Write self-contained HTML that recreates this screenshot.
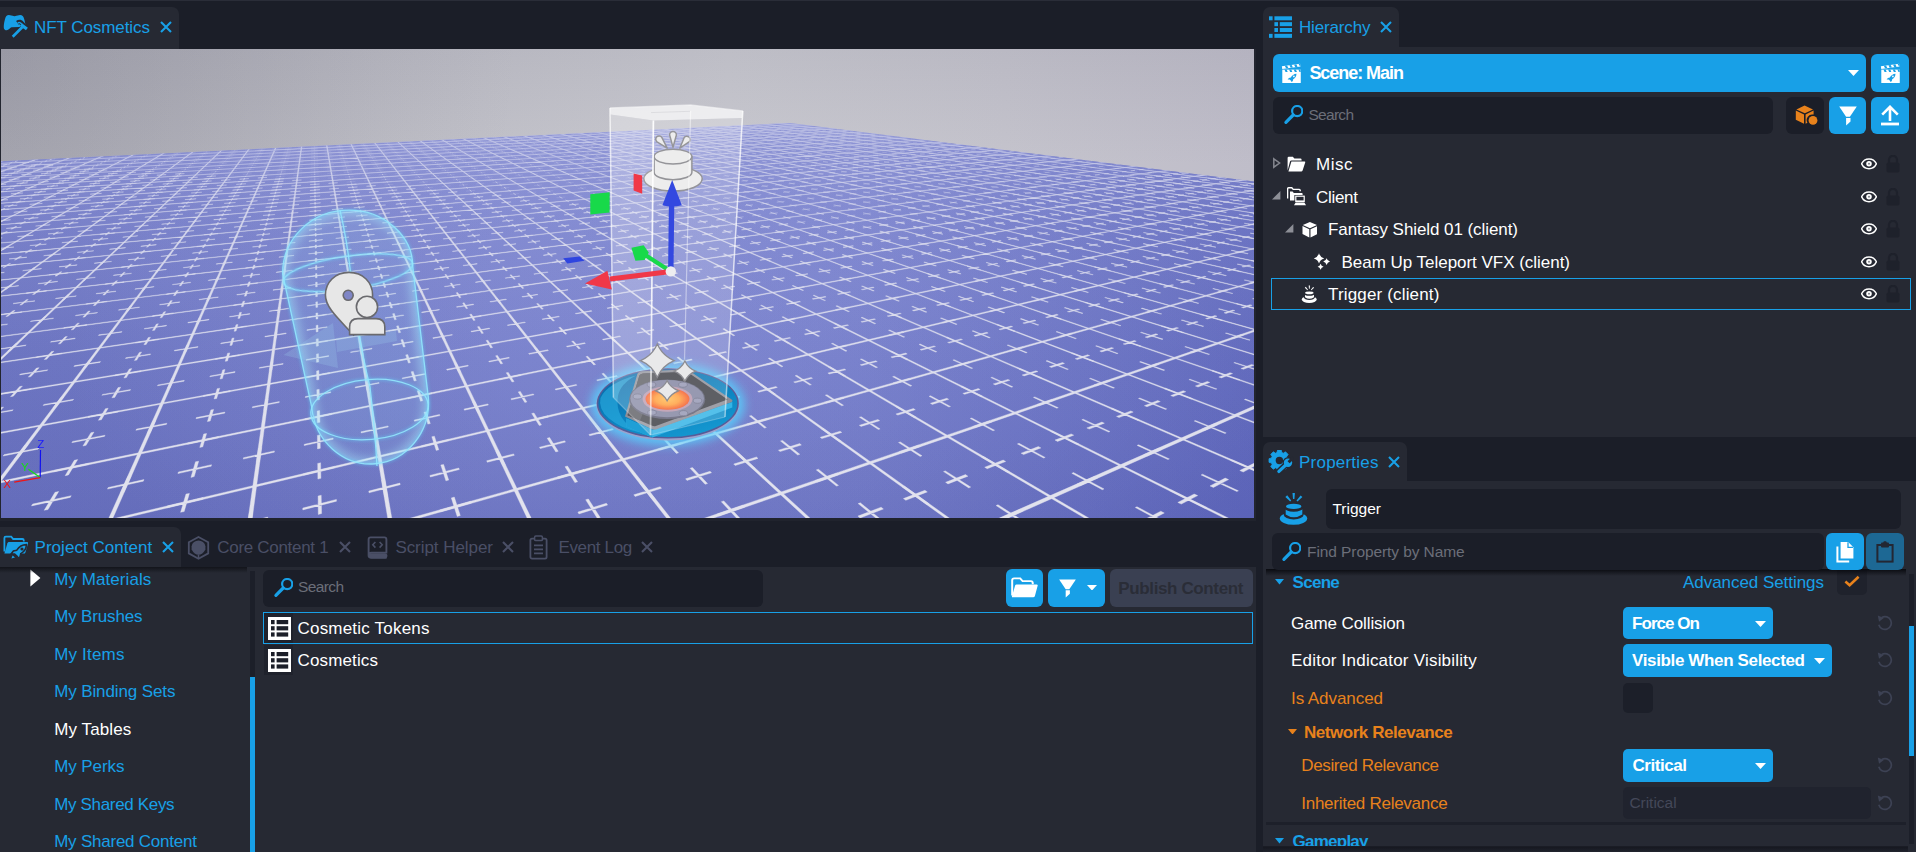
<!DOCTYPE html>
<html><head><meta charset="utf-8"><title>NFT Cosmetics</title>
<style>
html,body{margin:0;padding:0;}
body{width:1916px;height:852px;overflow:hidden;background:#1b1e28;font-family:"Liberation Sans",sans-serif;position:relative;}
.t{position:absolute;white-space:nowrap;line-height:20px;height:20px;}
.r{position:absolute;}
svg{position:absolute;overflow:hidden;}
</style></head><body>
<svg style="left:1px;top:49px" width="1253" height="469" viewBox="1 49 1253 469">
<defs>
<linearGradient id="sky" x1="0" y1="0" x2="1" y2="0"><stop offset="0" stop-color="#b0b0b9"/><stop offset=".3" stop-color="#bfbfc7"/><stop offset=".58" stop-color="#c9c9d0"/><stop offset=".8" stop-color="#c5c4cd"/><stop offset="1" stop-color="#bfbdc9"/></linearGradient>
<linearGradient id="skyv" gradientUnits="userSpaceOnUse" x1="0" y1="49" x2="0" y2="165"><stop offset="0" stop-color="#55556a" stop-opacity=".1"/><stop offset="1" stop-color="#55556a" stop-opacity="0"/></linearGradient>
<radialGradient id="skyc" gradientUnits="userSpaceOnUse" cx="0" cy="49" r="520"><stop offset="0" stop-color="#4a4a5c" stop-opacity=".15"/><stop offset="1" stop-color="#4a4a5c" stop-opacity="0"/></radialGradient>
<linearGradient id="gnd" gradientUnits="userSpaceOnUse" x1="0" y1="120" x2="0" y2="518"><stop offset="0" stop-color="#8c92d0"/><stop offset=".25" stop-color="#7c84cb"/><stop offset=".6" stop-color="#7079c4"/><stop offset="1" stop-color="#6870bd"/></linearGradient>
<linearGradient id="fog" gradientUnits="userSpaceOnUse" x1="0" y1="120" x2="0" y2="518"><stop offset="0" stop-color="#959cdb" stop-opacity=".42"/><stop offset=".12" stop-color="#9299da" stop-opacity=".3"/><stop offset=".3" stop-color="#8e95d6" stop-opacity=".16"/><stop offset=".6" stop-color="#8c92d0" stop-opacity=".06"/><stop offset="1" stop-color="#8c92d0" stop-opacity="0"/></linearGradient>
<linearGradient id="boxg" gradientUnits="userSpaceOnUse" x1="0" y1="105" x2="0" y2="435"><stop offset="0" stop-color="#fff" stop-opacity=".5"/><stop offset=".3" stop-color="#fff" stop-opacity=".44"/><stop offset=".7" stop-color="#fff" stop-opacity=".4"/><stop offset="1" stop-color="#fff" stop-opacity=".36"/></linearGradient>
<linearGradient id="boxe" gradientUnits="userSpaceOnUse" x1="0" y1="105" x2="0" y2="435"><stop offset="0" stop-color="#fff" stop-opacity="1"/><stop offset=".7" stop-color="#fff" stop-opacity=".85"/><stop offset="1" stop-color="#fff" stop-opacity=".55"/></linearGradient>
<radialGradient id="orb"><stop offset="0" stop-color="#ffbf5a"/><stop offset=".55" stop-color="#ffa040"/><stop offset="1" stop-color="#f45a2c"/></radialGradient>
<linearGradient id="padb" x1="0" y1="0" x2=".6" y2="1"><stop offset="0" stop-color="#0a64a4"/><stop offset=".5" stop-color="#0a7cba"/><stop offset="1" stop-color="#1496cf"/></linearGradient>
<filter id="b2" x="-20%" y="-20%" width="140%" height="140%"><feGaussianBlur stdDeviation="1.6"/></filter>
<filter id="b4" x="-20%" y="-20%" width="140%" height="140%"><feGaussianBlur stdDeviation="4"/></filter>
<filter id="b5" x="-20%" y="-30%" width="140%" height="160%"><feGaussianBlur stdDeviation="5"/></filter>
<linearGradient id="gsh" gradientUnits="userSpaceOnUse" x1="560" y1="0" x2="1254" y2="0"><stop offset="0" stop-color="#5058b8" stop-opacity="0"/><stop offset=".45" stop-color="#4c54b2" stop-opacity=".06"/><stop offset="1" stop-color="#4c54b2" stop-opacity=".46"/></linearGradient>
<linearGradient id="gsl" gradientUnits="userSpaceOnUse" x1="0" y1="0" x2="500" y2="0"><stop offset="0" stop-color="#5860b4" stop-opacity=".24"/><stop offset="1" stop-color="#5860b4" stop-opacity="0"/></linearGradient>
<filter id="gb" x="0" y="0" width="100%" height="100%"><feGaussianBlur stdDeviation=".55"/></filter>
<radialGradient id="glt" gradientUnits="userSpaceOnUse" cx="680" cy="360" r="620" gradientTransform="translate(0 180) scale(1 .5)"><stop offset="0" stop-color="#b0b8ff" stop-opacity=".2"/><stop offset=".6" stop-color="#b0b8ff" stop-opacity=".09"/><stop offset="1" stop-color="#b0b8ff" stop-opacity="0"/></radialGradient>
<clipPath id="gc"><path d="M0 161.3L790 123L1255 181.7V519H0z"/></clipPath>
</defs>
<rect x="0" y="48" width="1256" height="472" fill="url(#sky)"/><rect x="0" y="48" width="1256" height="140" fill="url(#skyv)"/><rect x="0" y="48" width="600" height="140" fill="url(#skyc)"/>
<g clip-path="url(#gc)">
<rect x="0" y="100" width="1256" height="420" fill="url(#gnd)"/><rect x="0" y="100" width="1256" height="420" fill="url(#gsh)"/><rect x="0" y="100" width="1256" height="420" fill="url(#gsl)"/><rect x="0" y="100" width="1256" height="420" fill="url(#glt)"/>
<g filter="url(#gb)"><g opacity=".93" fill="#ececf2" stroke="#ececf2" stroke-width=".4">
<path d="M-61.3 170.3l1.2 0l35.9-10.2l-1.1 0zM-61.3 180.5l1.3-0.1l70.4-22l-0.9 0.1zM-61.4 192.8l1.4 0l104-35.9l-1 0zM-61.5 208.1l1.6-0.1l136.3-52.7l-0.9 0.1zM-61.6 227.5l1.8-0.2l167.6-73.4l-0.9 0zM-61.7 252.8l2-0.2l197.9-100.1l-0.8 0zM-62 287.5l2.5-0.3l227.2-136.1l-0.9 0zM-62.3 337.8l3-0.4l255.5-187.7l-0.8 0.1zM-62.7 417.3l3.8-0.7l282.8-268.1l-0.8 0zM-63.6 561.8l5.4-1.3l309-413.3l-0.8 0zM79.3 583.9l5.2-1.4l192.4-436.5l-0.8 0zM239.2 581.5l4.8-1.4l58.2-435.3l-0.7 0zM398.6 584.2l4.4-1.4l-76.2-439.2l-0.7 0.1zM557.2 581.8l3.9-1.4l-210.4-437.9l-0.7 0.1zM718.3 584.5l3.5-1.4l-347.8-441.7l-0.7 0.1zM875.5 582.1l3.1-1.3l-482-440.4l-0.6 0zM1038.4 584.9l2.6-1.4l-622.4-444.1l-0.6 0zM1194.2 582.5l2.3-1.4l-756.5-442.7l-0.6 0zM1319.2 565.4l1.9-1.3l-860.2-426.7l-0.6 0zM1325 501.4l1.6-1l-845.4-364l-0.6 0.1zM1322.1 449l1.4-0.7l-822.5-312.8l-0.5 0zM1319.8 407.9l1.3-0.6l-800.8-272.7l-0.5 0zM1323.9 376.5l1.1-0.5l-785.8-242.3l-0.6 0zM1321.8 348.8l1-0.4l-765.3-215.5l-0.5 0zM1320.1 325.7l0.9-0.4l-745.6-193.3l-0.5 0zM1323.2 307.1l0.9-0.3l-731.2-175.6l-0.5 0zM1321.6 290l0.9-0.3l-712.5-159.3l-0.5 0zM1320.3 275.2l0.7-0.3l-694.4-145.3l-0.4 0.1zM1322.8 262.9l0.7-0.2l-680.6-133.8l-0.4 0zM1321.5 251.3l0.7-0.2l-663.4-123l-0.4 0zM1320.4 241l0.6-0.2l-646.6-113.4l-0.5 0zM1322.5 232.3l0.7-0.1l-633.6-105.5l-0.5 0zM1321.4 223.9l0.6-0.1l-617.6-97.8l-0.4 0zM1320.5 216.4l0.5-0.2l-602-90.9l-0.5 0zM1322.3 209.9l0.6-0.1l-589.7-85.2l-0.4 0.1zM1321.4 203.5l0.5-0.1l-574.8-79.4l-0.4 0zM1320.5 197.7l0.5 0l-560.3-74.3l-0.4 0zM1322.2 192.7l0.4-0.1l-548.5-69.9l-0.4 0.1zM1321.3 187.8l0.5-0.1l-534.7-65.6l-0.4 0zM1197.8 583.2l124.9-77.8l-4.9-2.1l-125 77zM862.4 582.7l459.8-204.2l-3.5-1l-459.4 202.2zM527.8 582.1l794.1-273.8l-2.7-0.6l-792.6 271.4zM193.9 581.5l1127.9-317.8l-2.2-0.4l-1125 315.3zM-61.9 562.5l1383.5-329.6l-1.8-0.3l-1379.7 327.2zM-65.4 496.5l1387-286.2l-1.7-0.2l-1383.5 284.3zM-60.9 444.6l1382.4-251.5l-1.4-0.2l-1379.5 250.2zM-63.8 404.9l1364.1-222l-1.2-0.2l-1361.5 220.9zM-66.1 372.7l1324-194.9l-1.2-0.2l-1321.5 194.1zM-62.7 345.3l1281.7-172.2l-1.1-0.1l-1279.5 171.5zM-64.8 323l1248-154.2l-1-0.1l-1245.9 153.6zM-62 303.5l1212.1-138.7l-1-0.1l-1210.1 138.2zM-63.8 287.1l1183.2-126l-0.9-0.1l-1181.4 125.6zM-61.5 272.5l1152.4-114.8l-0.8-0.1l-1150.7 114.4zM-63.1 260l1127.4-105.5l-0.8-0.1l-1125.8 105.2zM-61 248.6l1100.5-97.1l-0.7-0.1l-1099.1 96.8zM-62.5 238.7l1078.8-90l-0.7-0.1l-1077.4 89.8zM-60.7 229.6l1055.2-83.5l-0.6-0.1l-1053.9 83.3zM-62 221.6l1036-78l-0.6-0.1l-1034.8 77.8zM-60.4 214.2l1015.1-72.9l-0.5-0.1l-1014 72.7zM-61.6 207.6l998.1-68.5l-0.5-0.1l-997.1 68.3zM-62.8 201.5l982.1-64.5l-0.5-0.1l-981 64.4zM-61.3 195.8l964.4-60.8l-0.5 0l-963.4 60.6zM-62.4 190.7l950.1-57.5l-0.5-0.1l-949.1 57.4zM-61.1 185.8l934.1-54.4l-0.4 0l-933.2 54.3zM-62 181.5l921.1-51.7l-0.4-0.1l-920.3 51.6zM-60.8 177.3l906.7-49.1l-0.4-0.1l-905.9 49zM-61.7 173.5l895-46.9l-0.4 0l-894.2 46.7zM-60.6 169.8l881.9-44.6l-0.4 0l-881.1 44.5zM-61.5 166.5l871.3-42.7l-0.3 0l-870.6 42.6zM-60.5 163.3l859.3-40.8l-0.3 0l-858.5 40.7z"/>
<path d="M-18.1 166l9.3-0.5l0.3-0.1l-9.3 0.5zM-15.3 166.2l0.8 0l3.2-1l-0.9 0zM-18.6 171.2l9.8-0.5l0.3-0.1l-9.8 0.5zM-15.7 171.5l1-0.1l3.3-1.1l-1 0.1zM-12 169.1l9.5-0.5l0.3-0.1l-9.5 0.5zM-9.1 169.3l0.9 0l3.1-1.1l-0.9 0.1zM-5.7 167l9.3-0.4l0.3-0.1l-9.3 0.4zM-2.9 167.3l0.9-0.1l3.1-1l-0.9 0.1zM0.4 165.1l9.1-0.5l0.3-0.1l-9.1 0.5zM3.2 165.3l0.9 0l2.9-1l-0.9 0zM-19.1 177l10.3-0.6l0.3-0.1l-10.3 0.6zM-16 177.3l0.9-0.1l3.5-1.2l-1 0.1zM-5.5 172.4l9.8-0.6l0.3-0.1l-9.8 0.6zM-2.6 172.6l1 0l3.2-1.1l-1 0zM7 168.1l9.3-0.5l0.3-0.1l-9.3 0.5zM9.9 168.3l0.9 0l2.9-1l-0.9 0zM-12.4 180.8l10.6-0.6l0.4-0.1l-10.6 0.6zM-9.2 181.1l1-0.1l3.6-1.2l-1.1 0zM-5.4 178.3l10.4-0.6l0.3-0.1l-10.3 0.5zM-2.2 178.6l1-0.1l3.3-1.2l-0.9 0zM1.4 175.9l10-0.6l0.4-0.1l-10.1 0.5zM4.5 176.1l0.9 0l3.3-1.2l-1 0.1zM7.8 173.5l9.9-0.5l0.2-0.1l-9.8 0.5zM10.9 173.8l0.9 0l3.1-1.2l-0.9 0.1zM14 171.3l9.6-0.5l0.3-0.1l-9.6 0.5zM17 171.6l0.9-0.1l3-1.1l-0.9 0.1zM19.9 169.2l9.4-0.5l0.3-0.1l-9.4 0.5zM22.9 169.4l0.9 0l2.8-1l-0.9 0zM25.6 167.1l9.2-0.4l0.3-0.1l-9.2 0.4zM28.5 167.4l0.9-0.1l2.8-1l-0.9 0.1zM31.1 165.2l9-0.5l0.3-0.1l-9 0.5zM34 165.4l0.9 0l2.6-1l-0.9 0zM-5.2 184.9l11-0.7l0.3-0.1l-10.9 0.6zM-1.8 185.2l1-0.1l3.6-1.4l-1.1 0.1zM8.7 179.6l10.4-0.6l0.3-0.1l-10.4 0.6zM11.9 179.9l1.1-0.1l3.2-1.2l-1 0zM21.4 174.7l9.9-0.5l0.3-0.1l-9.9 0.5zM24.6 175l0.9 0l3-1.2l-0.9 0.1zM33.1 170.3l9.5-0.5l0.2-0.1l-9.4 0.5zM36.2 170.6l0.9-0.1l2.7-1.1l-0.9 0.1zM43.9 166.2l9.1-0.5l0.2-0.1l-9 0.5zM46.9 166.4l0.8 0l2.6-1l-0.9 0.1zM-12.8 195.4l11.9-0.7l0.4-0.2l-11.9 0.8zM-9.2 195.8l1.1-0.1l4-1.6l-1.2 0.1zM-4.9 192.2l11.6-0.7l0.3-0.1l-11.6 0.7zM-1.4 192.6l1.1-0.1l3.8-1.5l-1.1 0.1zM2.6 189.2l11.3-0.7l0.3-0.1l-11.3 0.7zM6.1 189.6l1-0.1l3.6-1.5l-1 0.1zM9.7 186.3l11-0.6l0.4-0.2l-11 0.7zM13.2 186.7l1-0.1l3.4-1.4l-1 0.1zM16.6 183.6l10.7-0.7l0.3-0.1l-10.7 0.6zM20 183.9l1-0.1l3.3-1.3l-1.1 0zM23.1 180.9l10.5-0.6l0.3-0.1l-10.5 0.6zM26.4 181.2l1 0l3.2-1.3l-1 0zM29.4 178.4l10.2-0.6l0.3-0.1l-10.2 0.6zM32.6 178.7l1-0.1l3-1.2l-1 0.1zM35.4 176l9.9-0.6l0.3-0.1l-9.9 0.6zM38.6 176.3l0.9-0.1l2.9-1.2l-0.9 0.1zM41.1 173.7l9.7-0.6l0.3-0.1l-9.7 0.6zM44.3 173.9l0.9 0l2.8-1.1l-1 0zM46.6 171.4l9.5-0.5l0.3-0.1l-9.5 0.5zM49.7 171.7l1-0.1l2.6-1l-0.9 0zM51.9 169.3l9.3-0.5l0.2-0.1l-9.2 0.5zM55 169.5l0.9 0l2.5-1l-0.9 0zM57 167.2l9.1-0.4l0.2-0.1l-9 0.5zM60 167.5l0.9-0.1l2.4-1l-0.8 0.1zM-4.7 200.6l12.4-0.8l0.3-0.2l-12.3 0.8zM-0.9 201l1.2-0.1l4-1.7l-1.2 0.1zM10.9 193.9l11.7-0.8l0.3-0.1l-11.6 0.7zM14.5 194.3l1.2-0.1l3.6-1.6l-1.1 0.1zM25 187.8l11.1-0.7l0.3-0.1l-11.1 0.7zM28.5 188.2l1.1-0.1l3.3-1.4l-1.1 0zM37.9 182.3l10.5-0.6l0.2-0.2l-10.4 0.7zM41.3 182.6l1 0l3-1.4l-1 0.1zM49.6 177.2l10-0.5l0.3-0.1l-10 0.5zM52.9 177.5l1 0l2.7-1.2l-0.9 0zM60.4 172.6l9.6-0.5l0.2-0.1l-9.5 0.5zM63.6 172.9l0.9-0.1l2.5-1.1l-0.9 0.1zM70.4 168.3l9.1-0.5l0.2-0.1l-9.1 0.5zM73.4 168.6l0.9-0.1l2.4-1l-0.9 0zM-13.4 214.3l13.6-1l0.5-0.2l-13.7 1zM-9.3 214.8l1.3-0.1l4.5-2.1l-1.2 0.1zM-4.4 210.1l13.2-0.9l0.4-0.2l-13.2 0.9zM-0.4 210.6l1.3-0.1l4.3-2l-1.3 0.1zM4.1 206.2l12.8-0.9l0.4-0.2l-12.8 0.9zM8.1 206.7l1.2-0.1l4.1-1.9l-1.3 0.1zM12.2 202.5l12.4-0.9l0.4-0.1l-12.4 0.8zM16.1 202.9l1.2-0.1l3.8-1.8l-1.2 0.1zM19.9 199l12-0.9l0.4-0.1l-12.1 0.8zM23.7 199.4l1.1-0.1l3.7-1.7l-1.2 0.1zM27.1 195.6l11.8-0.8l0.3-0.1l-11.7 0.7zM30.9 196l1.1-0.1l3.5-1.6l-1.1 0.1zM34.1 192.4l11.4-0.7l0.3-0.2l-11.4 0.8zM37.7 192.8l1.1-0.1l3.3-1.5l-1.1 0zM40.7 189.4l11.1-0.7l0.3-0.2l-11.1 0.7zM44.3 189.7l1 0l3.2-1.5l-1.1 0zM47 186.5l10.8-0.7l0.3-0.1l-10.8 0.6zM50.5 186.8l1-0.1l3-1.4l-1 0.1zM53 183.7l10.5-0.6l0.3-0.2l-10.5 0.7zM56.4 184l1.1 0l2.8-1.4l-1 0.1zM58.7 181.1l10.3-0.7l0.3-0.1l-10.3 0.6zM62.1 181.4l1-0.1l2.8-1.3l-1 0.1zM64.2 178.5l10-0.6l0.3-0.1l-10 0.6zM67.6 178.8l0.9 0l2.7-1.3l-1 0.1zM69.5 176.1l9.8-0.6l0.2-0.1l-9.8 0.6zM72.8 176.4l0.9-0.1l2.5-1.1l-0.9 0zM74.5 173.8l9.6-0.6l0.2-0.1l-9.5 0.6zM77.8 174.1l0.9-0.1l2.4-1.1l-0.9 0zM79.4 171.6l9.3-0.6l0.2-0.1l-9.3 0.5zM82.6 171.8l0.9 0l2.3-1.1l-0.9 0zM84 169.4l9.2-0.5l0.2-0.1l-9.2 0.5zM87.2 169.7l0.8-0.1l2.3-1l-0.9 0zM-4.1 221.1l14.2-1.1l0.5-0.3l-14.2 1.1zM0.3 221.6l1.4-0.1l4.5-2.3l-1.3 0.1zM13.7 212.3l13.3-1l0.3-0.2l-13.2 1zM17.9 212.8l1.2-0.1l4.1-2.1l-1.3 0.1zM29.6 204.4l12.4-0.9l0.4-0.1l-12.5 0.8zM33.5 204.9l1.3-0.1l3.6-1.9l-1.2 0.1zM43.8 197.3l11.8-0.7l0.3-0.2l-11.7 0.8zM47.7 197.7l1.1 0l3.3-1.7l-1.1 0.1zM56.7 191l11.2-0.8l0.2-0.1l-11.1 0.7zM60.4 191.3l1.1-0.1l3-1.5l-1.1 0.1zM68.5 185.1l10.5-0.6l0.3-0.1l-10.6 0.6zM72 185.5l1-0.1l2.7-1.4l-1 0.1zM79.1 179.8l10.1-0.6l0.2-0.1l-10 0.6zM82.6 180.1l0.9 0l2.5-1.3l-0.9 0.1zM88.9 175l9.6-0.6l0.2-0.1l-9.5 0.6zM92.2 175.3l1-0.1l2.3-1.1l-1 0zM98 170.5l9.1-0.5l0.2-0.1l-9.1 0.5zM101.1 170.8l0.9-0.1l2.1-1l-0.8 0zM-14.2 239.4l15.9-1.4l0.5-0.2l-15.8 1.3zM-9.3 240.1l1.5-0.1l5.2-2.9l-1.5 0.1zM-3.7 233.8l15.4-1.3l0.4-0.3l-15.3 1.3zM1 234.4l1.5-0.1l4.9-2.7l-1.4 0.1zM6.2 228.5l14.7-1.2l0.5-0.2l-14.8 1.2zM10.8 229.1l1.4-0.1l4.6-2.5l-1.4 0.1zM15.4 223.6l14.3-1.2l0.4-0.2l-14.3 1.1zM19.9 224.1l1.4-0.1l4.3-2.4l-1.3 0.1zM24.1 218.9l13.8-1.1l0.4-0.2l-13.8 1.1zM28.5 219.4l1.3-0.1l4.1-2.2l-1.3 0.1zM32.3 214.5l13.4-1l0.3-0.2l-13.3 1zM36.6 215l1.3-0.1l3.9-2.1l-1.3 0.1zM40.1 210.3l12.9-0.9l0.3-0.2l-12.9 0.9zM44.3 210.8l1.2-0.1l3.7-2l-1.3 0.1zM47.4 206.4l12.5-0.9l0.4-0.2l-12.5 0.9zM51.5 206.9l1.2-0.1l3.5-1.9l-1.2 0.1zM54.4 202.7l12.1-0.9l0.3-0.2l-12.1 0.9zM58.4 203.1l1.2-0.1l3.2-1.8l-1.1 0.1zM61 199.1l11.8-0.8l0.3-0.1l-11.8 0.8zM64.9 199.5l1.1 0l3.2-1.7l-1.2 0zM67.2 195.8l11.5-0.8l0.3-0.2l-11.5 0.8zM71.1 196.2l1.1-0.1l3-1.6l-1.1 0zM73.2 192.6l11.2-0.8l0.2-0.1l-11.1 0.7zM77 192.9l1.1 0l2.8-1.6l-1.1 0.1zM78.9 189.5l10.9-0.7l0.2-0.1l-10.9 0.7zM82.6 189.9l1-0.1l2.7-1.5l-1 0.1zM84.3 186.6l10.6-0.6l0.2-0.2l-10.6 0.7zM87.9 187l1.1-0.1l2.5-1.4l-1 0zM89.5 183.8l10.3-0.6l0.2-0.1l-10.3 0.6zM93 184.2l1-0.1l2.5-1.3l-1 0zM94.4 181.2l10.1-0.6l0.2-0.1l-10.1 0.6zM97.9 181.5l1-0.1l2.3-1.2l-0.9 0zM99.1 178.7l9.9-0.6l0.2-0.1l-9.8 0.5zM102.6 179l0.9-0.1l2.3-1.2l-1 0zM103.7 176.2l9.6-0.5l0.2-0.1l-9.6 0.5zM107.1 176.5l0.9 0l2.1-1.2l-0.9 0zM108 173.9l9.4-0.5l0.2-0.1l-9.4 0.5zM111.3 174.2l0.9-0.1l2.1-1.1l-0.9 0zM112.2 171.7l9.2-0.5l0.2-0.2l-9.2 0.6zM115.4 171.9l0.9 0l2-1.1l-0.9 0zM-3.2 248.7l16.6-1.5l0.5-0.3l-16.6 1.5zM1.9 249.5l1.6-0.1l5.3-3.2l-1.5 0.1zM17.4 236.7l15.4-1.3l0.5-0.3l-15.4 1.3zM22.3 237.4l1.5-0.2l4.6-2.7l-1.4 0.1zM35.5 226.1l14.4-1.1l0.3-0.3l-14.3 1.2zM40.1 226.7l1.4-0.1l4.1-2.5l-1.3 0.2zM51.5 216.8l13.4-1.1l0.4-0.2l-13.4 1.1zM55.9 217.3l1.3-0.1l3.7-2.2l-1.3 0.1zM65.8 208.4l12.6-0.9l0.3-0.2l-12.6 1zM70 208.9l1.2-0.1l3.3-1.9l-1.2 0.1zM78.6 201l11.8-0.9l0.3-0.1l-11.9 0.8zM82.6 201.4l1.1-0.1l3-1.7l-1.2 0zM90.1 194.2l11.2-0.7l0.3-0.2l-11.3 0.8zM94 194.6l1-0.1l2.7-1.5l-1.1 0zM100.5 188.1l10.7-0.7l0.2-0.1l-10.6 0.7zM104.3 188.5l1-0.1l2.4-1.4l-1 0zM110 182.6l10.2-0.6l0.2-0.2l-10.1 0.6zM113.6 182.9l1-0.1l2.2-1.3l-1 0.1zM118.7 177.5l9.7-0.6l0.2-0.1l-9.7 0.6zM122.2 177.8l0.9-0.1l2-1.2l-0.9 0.1zM126.7 172.8l9.2-0.5l0.2-0.1l-9.2 0.5zM130.1 173.1l0.8-0.1l1.9-1.1l-0.9 0.1zM-15.2 274.7l19.1-2l0.5-0.4l-19 2zM-9.4 275.7l1.8-0.2l6.3-4.2l-1.8 0.2zM-2.7 266.6l18.3-1.8l0.5-0.4l-18.2 1.8zM3 267.5l1.7-0.2l5.8-3.8l-1.7 0.2zM9 259.1l17.4-1.7l0.5-0.3l-17.4 1.7zM14.4 260l1.7-0.2l5.4-3.5l-1.7 0.1zM19.8 252.2l16.7-1.6l0.5-0.3l-16.7 1.6zM25.1 253l1.6-0.2l5-3.3l-1.6 0.2zM29.8 245.7l16.1-1.4l0.5-0.3l-16.1 1.4zM35 246.5l1.6-0.2l4.6-3l-1.5 0.1zM39.2 239.7l15.5-1.4l0.4-0.2l-15.4 1.3zM44.3 240.4l1.5-0.1l4.3-2.9l-1.4 0.1zM48 234.1l15-1.3l0.3-0.3l-14.9 1.3zM52.9 234.7l1.5-0.1l4.1-2.7l-1.5 0.1zM56.3 228.8l14.4-1.2l0.3-0.3l-14.4 1.2zM61 229.4l1.4-0.1l3.9-2.6l-1.4 0.2zM64 223.8l13.9-1.1l0.4-0.2l-13.9 1.1zM68.7 224.4l1.3-0.1l3.6-2.4l-1.3 0.1zM71.3 219.1l13.5-1l0.3-0.3l-13.5 1.1zM75.8 219.7l1.4-0.1l3.4-2.3l-1.3 0.1zM78.2 214.7l13-1l0.3-0.2l-13 1zM82.6 215.2l1.3-0.1l3.2-2.1l-1.2 0.1zM84.7 210.5l12.6-0.9l0.3-0.2l-12.6 1zM89 211l1.2-0.1l3.1-2l-1.2 0.1zM90.8 206.6l12.3-0.9l0.3-0.2l-12.3 0.9zM95.1 207.1l1.1-0.1l2.9-1.9l-1.1 0.1zM96.6 202.9l12-0.9l0.2-0.2l-11.9 0.9zM100.8 203.3l1.1-0.1l2.8-1.8l-1.2 0.1zM102.2 199.3l11.6-0.8l0.2-0.2l-11.6 0.9zM106.2 199.7l1.1 0l2.6-1.8l-1.1 0.1zM107.4 195.9l11.3-0.7l0.2-0.2l-11.2 0.8zM111.4 196.3l1.1 0l2.5-1.7l-1.1 0.1zM112.4 192.7l11-0.7l0.2-0.1l-11 0.7zM116.3 193.1l1.1-0.1l2.3-1.5l-1 0.1zM117.2 189.7l10.7-0.7l0.2-0.2l-10.7 0.7zM121 190l1 0l2.3-1.5l-1.1 0.1zM121.7 186.8l10.4-0.7l0.2-0.1l-10.4 0.6zM125.5 187.1l1-0.1l2.1-1.4l-1 0.1zM126 184l10.2-0.6l0.2-0.2l-10.2 0.7zM129.7 184.3l1 0l2-1.4l-0.9 0.1zM130.2 181.3l9.9-0.6l0.2-0.1l-9.9 0.6zM133.8 181.6l0.9 0l2-1.3l-0.9 0.1zM134.1 178.8l9.7-0.6l0.2-0.1l-9.7 0.6zM137.7 179.1l0.9-0.1l1.9-1.2l-0.9 0.1zM137.9 176.4l9.5-0.6l0.2-0.1l-9.5 0.5zM141.4 176.6l0.9 0l1.8-1.2l-0.9 0.1zM141.6 174l9.2-0.5l0.2-0.1l-9.3 0.5zM145 174.3l0.9-0.1l1.7-1.1l-0.9 0.1zM145.1 171.8l9-0.5l0.2-0.1l-9.1 0.5zM148.4 172l0.9 0l1.6-1.1l-0.8 0.1zM-2 288.3l20.2-2.3l0.6-0.4l-20.2 2.2zM4.2 289.4l2-0.2l6.4-4.7l-1.9 0.2zM22.6 270.8l18.4-1.9l0.5-0.4l-18.4 1.9zM28.4 271.7l1.8-0.2l5.5-3.9l-1.8 0.1zM43.6 255.8l16.9-1.6l0.4-0.4l-16.8 1.7zM49.1 256.6l1.7-0.1l4.6-3.5l-1.6 0.2zM61.8 242.8l15.6-1.4l0.4-0.3l-15.6 1.4zM67 243.6l1.5-0.2l4.1-3l-1.5 0.2zM77.7 231.5l14.5-1.2l0.3-0.3l-14.4 1.3zM82.6 232.2l1.4-0.2l3.6-2.6l-1.4 0.1zM91.7 221.6l13.5-1.1l0.3-0.3l-13.5 1.1zM96.4 222.1l1.3-0.1l3.2-2.3l-1.3 0.1zM104.1 212.7l12.7-1l0.3-0.2l-12.7 1zM108.6 213.2l1.2-0.1l2.8-2.1l-1.2 0.1zM115.2 204.8l12-0.9l0.2-0.1l-11.9 0.8zM119.5 205.3l1.2-0.1l2.5-1.9l-1.2 0.1zM125.2 197.7l11.3-0.8l0.2-0.2l-11.3 0.8zM129.3 198.1l1.1-0.1l2.3-1.6l-1.1 0zM134.2 191.3l10.8-0.7l0.1-0.2l-10.7 0.7zM138.1 191.6l1.1 0l2.1-1.5l-1.1 0zM142.4 185.4l10.2-0.6l0.2-0.1l-10.2 0.6zM146.2 185.8l1-0.1l1.9-1.4l-1 0.1zM149.9 180.1l9.7-0.6l0.2-0.1l-9.7 0.6zM153.5 180.4l1 0l1.7-1.3l-0.9 0.1zM156.8 175.2l9.2-0.5l0.2-0.1l-9.3 0.5zM160.2 175.5l0.9 0l1.6-1.2l-0.9 0.1zM-16.8 327.6l23.8-3l0.7-0.7l-23.7 3.1zM-9.6 329.2l2.3-0.3l7.9-6.5l-2.3 0.3zM-1.2 315.1l22.6-2.8l0.6-0.5l-22.5 2.8zM5.8 316.6l2.2-0.3l7.1-5.9l-2.1 0.3zM13 303.8l21.4-2.6l0.6-0.5l-21.3 2.5zM19.8 305.1l2.1-0.3l6.4-5.3l-2 0.2zM26 293.4l20.4-2.3l0.5-0.5l-20.3 2.3zM32.5 294.6l2-0.3l5.9-4.9l-1.9 0.3zM37.9 283.9l19.4-2.2l0.5-0.4l-19.3 2.1zM44.2 285l1.9-0.3l5.5-4.5l-1.9 0.2zM48.9 275.1l18.5-2l0.5-0.4l-18.5 2zM55 276.1l1.8-0.2l5-4.1l-1.7 0.1zM59 267l17.7-1.8l0.5-0.4l-17.7 1.8zM64.9 267.9l1.8-0.1l4.6-3.9l-1.7 0.2zM68.4 259.5l17-1.7l0.4-0.3l-17 1.7zM74.1 260.4l1.7-0.2l4.3-3.6l-1.6 0.2zM77.1 252.6l16.3-1.6l0.4-0.3l-16.3 1.5zM82.7 253.4l1.6-0.2l4-3.3l-1.6 0.1zM85.2 246.1l15.7-1.5l0.4-0.3l-15.7 1.5zM90.6 246.8l1.5-0.1l3.8-3.1l-1.5 0.1zM92.8 240l15.1-1.3l0.3-0.3l-15.1 1.3zM98 240.7l1.5-0.1l3.5-2.9l-1.4 0.1zM99.9 234.4l14.6-1.3l0.3-0.3l-14.6 1.3zM105 235l1.4-0.1l3.3-2.7l-1.4 0.1zM106.5 229.1l14.1-1.3l0.3-0.2l-14.1 1.2zM111.5 229.7l1.3-0.1l3.1-2.6l-1.3 0.1zM112.7 224.1l13.7-1.2l0.2-0.2l-13.6 1.1zM117.6 224.6l1.3-0.1l2.9-2.4l-1.3 0.1zM118.6 219.4l13.2-1.1l0.3-0.2l-13.2 1.1zM123.3 219.9l1.3-0.1l2.8-2.2l-1.3 0.1zM124.2 214.9l12.7-1l0.3-0.2l-12.8 1zM128.8 215.5l1.2-0.1l2.6-2.2l-1.2 0.1zM129.4 210.8l12.4-1l0.2-0.2l-12.4 1zM133.9 211.2l1.2 0l2.4-2.1l-1.2 0.1zM134.3 206.8l12.1-0.9l0.2-0.2l-12 0.9zM138.7 207.3l1.2-0.1l2.3-1.9l-1.1 0.1zM139 203.1l11.7-0.9l0.2-0.2l-11.7 0.9zM143.3 203.5l1.2-0.1l2.1-1.8l-1.1 0.1zM143.5 199.5l11.3-0.8l0.2-0.2l-11.3 0.8zM147.7 199.9l1.1-0.1l2.1-1.7l-1.1 0.1zM147.7 196.1l11.1-0.8l0.1-0.1l-11 0.8zM151.8 196.5l1.1-0.1l2-1.6l-1.1 0.1zM151.7 192.9l10.8-0.7l0.2-0.2l-10.8 0.8zM155.7 193.3l1.1-0.1l1.9-1.5l-1.1 0zM155.6 189.8l10.4-0.7l0.2-0.1l-10.5 0.7zM159.5 190.2l1-0.1l1.8-1.5l-1 0.1zM159.2 186.9l10.2-0.6l0.2-0.2l-10.2 0.7zM163.1 187.3l1-0.1l1.7-1.4l-1 0zM162.7 184.1l10-0.6l0.1-0.1l-9.9 0.6zM166.5 184.5l0.9-0.1l1.7-1.4l-1 0.1zM166 181.5l9.8-0.6l0.1-0.2l-9.7 0.6zM169.7 181.8l1-0.1l1.5-1.3l-0.9 0.1zM169.2 178.9l9.5-0.6l0.2-0.1l-9.5 0.6zM172.8 179.2l1 0l1.5-1.3l-0.9 0.1zM172.3 176.5l9.3-0.6l0.1-0.1l-9.3 0.6zM175.8 176.8l0.9-0.1l1.5-1.2l-0.9 0.1zM175.2 174.1l9.1-0.5l0.1-0.1l-9.1 0.5zM178.7 174.4l0.9 0l1.3-1.2l-0.8 0.1zM-0.1 349.3l25.5-3.6l0.8-0.7l-25.5 3.6zM7.8 351.1l2.5-0.3l8-7.6l-2.4 0.4zM30.3 321.6l22.8-3l0.6-0.6l-22.7 3zM37.7 323.1l2.2-0.3l6.5-6.2l-2.2 0.3zM55.4 298.7l20.5-2.4l0.5-0.5l-20.5 2.4zM62.2 300l2-0.3l5.4-5.1l-1.9 0.2zM76.3 279.6l18.7-2l0.4-0.4l-18.6 2zM82.7 280.7l1.8-0.2l4.6-4.4l-1.8 0.2zM94.2 263.4l17.1-1.8l0.3-0.3l-17 1.7zM100.1 264.3l1.7-0.2l3.9-3.7l-1.6 0.2zM109.5 249.4l15.8-1.5l0.3-0.3l-15.8 1.5zM115.1 250.2l1.5-0.1l3.4-3.3l-1.5 0.2zM122.8 237.3l14.7-1.3l0.2-0.3l-14.6 1.3zM128.1 238l1.4-0.2l3-2.8l-1.4 0.2zM134.5 226.7l13.7-1.2l0.2-0.3l-13.7 1.2zM139.5 227.3l1.3-0.2l2.6-2.4l-1.3 0.1zM144.8 217.2l12.8-1l0.2-0.2l-12.8 1zM149.6 217.8l1.2-0.1l2.3-2.2l-1.2 0.1zM154 208.9l12.1-1l0.2-0.2l-12.1 1zM158.5 209.3l1.2-0.1l2.1-1.9l-1.2 0.1zM162.3 201.4l11.3-0.9l0.2-0.2l-11.4 0.9zM166.6 201.8l1.1-0.1l1.8-1.8l-1.1 0.1zM169.7 194.6l10.8-0.8l0.1-0.1l-10.7 0.7zM173.8 195l1-0.1l1.7-1.6l-1 0.1zM176.4 188.4l10.3-0.6l0.1-0.2l-10.2 0.7zM180.4 188.8l1-0.1l1.5-1.4l-1 0zM182.5 182.9l9.8-0.7l0.1-0.1l-9.7 0.6zM186.3 183.2l1-0.1l1.4-1.3l-1 0.1zM188.1 177.8l9.4-0.6l0.1-0.1l-9.3 0.5zM191.8 178l0.9 0l1.3-1.2l-0.9 0zM-19.5 416.2l31.8-5.5l0.9-1l-31.6 5.4zM-9.8 419l3.1-0.5l10.3-11.5l-3 0.5zM1.2 394.2l29.6-4.8l0.8-0.9l-29.4 4.8zM10.5 396.7l2.8-0.5l9.1-10.1l-2.7 0.5zM19.5 374.9l27.6-4.3l0.7-0.8l-27.4 4.2zM28.3 377.1l2.7-0.5l8.1-8.9l-2.6 0.4zM35.8 357.6l25.8-3.8l0.7-0.7l-25.8 3.8zM44.2 359.6l2.5-0.4l7.2-8l-2.4 0.4zM50.4 342.2l24.3-3.4l0.6-0.7l-24.3 3.4zM58.4 344l2.4-0.4l6.5-7.2l-2.3 0.4zM63.5 328.3l22.9-3.1l0.6-0.6l-22.9 3.1zM71.2 329.9l2.2-0.3l5.9-6.5l-2.2 0.3zM75.3 315.8l21.8-2.8l0.5-0.6l-21.7 2.8zM82.8 317.2l2.1-0.3l5.3-5.9l-2.1 0.3zM86.1 304.3l20.7-2.5l0.4-0.5l-20.6 2.5zM93.3 305.6l2-0.2l4.8-5.4l-1.9 0.3zM96 293.9l19.6-2.3l0.4-0.5l-19.6 2.3zM102.8 295.1l2-0.2l4.4-4.9l-1.9 0.2zM105 284.3l18.8-2.1l0.3-0.4l-18.7 2.1zM111.6 285.4l1.9-0.2l4-4.5l-1.7 0.2zM113.3 275.5l17.9-1.9l0.4-0.4l-17.9 1.9zM119.7 276.6l1.8-0.2l3.7-4.2l-1.7 0.2zM121 267.4l17.2-1.8l0.3-0.4l-17.2 1.8zM127.2 268.4l1.6-0.2l3.5-3.9l-1.6 0.2zM128.1 259.9l16.5-1.7l0.3-0.3l-16.5 1.7zM134.1 260.8l1.6-0.2l3.2-3.6l-1.6 0.2zM134.7 252.9l15.8-1.6l0.3-0.3l-15.8 1.6zM140.5 253.7l1.5-0.1l3-3.4l-1.5 0.2zM140.8 246.4l15.3-1.5l0.2-0.3l-15.2 1.5zM146.4 247.2l1.5-0.2l2.8-3.1l-1.4 0.1zM146.5 240.3l14.8-1.3l0.2-0.3l-14.7 1.4zM152 241l1.4-0.1l2.7-2.9l-1.4 0.1zM151.9 234.7l14.2-1.3l0.2-0.3l-14.2 1.3zM157.2 235.3l1.4-0.1l2.5-2.7l-1.4 0.1zM156.9 229.3l13.8-1.2l0.2-0.2l-13.7 1.2zM162.1 229.9l1.3-0.1l2.3-2.5l-1.3 0.1zM161.6 224.3l13.3-1.1l0.2-0.2l-13.2 1.1zM166.7 224.9l1.3-0.1l2.1-2.4l-1.2 0.1zM166.1 219.6l12.9-1.1l0.2-0.2l-12.9 1.1zM171 220.2l1.2-0.1l2.1-2.3l-1.2 0.1zM170.3 215.2l12.5-1l0.1-0.2l-12.4 1zM175.1 215.7l1.2-0.1l1.9-2.1l-1.2 0zM174.2 211l12.2-1l0.1-0.2l-12.1 1zM178.9 211.5l1.2-0.1l1.8-2l-1.2 0zM178 207l11.8-0.9l0.1-0.2l-11.7 0.9zM182.5 207.5l1.2-0.1l1.7-1.9l-1.1 0.1zM181.5 203.3l11.5-0.9l0.1-0.2l-11.4 0.9zM186 203.7l1.1-0.1l1.6-1.8l-1.1 0.1zM184.9 199.7l11.1-0.8l0.2-0.2l-11.1 0.8zM189.2 200.1l1.1-0.1l1.6-1.7l-1.1 0.1zM188.1 196.3l10.8-0.8l0.2-0.1l-10.8 0.7zM192.3 196.7l1.1-0.1l1.5-1.6l-1.1 0zM191.2 193.1l10.5-0.8l0.1-0.1l-10.5 0.7zM195.3 193.4l1 0l1.4-1.6l-1 0.1zM194 190l10.3-0.7l0.2-0.1l-10.3 0.7zM198.1 190.4l1-0.1l1.3-1.5l-1 0.1zM196.8 187.1l10-0.7l0.2-0.1l-10.1 0.6zM200.8 187.4l0.9 0l1.3-1.5l-0.9 0.1zM199.5 184.3l9.7-0.7l0.2-0.1l-9.8 0.6zM203.3 184.6l1-0.1l1.2-1.3l-0.9 0zM202 181.6l9.5-0.6l0.1-0.1l-9.5 0.6zM205.8 181.9l0.9 0l1.2-1.3l-1 0zM204.4 179.1l9.3-0.6l0.1-0.2l-9.3 0.6zM208.1 179.4l0.9-0.1l1.1-1.2l-0.9 0zM206.7 176.6l9.1-0.6l0.1-0.1l-9.1 0.6zM210.3 176.9l0.9-0.1l1.1-1.1l-0.9 0zM3.1 456l34.9-6.8l1-1.3l-34.8 6.7zM14.1 459.5l3.4-0.7l10.6-14.2l-3.2 0.6zM43.1 405.5l29.8-5.2l0.8-1l-29.8 5.1zM52.9 408.1l2.9-0.5l8.1-10.8l-2.8 0.5zM73.9 366.5l26.1-4.1l0.6-0.8l-26 4zM82.8 368.5l2.6-0.4l6.3-8.5l-2.4 0.4zM98.4 335.5l23.2-3.3l0.4-0.6l-23.1 3.2zM106.6 337.1l2.2-0.3l5.1-6.8l-2.1 0.3zM118.4 310.2l20.8-2.7l0.4-0.5l-20.8 2.7zM125.9 311.6l2-0.3l4.2-5.6l-2 0.2zM134.9 289.3l18.9-2.3l0.3-0.4l-18.8 2.2zM141.9 290.4l1.8-0.2l3.5-4.7l-1.8 0.2zM148.9 271.6l17.3-1.9l0.2-0.4l-17.2 1.9zM155.3 272.6l1.7-0.2l3-4l-1.6 0.2zM160.8 256.5l16-1.6l0.2-0.3l-15.9 1.6zM166.8 257.4l1.6-0.2l2.6-3.5l-1.5 0.2zM171.1 243.5l14.8-1.4l0.2-0.3l-14.8 1.4zM176.8 244.2l1.4-0.1l2.3-3l-1.4 0.1zM180.1 232.1l13.8-1.3l0.2-0.2l-13.8 1.2zM185.5 232.7l1.3-0.1l2-2.6l-1.3 0.1zM188.1 222.1l12.9-1.1l0.1-0.3l-12.9 1.1zM193.1 222.6l1.3-0.1l1.7-2.3l-1.2 0.1zM195.1 213.2l12.1-1l0.2-0.2l-12.2 1zM199.9 213.7l1.2-0.1l1.5-2.1l-1.1 0.1zM201.4 205.2l11.4-0.9l0.2-0.2l-11.5 0.9zM205.9 205.7l1.1-0.1l1.4-1.9l-1.1 0.1zM207 198.1l10.9-0.8l0.1-0.2l-10.8 0.8zM211.4 198.5l1-0.1l1.3-1.7l-1.1 0.1zM212.1 191.6l10.3-0.7l0.1-0.2l-10.3 0.8zM216.3 192l1-0.1l1.1-1.5l-1 0zM216.8 185.7l9.8-0.6l0.1-0.2l-9.8 0.7zM220.7 186.1l1-0.1l1-1.4l-0.9 0.1zM221 180.4l9.4-0.6l0-0.1l-9.3 0.6zM224.8 180.7l0.9-0.1l1-1.2l-0.9 0zM31.5 505.9l38.7-8.5l1-1.7l-38.6 8.4zM44.2 510.3l3.8-0.8l10.7-18l-3.7 0.8zM53.2 471.9l35.4-7.3l0.8-1.5l-35.3 7.3zM65.1 475.7l3.4-0.8l9.2-15.3l-3.4 0.7zM71.8 442.7l32.6-6.3l0.7-1.2l-32.5 6.2zM82.9 446l3.2-0.7l7.9-13.2l-3.1 0.6zM87.9 417.5l30.2-5.5l0.6-1.1l-30.1 5.4zM98.4 420.3l3-0.6l6.8-11.5l-2.8 0.5zM101.9 395.3l28.2-4.8l0.5-1l-28 4.9zM111.9 397.8l2.8-0.4l6-10.2l-2.6 0.4zM114.4 375.8l26.3-4.2l0.5-0.9l-26.3 4.3zM123.9 378l2.5-0.4l5.4-9l-2.5 0.4zM125.4 358.5l24.8-3.8l0.4-0.8l-24.7 3.8zM134.4 360.5l2.4-0.4l4.8-8.1l-2.3 0.4zM135.3 343l23.3-3.4l0.4-0.7l-23.3 3.4zM143.9 344.7l2.3-0.3l4.3-7.2l-2.2 0.3zM144.2 329l22.1-3.1l0.3-0.6l-22 3.1zM152.4 330.6l2.2-0.3l3.8-6.5l-2 0.3zM152.2 316.4l21-2.8l0.3-0.6l-20.9 2.8zM160.1 317.8l2-0.2l3.6-6l-2 0.3zM159.5 304.9l20-2.5l0.2-0.6l-19.8 2.6zM167.1 306.2l1.9-0.2l3.3-5.4l-1.9 0.2zM166.2 294.4l19-2.3l0.3-0.5l-19 2.4zM173.5 295.6l1.8-0.2l3-4.9l-1.8 0.2zM172.3 284.8l18.2-2.1l0.2-0.5l-18.1 2.2zM179.3 285.9l1.8-0.2l2.7-4.5l-1.7 0.2zM178 276l17.3-2l0.3-0.4l-17.4 2zM184.7 277l1.7-0.2l2.5-4.2l-1.7 0.2zM183.2 267.8l16.6-1.8l0.2-0.4l-16.6 1.9zM189.7 268.8l1.6-0.2l2.3-3.9l-1.6 0.2zM188 260.3l16-1.7l0.2-0.4l-16 1.7zM194.3 261.2l1.5-0.2l2.1-3.6l-1.5 0.2zM192.4 253.3l15.5-1.6l0.1-0.3l-15.4 1.5zM198.5 254.1l1.5-0.2l2-3.3l-1.5 0.1zM196.6 246.7l14.8-1.4l0.2-0.3l-14.8 1.4zM202.5 247.5l1.4-0.1l1.9-3.2l-1.4 0.2zM200.5 240.6l14.3-1.3l0.2-0.3l-14.3 1.4zM206.2 241.4l1.4-0.2l1.7-2.9l-1.4 0.1zM204.1 234.9l13.9-1.2l0.1-0.3l-13.8 1.3zM209.6 235.6l1.4-0.1l1.6-2.7l-1.3 0.1zM207.5 229.6l13.4-1.2l0.1-0.3l-13.3 1.3zM212.9 230.2l1.3-0.1l1.5-2.6l-1.3 0.2zM210.7 224.6l13-1.2l0.1-0.2l-12.9 1.2zM215.9 225.2l1.3-0.1l1.4-2.5l-1.2 0.2zM213.7 219.9l12.6-1.1l0.1-0.2l-12.5 1zM218.8 220.4l1.2-0.1l1.4-2.3l-1.2 0.1zM216.6 215.4l12.1-1l0.2-0.2l-12.2 1zM221.5 215.9l1.2-0.1l1.3-2.1l-1.2 0.1zM219.2 211.2l11.9-1l0.1-0.2l-11.8 1zM224 211.7l1.2-0.1l1.2-2l-1.1 0.1zM221.8 207.2l11.5-0.9l0.1-0.2l-11.5 0.9zM226.5 207.7l1.1-0.1l1.1-1.9l-1.1 0.1zM224.2 203.4l11.2-0.8l0.1-0.2l-11.2 0.9zM228.7 203.9l1.1-0.1l1.1-1.8l-1.1 0.1zM226.5 199.9l10.8-0.8l0.1-0.2l-10.8 0.8zM230.9 200.3l1.1-0.1l1-1.7l-1 0.1zM228.6 196.5l10.6-0.8l0.1-0.2l-10.6 0.8zM233 196.9l1-0.1l1-1.7l-1 0.1zM230.7 193.2l10.3-0.7l0.1-0.2l-10.3 0.8zM234.9 193.6l1-0.1l1-1.5l-1 0.1zM232.6 190.2l10.1-0.7l0.1-0.2l-10.1 0.7zM236.8 190.5l1 0l0.9-1.5l-1 0zM234.5 187.2l9.8-0.6l0.1-0.2l-9.8 0.7zM238.6 187.6l0.9-0.1l0.9-1.4l-1 0zM236.3 184.4l9.6-0.6l0.1-0.1l-9.6 0.6zM240.3 184.8l0.9-0.1l0.8-1.4l-0.9 0.1zM238 181.7l9.4-0.6l0-0.1l-9.3 0.6zM241.9 182.1l0.9-0.1l0.8-1.3l-0.9 0.1zM239.6 179.2l9.2-0.6l0.1-0.1l-9.2 0.6zM243.4 179.5l0.9-0.1l0.8-1.2l-0.9 0zM107.5 489.1l35.8-7.9l0.7-1.6l-35.8 7.9zM120.4 493.2l3.5-0.8l7.3-16.6l-3.3 0.7zM135.9 430.3l30.5-5.9l0.5-1.2l-30.4 5.9zM147.2 433.4l3-0.6l5.5-12.4l-2.9 0.5zM157.4 385.8l26.6-4.5l0.3-1l-26.4 4.6zM167.5 388.2l2.6-0.5l4.2-9.6l-2.5 0.4zM174.3 350.9l23.5-3.6l0.3-0.7l-23.5 3.6zM183.4 352.8l2.3-0.3l3.3-7.7l-2.2 0.3zM187.8 322.9l21.1-3l0.2-0.6l-21 3zM196.1 324.4l2.1-0.3l2.7-6.2l-2 0.3zM199 299.8l19.1-2.4l0.2-0.5l-19.1 2.4zM206.6 301.1l1.8-0.2l2.3-5.2l-1.8 0.2zM208.3 280.6l17.5-2.1l0.1-0.4l-17.4 2zM215.3 281.6l1.7-0.2l2-4.4l-1.7 0.2zM216.2 264.2l16.1-1.8l0.1-0.3l-16 1.7zM222.7 265.1l1.6-0.2l1.7-3.7l-1.6 0.2zM223 250.1l14.9-1.5l0.1-0.3l-14.8 1.5zM229.1 250.9l1.5-0.1l1.4-3.3l-1.4 0.2zM228.9 237.9l13.9-1.3l0.1-0.3l-13.8 1.3zM234.6 238.6l1.4-0.1l1.2-2.9l-1.3 0.2zM234.1 227.2l13-1.2l0.1-0.2l-13 1.1zM239.5 227.8l1.3-0.1l1-2.5l-1.2 0.1zM238.7 217.7l12.2-1l0.1-0.2l-12.2 1zM243.8 218.3l1.2-0.2l0.9-2.2l-1.1 0.1zM242.8 209.3l11.5-1l0.1-0.1l-11.6 0.9zM247.6 209.8l1.1-0.1l0.9-2l-1.1 0.1zM246.4 201.7l10.9-0.8l0.1-0.2l-10.9 0.9zM251 202.2l1-0.1l0.8-1.8l-1 0.1zM249.7 194.9l10.4-0.7l0-0.2l-10.3 0.8zM254.1 195.3l1-0.1l0.7-1.6l-1 0.1zM252.7 188.8l9.8-0.7l0.1-0.2l-9.8 0.7zM256.9 189.1l0.9-0.1l0.6-1.4l-0.9 0zM255.4 183.1l9.4-0.6l0-0.1l-9.3 0.6zM259.4 183.5l0.9-0.1l0.6-1.3l-0.9 0zM257.9 178l9-0.6l0-0.1l-9 0.6zM261.7 178.3l0.9 0l0.5-1.3l-0.9 0.1zM166.5 507.9l36.3-8.7l0.4-1.7l-36.1 8.6zM180.6 512.3l3.6-0.8l5.2-18.1l-3.4 0.7zM177.9 473.6l33.3-7.4l0.3-1.5l-33.1 7.3zM190.9 477.4l3.3-0.8l4.5-15.4l-3.2 0.6zM187.6 444.2l30.7-6.4l0.4-1.2l-30.7 6.3zM199.8 447.4l3-0.6l3.8-13.3l-2.9 0.5zM196 418.7l28.6-5.5l0.3-1.1l-28.6 5.5zM207.4 421.6l2.8-0.6l3.4-11.6l-2.7 0.5zM203.3 396.4l26.8-4.8l0.2-1l-26.7 4.8zM214.1 398.9l2.6-0.4l3-10.3l-2.6 0.5zM209.8 376.8l25.1-4.3l0.2-0.9l-25 4.3zM220 379l2.4-0.4l2.6-9.1l-2.3 0.4zM215.5 359.4l23.7-3.9l0.2-0.7l-23.6 3.8zM225.2 361.3l2.3-0.3l2.3-8.1l-2.2 0.3zM220.7 343.8l22.3-3.5l0.2-0.7l-22.3 3.5zM229.9 345.5l2.1-0.3l2.1-7.3l-2.1 0.4zM225.3 329.7l21.2-3.1l0.2-0.6l-21.2 3.1zM234.1 331.3l2-0.3l1.9-6.5l-2 0.3zM229.5 317l20.1-2.8l0.2-0.6l-20.1 2.9zM237.9 318.5l1.9-0.3l1.7-5.9l-1.9 0.2zM233.3 305.5l19.2-2.6l0.1-0.5l-19.1 2.6zM241.3 306.8l1.9-0.2l1.5-5.5l-1.8 0.3zM236.8 295l18.3-2.4l0.1-0.5l-18.3 2.4zM244.4 296.2l1.8-0.2l1.5-5l-1.8 0.2zM240 285.3l17.5-2.1l0.1-0.5l-17.5 2.2zM247.3 286.4l1.7-0.2l1.3-4.5l-1.6 0.2zM242.9 276.4l16.8-1.9l0.1-0.4l-16.8 1.9zM250 277.5l1.6-0.2l1.2-4.2l-1.6 0.2zM245.6 268.3l16.1-1.9l0.1-0.4l-16.1 1.9zM252.4 269.2l1.6-0.2l1.1-3.9l-1.5 0.2zM248.1 260.7l15.5-1.7l0.1-0.4l-15.5 1.7zM254.7 261.5l1.5-0.1l1-3.6l-1.5 0.1zM250.4 253.6l15-1.6l0.1-0.3l-15 1.6zM256.8 254.4l1.4-0.1l1-3.4l-1.4 0.2zM252.6 247.1l14.4-1.5l0.1-0.3l-14.4 1.5zM258.7 247.8l1.4-0.1l0.9-3.1l-1.4 0.1zM254.6 241l13.9-1.4l0.1-0.3l-13.9 1.4zM260.5 241.7l1.4-0.2l0.8-2.9l-1.3 0.1zM256.5 235.2l13.5-1.3l0-0.2l-13.4 1.3zM262.2 235.9l1.3-0.1l0.8-2.8l-1.2 0.2zM258.3 229.9l13-1.2l0.1-0.3l-13.1 1.2zM263.8 230.5l1.3-0.1l0.7-2.6l-1.2 0.1zM259.9 224.8l12.7-1.1l0-0.2l-12.6 1.1zM265.3 225.4l1.3-0.1l0.7-2.4l-1.2 0.1zM261.5 220.1l12.2-1.1l0.1-0.2l-12.2 1.1zM266.7 220.7l1.2-0.2l0.7-2.2l-1.2 0.1zM263 215.6l11.9-1l0-0.2l-11.9 1zM268.1 216.2l1.1-0.1l0.6-2.2l-1.1 0.1zM264.4 211.4l11.5-0.9l0.1-0.2l-11.6 0.9zM269.3 211.9l1.1-0.1l0.6-2l-1.1 0.1zM265.7 207.4l11.2-0.9l0.1-0.2l-11.3 0.9zM270.5 207.9l1.1-0.1l0.6-1.9l-1.1 0.1zM266.9 203.6l11-0.8l0-0.2l-10.9 0.9zM271.6 204.1l1.1-0.1l0.5-1.8l-1 0.1zM268.1 200.1l10.7-0.9l0-0.1l-10.6 0.8zM272.7 200.5l1-0.1l0.5-1.7l-1 0zM269.2 196.6l10.4-0.7l0-0.2l-10.3 0.8zM273.7 197l1 0l0.5-1.7l-1 0.1zM270.3 193.4l10.1-0.7l0.1-0.2l-10.2 0.8zM274.7 193.8l1-0.1l0.4-1.6l-1 0.1zM271.3 190.3l9.9-0.7l0-0.1l-9.8 0.7zM275.6 190.7l0.9-0.1l0.5-1.5l-1 0.1zM272.3 187.4l9.6-0.7l0.1-0.1l-9.7 0.6zM276.5 187.7l0.9 0l0.4-1.5l-0.9 0.1zM273.2 184.6l9.4-0.7l0.1-0.1l-9.4 0.6zM277.3 184.9l0.9-0.1l0.4-1.3l-0.9 0zM274.1 181.9l9.2-0.6l0-0.2l-9.2 0.7zM278.1 182.2l0.9-0.1l0.4-1.3l-0.9 0.1zM274.9 179.3l9-0.6l0.1-0.1l-9 0.6zM278.9 179.6l0.8 0l0.4-1.3l-0.9 0.1zM231.1 528.4l36.5-9.5l0.2-1.8l-36.4 9.3zM246.5 533.3l3.6-1l2.6-19.8l-3.4 0.9zM243.3 459.1l31-6.9l0.1-1.3l-30.9 6.8zM256.5 462.6l3-0.6l2-14.5l-3 0.7zM252.3 407.8l26.9-5.2l0.1-1l-26.8 5.1zM263.9 410.5l2.6-0.5l1.5-11l-2.6 0.5zM259.3 368.3l23.8-4.1l0-0.8l-23.6 4.1zM269.6 370.4l2.3-0.4l1.1-8.6l-2.2 0.4zM264.8 336.9l21.3-3.2l0.1-0.7l-21.2 3.3zM274.1 338.6l2-0.3l1-6.9l-2 0.3zM269.3 311.4l19.3-2.7l0.1-0.5l-19.3 2.7zM277.7 312.8l1.9-0.2l0.8-5.7l-1.9 0.2zM273.1 290.3l17.6-2.3l0-0.4l-17.6 2.2zM280.8 291.5l1.7-0.3l0.6-4.7l-1.7 0.2zM276.2 272.5l16.2-1.9l0-0.4l-16.1 1.9zM283.3 273.5l1.6-0.2l0.5-4.1l-1.5 0.2zM278.9 257.3l15-1.7l0-0.3l-14.9 1.6zM285.5 258.1l1.4-0.1l0.5-3.5l-1.4 0.1zM281.2 244.1l14-1.4l0-0.3l-13.9 1.4zM287.4 244.9l1.3-0.2l0.4-3l-1.3 0.1zM283.2 232.7l13.1-1.3l0-0.3l-13 1.3zM289 233.3l1.3-0.1l0.3-2.7l-1.2 0.1zM285 222.6l12.3-1.2l0-0.2l-12.2 1.1zM290.4 223.1l1.2-0.1l0.3-2.3l-1.1 0.1zM286.6 213.6l11.6-1l0-0.2l-11.6 1zM291.7 214.1l1.1-0.1l0.3-2.1l-1.1 0.1zM288 205.6l11-0.9l0-0.2l-11 0.9zM292.9 206.1l1-0.1l0.3-1.9l-1.1 0.1zM289.3 198.4l10.4-0.8l0-0.1l-10.4 0.8zM293.9 198.8l1 0l0.2-1.7l-1 0zM290.4 191.9l9.9-0.7l0-0.1l-9.8 0.7zM294.8 192.3l1-0.1l0.2-1.5l-1 0.1zM291.5 186l9.4-0.6l0-0.2l-9.4 0.7zM295.7 186.4l0.9-0.1l0.2-1.4l-0.9 0.1zM292.4 180.7l9-0.6l0-0.2l-9 0.6zM296.4 181l0.9-0.1l0.2-1.3l-0.9 0.1zM302.8 509.9l33.7-8.7l-0.1-1.8l-33.6 8.7zM318.3 514.4l3.3-0.9l-0.4-18.3l-3.1 0.8zM303.6 475.2l31.1-7.4l0-1.4l-31.1 7.3zM317.9 479.1l3-0.8l-0.3-15.5l-2.9 0.6zM304.2 445.6l29-6.4l-0.1-1.2l-28.8 6.3zM317.5 448.9l2.8-0.6l-0.2-13.5l-2.7 0.6zM304.8 420l27.1-5.6l-0.1-1.1l-26.9 5.5zM317.2 422.8l2.7-0.5l-0.3-11.7l-2.5 0.5zM305.3 397.6l25.4-4.9l-0.1-1l-25.2 4.9zM317 400.1l2.4-0.5l-0.2-10.3l-2.4 0.4zM305.8 377.8l23.9-4.3l-0.1-0.9l-23.8 4.3zM316.7 380l2.3-0.4l-0.1-9.1l-2.3 0.4zM306.2 360.3l22.5-3.9l0-0.8l-22.5 3.9zM316.5 362.2l2.2-0.3l-0.2-8.2l-2.1 0.4zM306.6 344.6l21.3-3.5l0-0.7l-21.3 3.4zM316.3 346.3l2.1-0.3l-0.1-7.3l-2.1 0.3zM306.9 330.4l20.3-3.1l-0.1-0.6l-20.2 3.1zM316.2 332.1l1.9-0.4l-0.1-6.6l-1.9 0.3zM307.2 317.7l19.3-2.9l0-0.5l-19.3 2.8zM316 319.1l1.9-0.2l-0.1-6l-1.9 0.2zM307.4 306.1l18.5-2.6l0-0.5l-18.4 2.6zM315.9 307.4l1.8-0.2l-0.2-5.5l-1.7 0.3zM307.7 295.5l17.6-2.4l0-0.4l-17.6 2.3zM315.7 296.7l1.7-0.2l0-5l-1.7 0.2zM307.9 285.8l16.9-2.2l0-0.4l-16.9 2.2zM315.6 286.9l1.7-0.2l-0.1-4.6l-1.6 0.2zM308.1 276.9l16.3-2l-0.1-0.4l-16.2 2zM315.5 277.9l1.6-0.2l-0.1-4.2l-1.5 0.2zM308.3 268.7l15.6-1.9l0-0.4l-15.6 1.9zM315.4 269.6l1.5-0.2l0-3.9l-1.5 0.2zM308.5 261.1l15-1.8l0-0.3l-15 1.7zM315.3 261.9l1.5-0.1l-0.1-3.7l-1.4 0.2zM308.6 254l14.5-1.6l0-0.3l-14.5 1.6zM315.2 254.8l1.4-0.1l0-3.4l-1.4 0.1zM308.8 247.4l14-1.5l0-0.3l-14 1.5zM315.2 248.2l1.3-0.2l0-3.1l-1.4 0.1zM308.9 241.3l13.6-1.4l0-0.3l-13.6 1.4zM315.1 242l1.3-0.1l-0.1-3l-1.2 0.1zM309.1 235.5l13.1-1.3l-0.1-0.2l-13 1.3zM315 236.2l1.3-0.1l-0.1-2.8l-1.2 0.1zM309.2 230.2l12.7-1.3l0-0.2l-12.7 1.2zM315 230.8l1.2-0.1l-0.1-2.6l-1.2 0.1zM309.3 225.1l12.3-1.1l0-0.3l-12.3 1.2zM314.9 225.7l1.2-0.1l-0.1-2.5l-1.1 0.2zM309.4 220.3l12-1l-0.1-0.3l-11.9 1.1zM314.8 220.9l1.2-0.1l0-2.3l-1.2 0.1zM309.5 215.9l11.6-1.1l0-0.2l-11.6 1.1zM314.8 216.4l1.1-0.1l0-2.2l-1.1 0.1zM309.6 211.6l11.3-0.9l0-0.2l-11.3 0.9zM314.7 212.1l1.1-0.1l0-2l-1.1 0.1zM309.7 207.6l11-0.9l0-0.2l-11 0.9zM314.7 208.1l1.1-0.1l-0.1-1.9l-1 0.1zM309.8 203.8l10.7-0.8l0-0.2l-10.7 0.9zM314.6 204.3l1.1-0.1l-0.1-1.8l-1 0zM309.9 200.2l10.4-0.8l0-0.1l-10.4 0.8zM314.6 200.7l1-0.1l0-1.8l-1 0.1zM310 196.8l10.1-0.8l0-0.1l-10.1 0.8zM314.6 197.2l0.9-0.1l0-1.6l-1 0.1zM310 193.6l9.9-0.8l0-0.1l-9.9 0.7zM314.5 194l1-0.1l0-1.6l-1 0.1zM310.1 190.5l9.7-0.7l0-0.2l-9.7 0.7zM314.5 190.8l0.9 0l0-1.5l-0.9 0zM310.2 187.5l9.4-0.6l0-0.2l-9.4 0.7zM314.5 187.9l0.9-0.1l-0.1-1.4l-0.9 0zM310.2 184.7l9.3-0.6l0-0.2l-9.3 0.7zM314.4 185l0.9 0l0-1.4l-0.9 0.1zM310.3 182l9-0.6l0-0.1l-9 0.6zM314.4 182.3l0.9 0l-0.1-1.3l-0.8 0zM369 492.8l31.2-8.1l-0.3-1.6l-31.1 8zM384.6 496.9l3-0.8l-2.9-16.9l-3 0.7zM361.2 433l27.1-6l-0.3-1.1l-27 5.9zM374.5 436.1l2.6-0.6l-2.1-12.6l-2.6 0.6zM355.3 387.9l23.9-4.6l-0.2-0.9l-23.8 4.6zM366.9 390.3l2.4-0.5l-1.7-9.7l-2.3 0.4zM350.7 352.6l21.4-3.7l-0.2-0.7l-21.3 3.7zM361 354.5l2.1-0.4l-1.3-7.7l-2.1 0.3zM347 324.3l19.3-3l-0.1-0.6l-19.3 2.9zM356.3 325.8l1.8-0.3l-1-6.3l-1.9 0.3zM343.9 301l17.7-2.5l-0.1-0.5l-17.6 2.5zM352.4 302.2l1.7-0.2l-0.9-5.2l-1.7 0.2zM341.4 281.5l16.3-2.1l-0.1-0.4l-16.3 2.1zM349.1 282.6l1.6-0.2l-0.8-4.4l-1.5 0.2zM339.2 265l15.1-1.8l-0.1-0.3l-15 1.7zM346.4 265.9l1.4-0.2l-0.6-3.7l-1.5 0.1zM337.4 250.8l14-1.5l-0.1-0.3l-13.9 1.5zM344 251.6l1.4-0.1l-0.6-3.3l-1.3 0.1zM335.8 238.5l13.1-1.3l-0.1-0.3l-13 1.3zM342 239.2l1.2-0.1l-0.5-2.9l-1.2 0.1zM334.4 227.7l12.3-1.2l-0.1-0.2l-12.3 1.2zM340.2 228.3l1.1-0.1l-0.4-2.5l-1.2 0.1zM333.1 218.2l11.7-1.1l-0.1-0.2l-11.6 1.1zM338.6 218.7l1.1-0.1l-0.4-2.2l-1.1 0.1zM332 209.7l11-0.9l0-0.2l-11 0.9zM337.2 210.2l1-0.1l-0.3-2l-1.1 0.1zM331 202.1l10.5-0.8l-0.1-0.2l-10.4 0.8zM335.9 202.5l1 0l-0.3-1.8l-1 0.1zM330.1 195.3l10-0.8l-0.1-0.2l-9.9 0.8zM334.8 195.7l0.9-0.1l-0.3-1.6l-0.9 0zM329.3 189.1l9.5-0.7l0-0.2l-9.5 0.7zM333.7 189.4l0.9 0l-0.2-1.5l-0.9 0.1zM328.6 183.4l9-0.6l0-0.1l-9 0.6zM332.8 183.8l0.9-0.1l-0.3-1.3l-0.8 0zM440.2 511.9l31.2-8.8l-0.6-1.8l-31.1 8.8zM457.2 516.4l3.1-0.9l-6-18.4l-3 0.8zM430.3 477l29-7.5l-0.5-1.5l-28.9 7.4zM445.9 480.8l2.8-0.7l-5.1-15.7l-2.8 0.6zM421.8 447.1l27.1-6.5l-0.5-1.2l-26.9 6.4zM436.2 450.4l2.6-0.6l-4.4-13.6l-2.6 0.6zM414.5 421.3l25.4-5.7l-0.4-1.1l-25.3 5.6zM427.8 424.1l2.5-0.5l-3.9-11.8l-2.4 0.5zM408.1 398.7l23.9-5l-0.4-0.9l-23.8 4.9zM420.5 401.2l2.3-0.5l-3.4-10.3l-2.2 0.4zM402.4 378.8l22.6-4.4l-0.3-0.8l-22.5 4.3zM414.1 381l2.2-0.4l-3-9.2l-2.2 0.4zM397.4 361.1l21.4-3.9l-0.3-0.7l-21.3 3.8zM408.4 363.1l2-0.4l-2.6-8.1l-2.1 0.3zM392.9 345.4l20.4-3.5l-0.3-0.7l-20.3 3.4zM403.3 347.1l1.9-0.3l-2.4-7.4l-1.9 0.4zM388.9 331.2l19.4-3.2l-0.3-0.6l-19.3 3.1zM398.7 332.8l1.9-0.3l-2.2-6.7l-1.8 0.3zM385.3 318.3l18.4-2.8l-0.2-0.6l-18.4 2.9zM394.5 319.8l1.8-0.3l-1.9-6l-1.8 0.3zM381.9 306.7l17.7-2.6l-0.2-0.5l-17.6 2.6zM390.8 308l1.7-0.2l-1.8-5.5l-1.7 0.2zM378.9 296.1l17-2.4l-0.2-0.5l-16.9 2.4zM387.4 297.3l1.6-0.3l-1.6-5l-1.6 0.2zM376.2 286.3l16.2-2.2l-0.1-0.4l-16.3 2.2zM384.2 287.4l1.6-0.2l-1.5-4.6l-1.5 0.2zM373.6 277.4l15.7-2.1l-0.2-0.4l-15.6 2zM381.3 278.4l1.6-0.2l-1.4-4.3l-1.5 0.2zM371.3 269.1l15-1.9l-0.1-0.3l-15 1.8zM378.7 270l1.4-0.1l-1.2-4l-1.5 0.2zM369.1 261.5l14.5-1.8l-0.1-0.3l-14.5 1.7zM376.2 262.3l1.4-0.1l-1.2-3.7l-1.3 0.2zM367.1 254.4l14-1.6l-0.1-0.4l-14 1.6zM373.9 255.2l1.4-0.2l-1.1-3.4l-1.3 0.2zM365.2 247.8l13.6-1.5l-0.1-0.3l-13.6 1.4zM371.8 248.5l1.3-0.1l-1-3.2l-1.3 0.2zM363.5 241.6l13.1-1.4l-0.1-0.3l-13.1 1.4zM369.8 242.3l1.3-0.1l-1-3l-1.2 0.2zM361.8 235.8l12.7-1.3l-0.1-0.2l-12.7 1.3zM368 236.5l1.2-0.1l-0.9-2.8l-1.2 0.1zM360.3 230.4l12.3-1.2l-0.1-0.2l-12.3 1.2zM366.3 231.1l1.1-0.2l-0.8-2.6l-1.2 0.2zM358.8 225.4l12-1.2l-0.1-0.2l-11.9 1.1zM364.6 226l1.2-0.2l-0.8-2.4l-1.1 0.1zM357.5 220.6l11.6-1.1l-0.1-0.2l-11.6 1.1zM363.1 221.1l1.1-0.1l-0.7-2.3l-1.1 0.1zM356.2 216.1l11.3-1l-0.1-0.2l-11.2 1zM361.7 216.6l1-0.1l-0.7-2.1l-1 0.1zM355 211.9l11-1l-0.1-0.2l-11 1zM360.3 212.3l1.1 0l-0.7-2.1l-1.1 0.1zM353.9 207.8l10.7-0.9l-0.1-0.2l-10.7 1zM359 208.3l1-0.1l-0.6-1.9l-1 0.1zM352.8 204l10.4-0.8l0-0.2l-10.5 0.9zM357.8 204.5l1-0.1l-0.6-1.8l-1 0zM351.8 200.4l10.1-0.8l0-0.2l-10.2 0.9zM356.6 200.8l1 0l-0.6-1.8l-0.9 0.1zM350.8 197l9.9-0.8l0-0.1l-10 0.7zM355.5 197.4l1-0.1l-0.6-1.6l-0.9 0zM349.9 193.7l9.6-0.7l0-0.2l-9.7 0.8zM354.5 194.1l0.9 0l-0.5-1.6l-0.9 0zM349 190.6l9.4-0.7l0-0.1l-9.5 0.7zM353.5 191l0.9-0.1l-0.5-1.5l-0.9 0.1zM348.1 187.7l9.3-0.7l-0.1-0.1l-9.2 0.6zM352.5 188l0.9 0l-0.4-1.5l-0.9 0.1zM347.3 184.9l9.1-0.7l-0.1-0.1l-9 0.6zM351.6 185.2l0.9-0.1l-0.4-1.3l-0.9 0zM518.1 532.7l31.1-9.6l-1-1.9l-30.9 9.6zM536.7 537.7l3.1-0.9l-9.7-20.2l-2.9 0.8zM487.3 462.3l27-7l-0.7-1.4l-26.9 6.9zM502.8 465.8l2.6-0.6l-7-14.7l-2.5 0.7zM464.5 410.2l23.9-5.3l-0.6-1l-23.8 5.2zM477.8 412.9l2.3-0.5l-5.3-11.1l-2.3 0.5zM447 370.2l21.4-4.2l-0.5-0.8l-21.3 4.1zM458.6 372.3l2.1-0.4l-4.2-8.7l-2 0.4zM433.1 338.5l19.4-3.4l-0.4-0.6l-19.3 3.3zM443.4 340.2l1.9-0.4l-3.4-7l-1.8 0.3zM421.8 312.7l17.7-2.8l-0.3-0.5l-17.6 2.7zM431.1 314.1l1.7-0.3l-2.7-5.7l-1.7 0.2zM412.5 291.3l16.3-2.2l-0.3-0.5l-16.2 2.3zM420.9 292.5l1.6-0.2l-2.3-4.8l-1.6 0.2zM404.6 273.4l15.1-2l-0.2-0.4l-15.1 2zM412.4 274.4l1.4-0.2l-1.9-4.1l-1.5 0.2zM397.9 258l14-1.6l-0.1-0.4l-14 1.7zM405 258.9l1.4-0.2l-1.7-3.5l-1.3 0.2zM392.1 244.8l13.1-1.5l-0.1-0.3l-13.1 1.5zM398.7 245.5l1.3-0.1l-1.5-3.1l-1.2 0.2zM387.1 233.2l12.3-1.2l-0.1-0.3l-12.4 1.3zM393.2 233.9l1.2-0.1l-1.3-2.7l-1.1 0.1zM382.6 223.1l11.6-1.2l-0.1-0.2l-11.6 1.1zM388.4 223.6l1.1-0.1l-1.1-2.3l-1.1 0.1zM378.7 214.1l11-1l-0.1-0.2l-11 1zM384.1 214.6l1.1-0.1l-1-2.1l-1.1 0.1zM375.1 206l10.5-0.9l-0.1-0.2l-10.4 0.9zM380.3 206.5l1-0.1l-0.9-1.9l-1 0.1zM372 198.8l9.9-0.8l-0.1-0.2l-9.9 0.8zM376.9 199.2l0.9-0.1l-0.8-1.7l-1 0.1zM369.1 192.3l9.5-0.8l-0.1-0.1l-9.4 0.7zM373.8 192.6l0.9 0l-0.8-1.6l-0.9 0.1zM366.5 186.3l9.1-0.6l-0.1-0.2l-9 0.7zM370.9 186.7l0.9-0.1l-0.7-1.4l-0.8 0.1zM578.9 513.9l28.7-8.9l-1.2-1.7l-28.5 8.8zM597.4 518.5l2.8-0.9l-11.8-18.6l-2.7 0.8zM558.1 478.7l26.8-7.6l-1-1.5l-26.7 7.5zM574.9 482.6l2.7-0.8l-10.1-15.8l-2.5 0.7zM540.3 448.6l25.2-6.5l-0.9-1.3l-25.1 6.4zM555.8 451.9l2.4-0.6l-8.6-13.7l-2.4 0.6zM524.9 422.5l23.8-5.6l-0.8-1.1l-23.6 5.6zM539.2 425.4l2.3-0.5l-7.5-11.9l-2.3 0.5zM511.5 399.8l22.5-5l-0.7-0.9l-22.4 4.9zM524.8 402.4l2.1-0.5l-6.6-10.5l-2.1 0.5zM499.7 379.8l21.3-4.4l-0.6-0.9l-21.3 4.4zM512 382l2.1-0.4l-5.8-9.2l-2.1 0.4zM489.2 362l20.2-3.9l-0.5-0.8l-20.2 3.9zM500.8 364l1.9-0.4l-5.2-8.2l-1.9 0.4zM479.8 346.1l19.3-3.5l-0.5-0.7l-19.2 3.5zM490.7 347.9l1.9-0.3l-4.7-7.4l-1.8 0.3zM471.4 331.9l18.4-3.2l-0.4-0.6l-18.4 3.1zM481.7 333.5l1.7-0.3l-4.2-6.7l-1.7 0.3zM463.7 319l17.7-2.9l-0.4-0.6l-17.6 2.9zM473.5 320.5l1.7-0.3l-3.8-6.1l-1.7 0.3zM456.8 307.3l16.9-2.6l-0.3-0.6l-16.9 2.6zM466.1 308.6l1.6-0.2l-3.5-5.6l-1.6 0.3zM450.5 296.6l16.2-2.4l-0.3-0.5l-16.2 2.4zM459.3 297.8l1.6-0.2l-3.2-5.1l-1.5 0.3zM444.7 286.8l15.6-2.2l-0.2-0.4l-15.7 2.2zM453.1 287.9l1.6-0.2l-3-4.6l-1.5 0.2zM439.4 277.8l15.1-2l-0.3-0.4l-15.1 2zM447.5 278.8l1.4-0.1l-2.7-4.3l-1.4 0.2zM434.5 269.5l14.5-1.8l-0.2-0.4l-14.5 1.8zM442.2 270.5l1.4-0.2l-2.5-3.9l-1.4 0.1zM430 261.8l14-1.7l-0.3-0.3l-14 1.7zM437.4 262.7l1.3-0.1l-2.3-3.7l-1.3 0.2zM425.7 254.7l13.6-1.6l-0.2-0.3l-13.6 1.6zM432.9 255.5l1.3-0.1l-2.2-3.4l-1.3 0.1zM421.8 248.1l13.1-1.5l-0.2-0.3l-13.1 1.5zM428.7 248.9l1.3-0.2l-2-3.2l-1.3 0.2zM418.2 241.9l12.7-1.4l-0.2-0.3l-12.7 1.4zM424.8 242.6l1.2-0.1l-1.9-3l-1.2 0.2zM414.7 236.1l12.4-1.3l-0.2-0.2l-12.3 1.3zM421.1 236.8l1.2-0.1l-1.7-2.8l-1.2 0.1zM411.5 230.7l12-1.2l-0.1-0.3l-12 1.3zM417.7 231.3l1.2-0.1l-1.7-2.6l-1.1 0.1zM408.5 225.6l11.7-1.1l-0.2-0.3l-11.6 1.2zM414.5 226.2l1.1-0.1l-1.5-2.4l-1.1 0.1zM405.7 220.8l11.3-1.1l-0.1-0.2l-11.3 1.1zM411.5 221.4l1.1-0.1l-1.5-2.3l-1 0.1zM403 216.3l11.1-1l-0.2-0.2l-11 1zM408.7 216.9l1-0.1l-1.4-2.2l-1 0.1zM400.5 212.1l10.7-1l-0.1-0.2l-10.7 1zM406 212.6l1-0.1l-1.3-2.1l-1 0.1zM398.1 208l10.5-0.9l-0.1-0.2l-10.5 1zM403.4 208.5l1-0.1l-1.2-1.9l-1 0.1zM395.9 204.2l10.2-0.8l-0.1-0.2l-10.2 0.9zM401 204.7l1-0.1l-1.1-1.9l-1 0.1zM393.8 200.6l9.9-0.8l-0.1-0.2l-9.9 0.8zM398.8 201l0.9 0l-1.1-1.8l-0.9 0.1zM391.7 197.2l9.7-0.8l-0.1-0.2l-9.7 0.8zM396.6 197.6l0.9-0.1l-1-1.7l-0.9 0.1zM389.8 193.9l9.5-0.7l-0.1-0.2l-9.5 0.8zM394.5 194.3l1-0.1l-1-1.6l-0.9 0.1zM388 190.8l9.2-0.7l-0.1-0.2l-9.2 0.8zM392.6 191.2l0.9-0.1l-1-1.5l-0.9 0.1zM386.2 187.8l9.1-0.6l-0.1-0.2l-9.1 0.7zM390.7 188.2l0.9-0.1l-0.9-1.4l-0.9 0zM635.1 496.5l26.4-8.2l-1.3-1.6l-26.4 8.1zM653.4 500.7l2.5-0.8l-13.5-17.2l-2.5 0.8zM589.8 435.8l23.6-6.1l-1-1.2l-23.5 6zM605.2 438.9l2.3-0.6l-10.1-12.8l-2.2 0.6zM555.8 390l21.1-4.7l-0.7-0.9l-21.1 4.7zM569 392.4l2-0.4l-7.7-9.9l-2 0.5zM529.2 354.3l19.2-3.7l-0.6-0.8l-19.2 3.7zM540.7 356.2l1.9-0.4l-6.2-7.8l-1.8 0.4zM507.8 325.6l17.6-3l-0.5-0.6l-17.6 3zM518.1 327.2l1.7-0.3l-5-6.4l-1.7 0.3zM490.3 302.1l16.2-2.5l-0.4-0.5l-16.2 2.5zM499.6 303.4l1.5-0.3l-4.1-5.2l-1.6 0.2zM475.7 282.5l15-2.2l-0.3-0.4l-15 2.1zM484.1 283.5l1.4-0.2l-3.5-4.4l-1.4 0.2zM463.3 265.8l14-1.8l-0.3-0.4l-14 1.8zM471 266.7l1.4-0.1l-3-3.8l-1.4 0.1zM452.6 251.5l13.2-1.5l-0.3-0.3l-13.1 1.5zM459.8 252.3l1.2-0.1l-2.6-3.3l-1.2 0.1zM443.4 239.1l12.3-1.3l-0.2-0.3l-12.3 1.3zM450 239.8l1.2-0.1l-2.2-2.9l-1.2 0.1zM435.3 228.3l11.6-1.2l-0.2-0.3l-11.6 1.2zM441.5 228.9l1.1-0.1l-2-2.6l-1.1 0.1zM428.2 218.7l11-1.1l-0.2-0.2l-11 1.1zM434 219.2l1-0.1l-1.7-2.2l-1.1 0.1zM421.8 210.1l10.5-0.9l-0.2-0.2l-10.4 0.9zM427.3 210.6l1-0.1l-1.6-2l-1 0.1zM416.1 202.5l10-0.9l-0.2-0.1l-9.9 0.8zM421.3 202.9l0.9-0.1l-1.4-1.8l-0.9 0.1zM411 195.6l9.5-0.8l-0.2-0.1l-9.4 0.8zM415.9 196l0.9-0.1l-1.3-1.6l-0.9 0.1zM406.4 189.4l9-0.7l-0.1-0.2l-9 0.7zM411 189.7l0.9 0l-1.2-1.5l-0.9 0.1zM718.9 515.9l26-8.9l-1.8-1.8l-25.9 8.9zM738.9 520.6l2.5-0.9l-17.6-18.8l-2.5 0.8zM687 480.4l24.5-7.6l-1.4-1.5l-24.5 7.5zM705.1 484.3l2.4-0.7l-15-16l-2.4 0.7zM659.7 450.1l23.3-6.6l-1.3-1.3l-23.2 6.5zM676.3 453.4l2.2-0.6l-12.9-13.8l-2.2 0.6zM636.2 423.8l22.1-5.7l-1.2-1.1l-22 5.7zM651.4 426.8l2.1-0.6l-11.2-12l-2.1 0.6zM615.6 400.9l21-5l-1-0.9l-20.9 4.9zM629.7 403.5l2.1-0.5l-9.9-10.5l-2 0.5zM597.5 380.8l20-4.4l-0.8-0.9l-20 4.4zM610.6 383.1l2-0.5l-8.8-9.3l-1.9 0.4zM581.5 362.9l19.1-3.9l-0.8-0.8l-19.1 3.9zM593.7 364.9l1.9-0.4l-7.8-8.2l-1.8 0.3zM567.1 347l18.3-3.6l-0.7-0.7l-18.2 3.5zM578.6 348.8l1.8-0.4l-7-7.4l-1.7 0.3zM554.2 332.6l17.6-3.2l-0.7-0.6l-17.4 3.2zM565.1 334.2l1.7-0.3l-6.3-6.7l-1.7 0.3zM542.6 319.6l16.8-2.8l-0.6-0.6l-16.7 2.8zM552.9 321.1l1.6-0.3l-5.7-6l-1.6 0.2zM532 307.9l16.2-2.7l-0.5-0.5l-16.1 2.6zM541.7 309.2l1.6-0.2l-5.2-5.6l-1.5 0.3zM522.4 297.1l15.5-2.4l-0.4-0.4l-15.5 2.3zM531.6 298.4l1.5-0.3l-4.7-5l-1.5 0.2zM513.6 287.3l15-2.2l-0.5-0.4l-14.9 2.2zM522.4 288.4l1.4-0.2l-4.4-4.6l-1.4 0.2zM505.5 278.3l14.4-2.1l-0.4-0.4l-14.4 2.1zM513.9 279.3l1.4-0.2l-4.1-4.3l-1.3 0.2zM498 269.9l13.9-1.8l-0.3-0.4l-14 1.9zM506 270.9l1.4-0.2l-3.8-3.9l-1.3 0.1zM491 262.2l13.6-1.7l-0.4-0.4l-13.5 1.8zM498.8 263.1l1.3-0.1l-3.5-3.7l-1.3 0.2zM484.6 255.1l13.1-1.6l-0.3-0.4l-13.1 1.7zM492 255.9l1.3-0.1l-3.2-3.5l-1.3 0.2zM478.7 248.4l12.6-1.5l-0.3-0.3l-12.6 1.5zM485.8 249.2l1.2-0.1l-3-3.2l-1.2 0.1zM473.1 242.2l12.3-1.4l-0.3-0.3l-12.3 1.4zM479.9 242.9l1.2-0.1l-2.8-3l-1.1 0.2zM467.9 236.4l11.9-1.3l-0.2-0.3l-12 1.4zM474.5 237.1l1.1-0.1l-2.6-2.8l-1.1 0.1zM463 231l11.6-1.2l-0.2-0.3l-11.6 1.2zM469.4 231.6l1.1-0.1l-2.5-2.6l-1.1 0.1zM458.4 225.9l11.3-1.2l-0.2-0.2l-11.3 1.2zM464.6 226.5l1.1-0.1l-2.3-2.5l-1.1 0.1zM454.1 221.1l11-1.1l-0.2-0.2l-11 1.1zM460.1 221.6l1-0.1l-2.2-2.3l-1 0.1zM450 216.6l10.7-1.1l-0.2-0.2l-10.7 1.1zM455.8 217.1l1-0.1l-2-2.2l-1 0.1zM446.2 212.3l10.4-1l-0.2-0.2l-10.4 1zM451.8 212.8l1-0.1l-1.9-2.1l-1 0.1zM442.6 208.3l10.1-1l-0.1-0.2l-10.2 1zM448 208.7l1-0.1l-1.8-1.9l-1 0.1zM439.1 204.4l10-0.8l-0.2-0.2l-9.9 0.9zM444.4 204.9l1-0.1l-1.8-1.9l-0.9 0.1zM435.9 200.8l9.7-0.8l-0.2-0.2l-9.7 0.8zM441 201.2l0.9-0.1l-1.6-1.7l-0.9 0.1zM432.8 197.4l9.4-0.8l-0.1-0.2l-9.5 0.8zM437.8 197.8l0.9-0.1l-1.6-1.7l-0.9 0.1zM429.8 194.1l9.3-0.8l-0.2-0.1l-9.2 0.7zM434.7 194.5l0.9-0.1l-1.5-1.6l-0.9 0.1zM427 191l9.1-0.7l-0.2-0.2l-9 0.7zM431.8 191.3l0.9 0l-1.5-1.6l-0.8 0.1zM810.6 537.2l25.3-9.8l-2.2-1.9l-25.2 9.7zM832.6 542.3l2.4-1l-22.5-20.6l-2.4 0.9zM735.2 465.5l22.8-7.1l-1.5-1.4l-22.8 7zM753.1 469.1l2.2-0.7l-16.2-14.9l-2.2 0.7zM679.6 412.6l20.8-5.3l-1.2-1.1l-20.7 5.3zM694.7 415.4l2-0.6l-12.3-11.2l-1.9 0.5zM637 372.1l18.9-4.2l-0.9-0.8l-18.9 4.1zM650 374.2l1.8-0.4l-9.6-8.8l-1.8 0.4zM603.2 340l17.4-3.4l-0.7-0.7l-17.4 3.4zM614.7 341.7l1.7-0.3l-7.8-7.1l-1.6 0.3zM575.8 313.9l16.1-2.7l-0.6-0.6l-16 2.8zM586 315.3l1.6-0.2l-6.4-5.8l-1.5 0.2zM553.2 292.4l14.9-2.3l-0.5-0.5l-14.9 2.3zM562.4 293.6l1.4-0.3l-5.3-4.8l-1.4 0.2zM534.1 274.3l13.9-2l-0.4-0.4l-13.9 2zM542.5 275.2l1.3-0.1l-4.5-4.2l-1.3 0.2zM517.9 258.8l13-1.7l-0.4-0.3l-13 1.6zM525.5 259.6l1.3-0.1l-3.9-3.6l-1.2 0.2zM503.8 245.4l12.3-1.4l-0.3-0.3l-12.3 1.4zM510.9 246.2l1.2-0.2l-3.4-3l-1.1 0.1zM491.6 233.8l11.6-1.3l-0.3-0.2l-11.6 1.2zM498.2 234.5l1.1-0.2l-2.9-2.7l-1.1 0.2zM480.8 223.6l11-1.2l-0.3-0.2l-10.9 1.1zM487 224.2l1-0.2l-2.6-2.3l-1 0.1zM471.3 214.5l10.4-1l-0.2-0.2l-10.4 1zM477.1 215l1-0.1l-2.3-2.1l-1 0.1zM462.8 206.4l9.9-0.9l-0.2-0.2l-9.9 0.9zM468.2 206.9l1-0.1l-2.1-1.9l-1 0.1zM455.1 199.2l9.5-0.9l-0.2-0.1l-9.4 0.8zM460.3 199.6l0.9-0.1l-1.9-1.7l-0.9 0zM448.2 192.6l9.1-0.7l-0.2-0.2l-9 0.7zM453.1 193l0.9-0.1l-1.7-1.6l-0.9 0.1zM860.1 518l23.3-9l-2.3-1.8l-23.2 8.9zM881.7 522.7l2.2-0.9l-23.6-19l-2.2 0.8zM816.9 482.2l22.3-7.7l-1.9-1.5l-22.3 7.6zM836.4 486.1l2.1-0.7l-20.1-16.2l-2.1 0.7zM780.1 451.6l21.3-6.6l-1.7-1.4l-21.3 6.6zM797.7 455l2.1-0.7l-17.3-13.9l-2 0.6zM748.2 425.1l20.4-5.7l-1.5-1.1l-20.3 5.7zM764.4 428.1l2-0.6l-15-12l-2 0.5zM720.5 402.1l19.5-5l-1.3-1l-19.5 5zM735.4 404.7l1.9-0.5l-13.2-10.6l-1.9 0.5zM696 381.8l18.7-4.4l-1.1-0.9l-18.7 4.4zM709.9 384.1l1.8-0.4l-11.7-9.4l-1.8 0.4zM674.3 363.8l18-3.9l-1-0.8l-17.9 3.9zM687.3 365.8l1.7-0.3l-10.4-8.4l-1.7 0.4zM655 347.8l17.2-3.6l-0.9-0.7l-17.2 3.5zM667.1 349.6l1.6-0.4l-9.3-7.5l-1.6 0.4zM637.6 333.3l16.6-3.2l-0.9-0.6l-16.5 3.2zM649 335l1.6-0.3l-8.4-6.8l-1.6 0.3zM621.9 320.3l15.9-2.9l-0.7-0.6l-15.9 2.9zM632.6 321.8l1.6-0.3l-7.7-6.1l-1.5 0.3zM607.6 308.5l15.4-2.7l-0.7-0.5l-15.3 2.6zM617.8 309.8l1.5-0.2l-7-5.6l-1.4 0.2zM594.6 297.7l14.9-2.4l-0.6-0.5l-14.9 2.4zM604.3 298.9l1.4-0.2l-6.3-5.1l-1.4 0.2zM582.7 287.8l14.4-2.2l-0.6-0.4l-14.3 2.2zM591.9 288.9l1.4-0.2l-5.8-4.6l-1.4 0.2zM571.8 278.7l13.9-2l-0.6-0.4l-13.8 2zM580.5 279.8l1.4-0.2l-5.4-4.3l-1.3 0.2zM561.7 270.4l13.4-1.9l-0.4-0.4l-13.4 1.9zM570.1 271.3l1.3-0.2l-5-3.9l-1.3 0.2zM552.4 262.6l13-1.7l-0.5-0.4l-12.9 1.8zM560.4 263.5l1.2-0.1l-4.5-3.7l-1.3 0.1zM543.7 255.5l12.7-1.7l-0.5-0.3l-12.6 1.6zM551.4 256.3l1.2-0.2l-4.2-3.4l-1.2 0.2zM535.7 248.8l12.2-1.5l-0.4-0.3l-12.2 1.5zM543.1 249.5l1.1-0.1l-3.9-3.2l-1.2 0.2zM528.2 242.5l11.9-1.4l-0.4-0.2l-11.9 1.4zM535.3 243.3l1.1-0.2l-3.7-2.9l-1.1 0.1zM521.2 236.7l11.5-1.3l-0.3-0.3l-11.6 1.4zM528 237.4l1.1-0.1l-3.5-2.8l-1.1 0.1zM514.6 231.3l11.2-1.3l-0.3-0.2l-11.2 1.2zM521.2 231.9l1.1-0.1l-3.3-2.6l-1.1 0.1zM508.4 226.2l11-1.2l-0.3-0.2l-11 1.1zM514.8 226.7l1-0.1l-3-2.4l-1.1 0.1zM502.6 221.3l10.7-1.1l-0.3-0.2l-10.7 1.1zM508.8 221.9l1-0.1l-2.9-2.3l-1 0.1zM497.1 216.8l10.4-1l-0.2-0.2l-10.4 1zM503.1 217.3l1-0.1l-2.7-2.2l-1 0.1zM492 212.5l10.1-1l-0.2-0.2l-10.2 1zM497.8 213l0.9-0.1l-2.5-2l-1 0zM487.1 208.5l9.9-1l-0.2-0.1l-9.9 0.9zM492.7 208.9l1-0.1l-2.5-1.9l-0.9 0.1zM482.5 204.6l9.7-0.9l-0.3-0.1l-9.6 0.8zM487.9 205.1l0.9-0.1l-2.3-1.9l-0.9 0.1zM478.1 201l9.4-0.8l-0.2-0.2l-9.4 0.8zM483.4 201.4l0.9-0.1l-2.2-1.7l-0.9 0.1zM473.9 197.5l9.3-0.8l-0.2-0.1l-9.3 0.8zM479.1 197.9l0.9 0l-2.1-1.7l-0.9 0.1zM470 194.3l9-0.8l-0.2-0.2l-9 0.8zM475 194.6l0.8 0l-1.9-1.6l-0.9 0zM905.8 500.3l21.5-8.4l-2.4-1.6l-21.5 8.3zM926.9 504.6l2.1-0.8l-24.5-17.6l-2.1 0.8zM821.9 438.6l19.9-6.2l-1.7-1.2l-19.9 6.1zM839.4 441.8l1.9-0.6l-18.2-13l-1.8 0.6zM758.9 392.2l18.4-4.8l-1.4-0.9l-18.3 4.7zM773.7 394.6l1.7-0.5l-13.9-9.9l-1.8 0.4zM709.7 356l17-3.8l-1-0.7l-17 3.7zM722.5 357.9l1.7-0.3l-11.1-8l-1.6 0.4zM670.3 327l15.8-3.1l-0.8-0.6l-15.8 3.1zM681.6 328.6l1.6-0.3l-9-6.5l-1.5 0.3zM638.1 303.2l14.7-2.5l-0.7-0.5l-14.7 2.5zM648.2 304.5l1.4-0.2l-7.5-5.3l-1.4 0.2zM611.1 283.4l13.8-2.1l-0.6-0.4l-13.8 2.1zM620.3 284.5l1.3-0.2l-6.3-4.5l-1.3 0.2zM588.3 266.6l13-1.8l-0.6-0.3l-12.9 1.8zM596.6 267.6l1.3-0.2l-5.4-3.8l-1.2 0.1zM568.8 252.2l12.1-1.5l-0.4-0.4l-12.2 1.6zM576.4 253l1.2-0.1l-4.7-3.3l-1.1 0.1zM551.8 239.7l11.5-1.3l-0.4-0.3l-11.5 1.4zM558.9 240.4l1.1-0.1l-4.1-2.9l-1.1 0.2zM536.9 228.8l10.9-1.2l-0.3-0.2l-10.9 1.2zM543.5 229.4l1.1-0.1l-3.6-2.5l-1 0.1zM523.8 219.2l10.4-1.1l-0.3-0.2l-10.4 1zM529.9 219.7l1-0.1l-3.1-2.3l-1 0.1zM512.1 210.6l9.9-1l-0.3-0.2l-9.8 1zM517.9 211.1l1-0.1l-2.9-2.1l-0.9 0.1zM501.7 202.9l9.4-0.9l-0.2-0.1l-9.4 0.8zM507.1 203.3l0.9-0.1l-2.5-1.8l-0.9 0.1zM492.3 196l9-0.8l-0.2-0.2l-9 0.8zM497.4 196.4l0.9-0.1l-2.3-1.7l-0.9 0.1zM1002.7 520.1l20.5-9.1l-2.9-1.8l-20.5 9zM1025.8 524.8l2-0.9l-29.8-19.2l-1.9 0.9zM948 483.9l19.9-7.7l-2.4-1.6l-19.9 7.7zM968.8 487.9l1.9-0.8l-25.3-16.2l-1.9 0.7zM901.4 453.1l19.3-6.7l-2.1-1.3l-19.3 6.6zM920.2 456.5l1.8-0.7l-21.7-13.9l-1.8 0.6zM861.1 426.4l18.6-5.7l-1.8-1.2l-18.6 5.8zM878.3 429.4l1.8-0.5l-18.9-12.2l-1.8 0.5zM826 403.2l18-5l-1.6-1l-18 5zM841.8 405.8l1.7-0.5l-16.5-10.6l-1.7 0.5zM795.1 382.8l17.4-4.5l-1.4-0.9l-17.4 4.5zM809.7 385.1l1.7-0.4l-14.6-9.4l-1.7 0.4zM767.8 364.7l16.7-4l-1.3-0.8l-16.7 4zM781.4 366.8l1.6-0.4l-13.1-8.4l-1.6 0.4zM743.3 348.6l16.2-3.6l-1.1-0.7l-16.2 3.5zM756 350.4l1.6-0.4l-11.7-7.5l-1.5 0.4zM721.4 334.1l15.6-3.3l-1-0.6l-15.6 3.2zM733.3 335.7l1.5-0.3l-10.5-6.8l-1.5 0.3zM701.6 321l15.1-3l-1-0.5l-15 2.9zM712.8 322.5l1.5-0.3l-9.6-6.2l-1.4 0.3zM683.6 309.1l14.6-2.7l-0.9-0.5l-14.5 2.6zM694.2 310.4l1.4-0.2l-8.7-5.6l-1.4 0.2zM667.2 298.2l14.1-2.4l-0.7-0.5l-14.1 2.4zM677.3 299.5l1.3-0.3l-7.9-5.1l-1.4 0.3zM652.2 288.3l13.7-2.2l-0.7-0.5l-13.7 2.3zM661.8 289.5l1.3-0.3l-7.3-4.7l-1.3 0.3zM638.4 279.2l13.3-2l-0.7-0.5l-13.2 2.1zM647.5 280.2l1.3-0.2l-6.7-4.3l-1.3 0.2zM625.7 270.8l12.9-1.9l-0.6-0.4l-12.9 1.9zM634.4 271.8l1.2-0.2l-6.2-4l-1.2 0.2zM614 263l12.5-1.7l-0.6-0.4l-12.5 1.8zM622.3 263.9l1.2-0.1l-5.8-3.7l-1.2 0.1zM603.1 255.8l12.1-1.6l-0.5-0.3l-12.1 1.6zM611 256.7l1.2-0.2l-5.3-3.4l-1.2 0.1zM592.9 249.1l11.8-1.5l-0.4-0.3l-11.8 1.5zM600.6 249.9l1.1-0.2l-5-3.2l-1.1 0.2zM583.5 242.9l11.5-1.4l-0.5-0.3l-11.4 1.4zM590.8 243.6l1.1-0.1l-4.6-3l-1.1 0.1zM574.7 237l11.1-1.3l-0.4-0.3l-11.2 1.4zM581.7 237.7l1.1-0.1l-4.4-2.8l-1 0.1zM566.4 231.6l10.9-1.3l-0.4-0.2l-10.9 1.2zM573.2 232.2l1-0.1l-4.1-2.7l-1 0.2zM558.6 226.4l10.6-1.2l-0.4-0.2l-10.6 1.2zM565.2 227l1-0.1l-3.8-2.5l-1.1 0.1zM551.3 221.6l10.3-1.1l-0.3-0.2l-10.3 1.1zM557.6 222.1l1-0.1l-3.6-2.3l-1 0.1zM544.4 217l10.1-1l-0.3-0.2l-10.1 1zM550.5 217.6l1-0.1l-3.4-2.2l-1 0.1zM537.9 212.7l9.9-0.9l-0.3-0.2l-9.9 0.9zM543.9 213.2l0.9-0.1l-3.2-2l-1 0.1zM531.8 208.7l9.6-1l-0.3-0.1l-9.6 0.9zM537.5 209.1l1 0l-3.1-2l-0.9 0.1zM526 204.8l9.4-0.9l-0.3-0.1l-9.4 0.8zM531.5 205.3l0.9-0.1l-2.8-1.9l-0.9 0.1zM520.4 201.2l9.2-0.9l-0.2-0.1l-9.2 0.8zM525.9 201.6l0.8-0.1l-2.7-1.7l-0.9 0zM515.2 197.7l9-0.8l-0.2-0.1l-9 0.8zM520.5 198.1l0.8-0.1l-2.6-1.6l-0.8 0zM987.2 468.7l18.5-7.2l-2.5-1.4l-18.5 7.1zM1007.5 472.4l1.8-0.7l-25.8-15.1l-1.8 0.7zM897.8 415.1l17.5-5.4l-1.9-1.1l-17.5 5.4zM914.7 417.9l1.7-0.6l-19.5-11.4l-1.6 0.5zM829.4 374l16.4-4.2l-1.5-0.9l-16.4 4.2zM843.8 376.2l1.6-0.5l-15.2-8.9l-1.6 0.4zM775.3 341.5l15.3-3.4l-1.2-0.7l-15.3 3.4zM787.8 343.2l1.5-0.3l-12.2-7.1l-1.5 0.3zM731.4 315.2l14.4-2.8l-0.9-0.6l-14.4 2.8zM742.6 316.6l1.3-0.3l-10-5.8l-1.3 0.2zM695.2 293.4l13.5-2.3l-0.8-0.5l-13.5 2.4zM705.2 294.6l1.3-0.2l-8.4-4.9l-1.3 0.2zM664.7 275.1l12.8-1.9l-0.7-0.4l-12.8 1.9zM673.7 276.1l1.3-0.1l-7.1-4.2l-1.2 0.2zM638.7 259.6l12.1-1.7l-0.6-0.4l-12 1.7zM647 260.4l1.2-0.2l-6.1-3.5l-1.2 0.1zM616.3 246.1l11.5-1.5l-0.6-0.3l-11.4 1.5zM623.9 246.9l1.1-0.2l-5.3-3.1l-1 0.2zM596.8 234.4l10.9-1.3l-0.5-0.3l-10.8 1.3zM603.9 235l1-0.1l-4.6-2.7l-1.1 0.1zM579.7 224.1l10.3-1.1l-0.4-0.3l-10.3 1.2zM586.2 224.7l1-0.1l-4.1-2.4l-1 0.1zM564.5 215l9.8-1l-0.4-0.2l-9.8 1zM570.6 215.5l0.9-0.1l-3.6-2.2l-0.9 0.1zM550.9 206.8l9.4-0.9l-0.3-0.2l-9.4 0.9zM556.6 207.3l1-0.1l-3.3-1.9l-0.9 0.1zM538.7 199.5l9-0.8l-0.3-0.2l-8.9 0.9zM544.1 199.9l0.9 0l-2.9-1.8l-0.9 0.1zM1146.5 522.2l17.8-9.2l-3.5-1.8l-17.7 9.1zM1171.2 526.9l1.7-0.9l-35.9-19.3l-1.7 0.8zM1080.2 485.7l17.5-7.8l-2.9-1.6l-17.6 7.8zM1102.3 489.7l1.7-0.8l-30.5-16.3l-1.7 0.7zM1023.6 454.6l17.3-6.7l-2.6-1.3l-17.2 6.6zM1043.6 458.1l1.6-0.7l-26.2-14.1l-1.6 0.6zM974.8 427.8l16.9-5.8l-2.2-1.2l-16.9 5.8zM993 430.8l1.6-0.6l-22.8-12.2l-1.6 0.5zM932.3 404.4l16.4-5.1l-1.9-1l-16.4 5zM948.9 407l1.6-0.5l-19.9-10.7l-1.6 0.5zM894.9 383.8l16-4.5l-1.7-0.9l-16 4.5zM910.3 386.2l1.5-0.5l-17.6-9.5l-1.6 0.5zM861.7 365.6l15.6-4l-1.5-0.8l-15.6 4zM876 367.7l1.5-0.4l-15.7-8.4l-1.5 0.3zM832.2 349.4l15.1-3.6l-1.4-0.7l-15.1 3.5zM845.5 351.2l1.5-0.3l-14.1-7.6l-1.5 0.3zM805.6 334.8l14.7-3.2l-1.2-0.7l-14.7 3.2zM818.1 336.4l1.4-0.3l-12.7-6.8l-1.4 0.3zM781.7 321.6l14.2-2.9l-1.1-0.6l-14.2 2.9zM793.4 323.1l1.4-0.3l-11.5-6.1l-1.4 0.2zM759.9 309.7l13.8-2.7l-1-0.5l-13.7 2.6zM771 311l1.3-0.2l-10.4-5.6l-1.3 0.2zM740.1 298.8l13.4-2.5l-0.9-0.4l-13.4 2.4zM750.6 300l1.3-0.2l-9.6-5.1l-1.2 0.2zM722 288.8l13-2.2l-0.8-0.5l-13 2.3zM731.9 290l1.3-0.3l-8.8-4.7l-1.2 0.2zM705.4 279.7l12.6-2.1l-0.8-0.4l-12.6 2zM714.8 280.7l1.2-0.2l-8.1-4.3l-1.2 0.2zM690 271.2l12.3-1.9l-0.7-0.4l-12.3 1.9zM699 272.2l1.2-0.2l-7.5-4l-1.1 0.2zM675.8 263.4l12-1.7l-0.7-0.4l-11.9 1.8zM684.4 264.3l1.1-0.1l-6.9-3.8l-1.1 0.2zM662.6 256.2l11.7-1.6l-0.6-0.4l-11.7 1.7zM670.9 257l1.1-0.1l-6.4-3.5l-1.1 0.2zM650.4 249.5l11.4-1.6l-0.6-0.3l-11.4 1.6zM658.3 250.2l1.1-0.1l-6-3.2l-1.1 0.1zM639 243.2l11-1.4l-0.5-0.3l-11 1.4zM646.6 243.9l1-0.1l-5.6-3l-1 0.1zM628.3 237.3l10.8-1.3l-0.5-0.3l-10.8 1.4zM635.6 238l1-0.1l-5.2-2.8l-1 0.1zM618.3 231.8l10.5-1.2l-0.4-0.3l-10.5 1.3zM625.3 232.5l1.1-0.2l-5-2.6l-1 0.1zM609 226.7l10.2-1.2l-0.4-0.2l-10.3 1.1zM615.7 227.3l1-0.1l-4.6-2.5l-1 0.1zM600.1 221.8l10.1-1.1l-0.5-0.2l-10 1.1zM606.7 222.4l0.9-0.1l-4.3-2.3l-1 0.1zM591.8 217.3l9.8-1.1l-0.4-0.2l-9.8 1.1zM598.1 217.8l1-0.1l-4.1-2.2l-0.9 0.1zM584 213l9.6-1l-0.4-0.2l-9.6 1zM590.1 213.5l0.9-0.1l-3.9-2.1l-0.9 0.1zM576.6 208.9l9.3-0.9l-0.3-0.2l-9.4 0.9zM582.5 209.4l0.9-0.1l-3.7-2l-0.9 0.1zM569.6 205l9.1-0.9l-0.3-0.1l-9.2 0.8zM575.3 205.5l0.9-0.1l-3.5-1.9l-0.9 0.1zM1181.3 504.1l16.4-8.5l-3.5-1.6l-16.4 8.4zM1205.4 508.5l1.6-0.8l-36-17.8l-1.6 0.7zM1057.6 441.4l16.1-6.2l-2.5-1.3l-16.2 6.2zM1077.1 444.6l1.6-0.6l-26.5-13.1l-1.6 0.5zM964.7 394.3l15.5-4.8l-2-0.9l-15.4 4.8zM981.1 396.8l1.5-0.5l-20.4-10.1l-1.4 0.5zM892.4 357.7l14.8-3.8l-1.6-0.8l-14.7 3.8zM906.5 359.7l1.5-0.4l-16.2-8l-1.4 0.3zM834.6 328.4l14-3.1l-1.3-0.6l-14 3.1zM846.9 330l1.4-0.3l-13.1-6.5l-1.3 0.3zM787.2 304.4l13.3-2.6l-1.1-0.5l-13.2 2.6zM798.2 305.7l1.3-0.2l-10.9-5.4l-1.2 0.2zM747.8 284.4l12.5-2.2l-0.9-0.4l-12.5 2.2zM757.6 285.5l1.2-0.2l-9.1-4.5l-1.2 0.2zM714.4 267.5l11.8-1.9l-0.7-0.3l-11.9 1.8zM723.3 268.4l1.2-0.2l-7.8-3.8l-1.1 0.1zM685.7 252.9l11.3-1.5l-0.6-0.4l-11.3 1.6zM693.9 253.8l1.1-0.2l-6.7-3.3l-1.1 0.1zM660.9 240.4l10.7-1.4l-0.5-0.3l-10.7 1.4zM668.5 241.1l1-0.2l-5.9-2.9l-1 0.2zM639.2 229.4l10.2-1.3l-0.5-0.2l-10.2 1.2zM646.2 230l1-0.1l-5.2-2.6l-1 0.1zM620 219.6l9.8-1l-0.5-0.3l-9.7 1.1zM626.5 220.2l1-0.1l-4.6-2.3l-0.9 0.1zM603 211l9.3-1l-0.4-0.2l-9.3 1zM609.1 211.5l0.9-0.1l-4.1-2l-0.9 0.1zM1213.4 487.5l15.2-7.9l-3.4-1.5l-15.2 7.8zM1236.9 491.5l1.5-0.7l-35.9-16.6l-1.4 0.8zM1146.8 456.1l15.2-6.7l-2.9-1.4l-15.3 6.7zM1167.9 459.6l1.5-0.7l-30.8-14.1l-1.5 0.6zM1089.3 429.1l15.1-5.9l-2.5-1.1l-15.1 5.8zM1108.5 432.1l1.5-0.6l-26.8-12.3l-1.4 0.6zM1039.3 405.6l14.9-5.2l-2.3-1l-14.9 5.1zM1056.8 408.2l1.5-0.5l-23.5-10.8l-1.4 0.5zM995.3 384.9l14.6-4.6l-2-0.9l-14.6 4.5zM1011.4 387.2l1.4-0.4l-20.6-9.6l-1.4 0.4zM956.3 366.5l14.3-4l-1.7-0.8l-14.4 4zM971.3 368.6l1.4-0.4l-18.5-8.5l-1.3 0.4zM921.5 350.2l14-3.6l-1.5-0.7l-14 3.6zM935.5 352.1l1.3-0.4l-16.5-7.6l-1.3 0.3zM890.3 335.5l13.7-3.2l-1.4-0.7l-13.7 3.3zM903.4 337.2l1.3-0.3l-14.9-6.9l-1.3 0.3zM862.2 322.3l13.3-3l-1.3-0.5l-13.3 2.9zM874.4 323.8l1.3-0.3l-13.4-6.2l-1.3 0.3zM836.7 310.3l13-2.7l-1.2-0.5l-13 2.6zM848.2 311.7l1.2-0.3l-12.2-5.7l-1.3 0.3zM813.4 299.3l12.7-2.4l-1.1-0.5l-12.7 2.4zM824.3 300.6l1.2-0.2l-11.2-5.2l-1.2 0.2zM792.1 289.3l12.4-2.2l-1-0.5l-12.4 2.3zM802.4 290.5l1.2-0.2l-10.3-4.8l-1.1 0.2zM772.6 280.1l12-2l-0.9-0.4l-12 2zM782.3 281.2l1.2-0.2l-9.4-4.4l-1.2 0.2zM754.5 271.7l11.8-1.9l-0.9-0.4l-11.7 1.9zM763.9 272.6l1.1-0.2l-8.7-4l-1.2 0.2zM737.9 263.8l11.4-1.7l-0.7-0.4l-11.5 1.8zM746.8 264.7l1.1-0.1l-8.1-3.8l-1.1 0.2zM722.4 256.6l11.2-1.7l-0.7-0.3l-11.2 1.6zM730.9 257.4l1.1-0.2l-7.5-3.4l-1.1 0.1zM708.1 249.8l10.9-1.5l-0.7-0.3l-10.9 1.5zM716.2 250.6l1.1-0.2l-7-3.2l-1.1 0.2zM694.7 243.5l10.6-1.4l-0.6-0.3l-10.6 1.4zM702.5 244.2l1-0.1l-6.5-3l-1 0.1zM682.2 237.6l10.4-1.3l-0.6-0.3l-10.4 1.4zM689.7 238.3l1-0.1l-6.1-2.8l-1 0.1zM670.5 232.1l10.1-1.2l-0.5-0.3l-10.2 1.3zM677.7 232.8l1-0.2l-5.8-2.6l-0.9 0.1zM659.5 226.9l9.9-1.1l-0.5-0.3l-9.9 1.2zM666.4 227.5l1-0.1l-5.4-2.5l-1 0.2zM649.1 222.1l9.7-1.1l-0.5-0.2l-9.6 1.1zM655.8 222.6l1-0.1l-5.1-2.3l-0.9 0.1zM639.4 217.5l9.5-1l-0.5-0.3l-9.5 1.1zM645.9 218l0.9-0.1l-4.8-2.2l-0.9 0.1zM630.2 213.2l9.3-1l-0.5-0.2l-9.2 1zM636.5 213.7l0.9-0.1l-4.6-2.1l-0.8 0.1zM621.5 209.1l9.1-0.9l-0.4-0.2l-9.1 0.9zM627.6 209.6l0.8-0.1l-4.2-2l-0.9 0.1zM1243.2 472l14.1-7.3l-3.4-1.4l-14.1 7.2zM1266.1 475.8l1.4-0.7l-35.7-15.4l-1.3 0.7zM1119.1 417.6l14.1-5.5l-2.5-1.1l-14.2 5.4zM1137.9 420.4l1.3-0.5l-26.8-11.6l-1.4 0.5zM1024.1 375.9l13.9-4.3l-2-0.8l-13.9 4.2zM1040 378.1l1.4-0.4l-21-9l-1.3 0.4zM949.2 343.1l13.3-3.5l-1.6-0.7l-13.3 3.5zM963 344.8l1.2-0.3l-16.7-7.2l-1.3 0.3zM888.6 316.5l12.7-2.9l-1.3-0.5l-12.8 2.8zM900.7 317.9l1.2-0.3l-13.8-5.9l-1.2 0.3zM838.5 294.5l12.1-2.4l-1.1-0.4l-12.1 2.3zM849.2 295.7l1.2-0.2l-11.5-5l-1.1 0.2zM796.4 276l11.6-2l-0.9-0.3l-11.6 1.9zM806.1 277.1l1.1-0.2l-9.7-4.2l-1.1 0.2zM760.6 260.3l11-1.7l-0.8-0.3l-11 1.7zM769.4 261.2l1.1-0.2l-8.4-3.6l-1 0.2zM729.7 246.8l10.5-1.5l-0.7-0.3l-10.5 1.5zM737.8 247.5l1-0.1l-7.3-3.1l-1 0.1zM702.8 235l10.1-1.3l-0.7-0.3l-10 1.3zM710.2 235.6l1-0.1l-6.3-2.7l-1 0.1zM679.2 224.6l9.6-1.1l-0.6-0.3l-9.6 1.2zM686.1 225.2l0.9-0.1l-5.6-2.4l-0.9 0.1zM658.2 215.4l9.2-1l-0.4-0.2l-9.3 1zM664.7 215.9l0.9-0.1l-5-2.1l-0.9 0.1zM1204.7 430.4l13.3-5.9l-3-1.1l-13.3 5.8zM1224.9 433.5l1.3-0.6l-30.8-12.4l-1.2 0.5zM1147 406.7l13.3-5.1l-2.6-1.1l-13.3 5.2zM1165.4 409.4l1.3-0.5l-26.9-10.9l-1.3 0.5zM1096.3 385.9l13.3-4.6l-2.3-0.9l-13.3 4.6zM1113.3 388.3l1.2-0.5l-23.7-9.6l-1.3 0.4zM1051.4 367.5l13.1-4.1l-2-0.8l-13.1 4zM1067.1 369.6l1.3-0.4l-21.2-8.6l-1.2 0.4zM1011.4 351l12.9-3.6l-1.8-0.7l-12.9 3.6zM1026 352.9l1.2-0.4l-18.9-7.6l-1.2 0.3zM975.5 336.3l12.7-3.3l-1.6-0.7l-12.7 3.3zM989.1 337.9l1.2-0.3l-17-6.9l-1.2 0.3zM943.1 323l12.5-3l-1.5-0.6l-12.4 3zM955.9 324.5l1.2-0.3l-15.5-6.3l-1.2 0.3zM913.8 310.9l12.2-2.7l-1.4-0.5l-12.2 2.6zM925.7 312.3l1.2-0.3l-14-5.7l-1.2 0.3zM887 299.9l11.9-2.5l-1.2-0.5l-11.9 2.5zM898.3 301.2l1.1-0.3l-12.8-5.2l-1.1 0.3zM862.5 289.8l11.7-2.2l-1.1-0.5l-11.7 2.3zM873.2 291l1.1-0.2l-11.7-4.8l-1.1 0.2zM840.1 280.6l11.4-2.1l-1.1-0.4l-11.4 2.1zM850.2 281.7l1.1-0.2l-10.8-4.4l-1.1 0.2zM819.4 272.1l11.1-1.9l-0.9-0.4l-11.2 1.9zM829 273.1l1.1-0.2l-10-4.1l-1.1 0.2zM800.2 264.2l10.9-1.7l-0.9-0.4l-10.9 1.8zM809.4 265.1l1.1-0.1l-9.3-3.8l-1 0.2zM782.5 256.9l10.6-1.6l-0.8-0.3l-10.6 1.6zM791.2 257.8l1.1-0.2l-8.6-3.5l-1 0.2zM766 250.2l10.4-1.6l-0.8-0.3l-10.4 1.5zM774.4 250.9l1-0.1l-8-3.2l-1 0.1zM750.6 243.8l10.2-1.4l-0.7-0.3l-10.2 1.4zM758.6 244.6l1-0.2l-7.5-3l-0.9 0.1zM736.2 237.9l10-1.3l-0.7-0.3l-9.9 1.4zM743.9 238.6l1-0.1l-7-2.8l-0.9 0.1zM722.8 232.4l9.7-1.3l-0.6-0.2l-9.7 1.2zM730.2 233l0.9-0.1l-6.5-2.6l-1 0.1zM710.2 227.2l9.5-1.2l-0.6-0.2l-9.5 1.2zM717.3 227.8l0.9-0.1l-6.1-2.5l-1 0.1zM698.3 222.3l9.3-1.1l-0.5-0.2l-9.4 1.1zM705.2 222.9l0.9-0.1l-5.8-2.4l-0.9 0.2zM687.1 217.7l9.2-1l-0.6-0.2l-9.1 1zM693.7 218.3l0.9-0.1l-5.4-2.2l-0.9 0.1zM676.5 213.4l9-1l-0.5-0.2l-8.9 1zM683 213.9l0.8-0.1l-5.1-2.1l-0.9 0.1zM1173.3 396.6l12.5-4.9l-2.6-1l-12.5 4.9zM1191.4 399.1l1.2-0.5l-27-10.3l-1.2 0.5zM1077.3 359.5l12.4-3.9l-2-0.8l-12.5 3.9zM1092.7 361.4l1.2-0.3l-21.3-8.2l-1.2 0.4zM1000.6 329.8l12.1-3.1l-1.7-0.6l-12.1 3.1zM1014 331.4l1.2-0.3l-17.3-6.6l-1.2 0.3zM937.9 305.6l11.6-2.6l-1.3-0.5l-11.7 2.5zM949.7 306.9l1.1-0.3l-14.2-5.4l-1.2 0.2zM885.7 285.4l11.2-2.2l-1.2-0.4l-11.2 2.1zM896.2 286.5l1.1-0.2l-12-4.6l-1.1 0.2zM841.5 268.3l10.7-1.9l-0.9-0.3l-10.8 1.8zM851 269.2l1.1-0.1l-10.3-3.9l-1 0.1zM803.6 253.7l10.3-1.6l-0.8-0.3l-10.3 1.5zM812.3 254.5l1-0.2l-8.8-3.3l-1 0.1zM770.8 241l9.9-1.4l-0.7-0.3l-9.9 1.4zM778.8 241.7l1-0.1l-7.7-3l-0.9 0.2zM742.2 229.9l9.5-1.2l-0.7-0.3l-9.5 1.3zM749.6 230.5l0.9-0.1l-6.8-2.6l-0.9 0.1zM716.9 220.1l9.1-1.1l-0.6-0.2l-9.1 1.1zM723.7 220.7l0.9-0.1l-6-2.3l-0.9 0.1zM1255.5 407.9l11.7-5.2l-2.9-1l-11.8 5.2zM1274.8 410.6l1.1-0.5l-30.4-11l-1.1 0.5zM1198 387l11.8-4.6l-2.5-1l-11.9 4.6zM1215.8 389.3l1.1-0.4l-26.9-9.7l-1.1 0.4zM1147.1 368.4l11.9-4.1l-2.3-0.8l-11.8 4.1zM1163.5 370.5l1.2-0.4l-24-8.6l-1.1 0.4zM1101.8 351.9l11.8-3.7l-2-0.7l-11.8 3.6zM1117 353.7l1.1-0.3l-21.4-7.7l-1.1 0.3zM1061.2 337l11.6-3.3l-1.8-0.6l-11.7 3.2zM1075.3 338.7l1.1-0.3l-19.2-6.9l-1.2 0.3zM1024.5 323.6l11.5-2.9l-1.6-0.6l-11.6 2.9zM1037.7 325.2l1.1-0.3l-17.4-6.3l-1.1 0.3zM991.2 311.5l11.4-2.7l-1.5-0.5l-11.4 2.7zM1003.7 312.9l1.1-0.3l-15.9-5.7l-1.1 0.3zM961 300.5l11.2-2.5l-1.4-0.5l-11.2 2.5zM972.7 301.7l1.1-0.2l-14.5-5.2l-1.1 0.2zM933.3 290.4l11-2.3l-1.3-0.5l-11 2.3zM944.3 291.5l1.1-0.2l-13.3-4.8l-1 0.2zM907.9 281.1l10.8-2.1l-1.2-0.4l-10.8 2.1zM918.3 282.1l1.1-0.2l-12.2-4.4l-1.1 0.2zM884.4 272.5l10.6-1.9l-1.1-0.4l-10.5 1.9zM894.4 273.5l1-0.2l-11.3-4l-1 0.2zM862.8 264.6l10.4-1.7l-1-0.4l-10.4 1.8zM872.3 265.5l1-0.1l-10.5-3.8l-1 0.2zM842.7 257.3l10.2-1.6l-0.9-0.4l-10.2 1.7zM851.8 258.2l1-0.2l-9.7-3.5l-1 0.2zM824.1 250.5l10-1.5l-0.9-0.3l-10 1.5zM832.7 251.3l1-0.2l-9-3.2l-1 0.1zM806.7 244.2l9.8-1.5l-0.8-0.3l-9.8 1.5zM815 244.9l0.9-0.1l-8.4-3.1l-0.9 0.2zM790.5 238.2l9.5-1.3l-0.7-0.3l-9.6 1.4zM798.4 238.9l0.9-0.1l-7.9-2.8l-0.9 0.1zM775.3 232.7l9.4-1.3l-0.8-0.2l-9.3 1.2zM782.9 233.3l0.9-0.1l-7.4-2.7l-0.9 0.2zM761 227.5l9.2-1.2l-0.7-0.2l-9.2 1.1zM768.3 228.1l0.9-0.1l-6.9-2.5l-0.9 0.1zM747.6 222.6l9-1.1l-0.6-0.3l-9 1.2zM754.7 223.2l0.8-0.2l-6.5-2.3l-0.9 0.1zM1221.4 377.9l11.2-4.3l-2.6-0.9l-11.2 4.3zM1238.8 380.1l1.1-0.4l-26.9-9.1l-1 0.4zM1125.1 344.6l11.2-3.4l-2-0.7l-11.2 3.4zM1140.1 346.4l1-0.3l-21.4-7.3l-1.1 0.3zM1047.3 317.7l11-2.8l-1.7-0.6l-11 2.9zM1060.4 319.2l1-0.3l-17.5-6l-1.1 0.3zM983.1 295.6l10.7-2.4l-1.4-0.5l-10.7 2.4zM994.7 296.8l1-0.3l-14.6-5l-1.1 0.3zM929.2 276.9l10.4-2l-1.2-0.4l-10.4 2zM939.6 278l1-0.2l-12.4-4.3l-1 0.2zM883.4 261.1l10-1.7l-1-0.4l-10 1.7zM892.8 262l0.9-0.2l-10.6-3.6l-1 0.1zM843.9 247.4l9.6-1.4l-0.9-0.3l-9.6 1.4zM852.5 248.2l0.9-0.1l-9.2-3.2l-1 0.2zM809.5 235.6l9.3-1.3l-0.8-0.3l-9.3 1.3zM817.4 236.2l0.9-0.1l-8.1-2.7l-0.9 0.1zM779.3 225.1l8.9-1.1l-0.7-0.3l-8.9 1.2zM786.6 225.7l0.8-0.1l-7.1-2.4l-0.8 0.1zM1243.4 369.3l10.6-4.1l-2.5-0.8l-10.6 4.1zM1260.5 371.4l1.1-0.4l-26.8-8.6l-1 0.4zM1192.7 352.7l10.7-3.7l-2.3-0.7l-10.7 3.6zM1208.6 354.6l1-0.4l-23.9-7.7l-1 0.3zM1147.3 337.8l10.7-3.3l-2.1-0.7l-10.7 3.3zM1162 339.5l1-0.4l-21.5-6.9l-1 0.3zM1106.3 324.3l10.6-3l-1.9-0.6l-10.6 3zM1120 325.8l1-0.2l-19.4-6.3l-1 0.2zM1069.1 312.1l10.6-2.7l-1.7-0.5l-10.6 2.7zM1082 313.5l1-0.3l-17.7-5.7l-1 0.3zM1035.3 301l10.4-2.5l-1.5-0.5l-10.5 2.5zM1047.4 302.3l1-0.3l-16.1-5.2l-1 0.2zM1004.4 290.9l10.3-2.3l-1.5-0.5l-10.3 2.3zM1015.8 292l1-0.2l-14.8-4.8l-1 0.2zM976 281.6l10.1-2.1l-1.3-0.5l-10.1 2.1zM986.8 282.6l1-0.2l-13.7-4.4l-0.9 0.2zM949.8 273l10-2l-1.2-0.4l-10 2zM960.1 274l1-0.2l-12.6-4.1l-1 0.2zM925.6 265l9.9-1.8l-1.1-0.3l-9.9 1.8zM935.4 266l1-0.2l-11.7-3.8l-0.9 0.2zM903.2 257.7l9.7-1.7l-1-0.3l-9.7 1.6zM912.6 258.5l0.9-0.1l-10.8-3.5l-0.9 0.1zM882.4 250.9l9.5-1.6l-0.9-0.3l-9.5 1.5zM891.3 251.6l0.9-0.1l-10-3.3l-0.9 0.2zM863 244.5l9.4-1.5l-0.9-0.2l-9.4 1.4zM871.5 245.2l0.9-0.1l-9.4-3.1l-0.9 0.2zM844.9 238.5l9.2-1.3l-0.9-0.3l-9.1 1.4zM853.1 239.2l0.9-0.1l-8.8-2.8l-0.9 0.1zM827.9 233l9-1.3l-0.8-0.2l-9 1.2zM835.8 233.6l0.8-0.1l-8.2-2.7l-0.9 0.1zM1264.4 361.2l10-3.9l-2.5-0.8l-10.1 3.9zM1281.1 363.2l1-0.4l-26.6-8.2l-1 0.4zM1168.4 331.2l10.1-3.1l-2-0.7l-10.2 3.2zM1182.9 332.8l0.9-0.3l-21.5-6.6l-1 0.3zM1090 306.7l10.1-2.6l-1.7-0.5l-10.1 2.6zM1102.7 308.1l1-0.3l-17.8-5.5l-1 0.3zM1024.7 286.4l9.9-2.2l-1.4-0.5l-9.9 2.2zM1036.1 287.5l0.9-0.2l-14.9-4.6l-1 0.2zM969.6 269.1l9.7-1.8l-1.3-0.4l-9.6 1.9zM979.8 270.1l0.9-0.2l-12.7-3.9l-0.9 0.2zM922.4 254.4l9.4-1.6l-1.1-0.3l-9.3 1.6zM931.7 255.2l0.9-0.1l-11-3.4l-0.9 0.1zM881.6 241.6l9-1.4l-0.9-0.3l-9.1 1.4zM890 242.3l0.9-0.1l-9.6-2.9l-0.8 0.1zM1233.9 338.5l9.6-3.3l-2.3-0.7l-9.6 3.3zM1249.2 340.2l0.9-0.3l-23.8-7l-0.9 0.3zM1188.5 325l9.7-3l-2.1-0.6l-9.7 3zM1202.8 326.5l0.9-0.3l-21.5-6.3l-1 0.3zM1147.4 312.7l9.7-2.7l-1.9-0.5l-9.7 2.7zM1160.7 314.1l1-0.2l-19.6-5.8l-0.9 0.3zM1110 301.6l9.6-2.5l-1.7-0.5l-9.7 2.5zM1122.5 302.9l0.9-0.3l-17.8-5.2l-0.9 0.2zM1075.7 291.4l9.7-2.3l-1.6-0.5l-9.6 2.3zM1087.6 292.6l0.9-0.3l-16.3-4.8l-1 0.2zM1044.4 282l9.5-2.1l-1.5-0.4l-9.5 2.1zM1055.6 283.1l0.9-0.2l-15.1-4.4l-0.9 0.2zM1015.4 273.4l9.5-1.9l-1.4-0.4l-9.4 1.9zM1026.1 274.4l0.9-0.2l-13.9-4.1l-0.9 0.2zM988.7 265.4l9.3-1.8l-1.2-0.3l-9.3 1.8zM998.8 266.4l0.9-0.2l-12.8-3.8l-0.9 0.2zM964 258.1l9.1-1.7l-1.1-0.3l-9.2 1.6zM973.6 258.9l0.9-0.1l-12-3.6l-0.8 0.2zM941 251.2l9-1.5l-1.1-0.4l-9 1.6zM950.1 252l0.9-0.2l-11.1-3.2l-0.9 0.1zM919.5 244.8l8.9-1.4l-1-0.3l-8.9 1.4zM928.3 245.6l0.9-0.2l-10.4-3l-0.9 0.1zM899.5 238.8l8.8-1.3l-1-0.3l-8.7 1.4zM907.9 239.5l0.9-0.1l-9.7-2.9l-0.9 0.2zM880.8 233.3l8.6-1.3l-0.9-0.3l-8.6 1.3zM888.8 233.9l0.9-0.1l-9.1-2.7l-0.9 0.1zM1207.7 319l9.3-2.8l-2.1-0.6l-9.3 2.9zM1221.7 320.5l0.9-0.3l-21.5-6l-0.8 0.3zM1129.1 296.6l9.3-2.3l-1.7-0.5l-9.3 2.4zM1141.5 297.9l0.9-0.3l-17.9-5l-0.9 0.2zM1063.2 277.9l9.2-2.1l-1.5-0.4l-9.1 2zM1074.3 278.9l0.9-0.2l-15.2-4.3l-0.9 0.2zM1007.2 261.9l8.9-1.8l-1.2-0.3l-9 1.7zM1017.1 262.8l0.9-0.2l-13-3.7l-0.8 0.2zM958.9 248.1l8.7-1.5l-1-0.3l-8.8 1.5zM968 248.9l0.8-0.2l-11.2-3.1l-0.8 0.1zM916.9 236.2l8.5-1.4l-0.9-0.2l-8.5 1.3zM925.3 236.8l0.8-0.1l-9.9-2.8l-0.8 0.2zM880.1 225.7l8.2-1.2l-0.8-0.2l-8.3 1.1zM887.8 226.2l0.7-0.1l-8.6-2.4l-0.8 0.1zM1226 313.4l8.9-2.8l-2.1-0.5l-8.8 2.7zM1239.9 314.8l0.8-0.3l-21.4-5.8l-0.9 0.3zM1185 302.2l8.9-2.6l-1.9-0.5l-8.9 2.5zM1198 303.4l0.8-0.2l-19.5-5.3l-0.9 0.2zM1147.5 291.9l8.9-2.3l-1.8-0.5l-8.9 2.3zM1159.7 293.1l0.9-0.2l-18-4.9l-0.8 0.2zM1113 282.5l8.9-2.1l-1.6-0.4l-8.8 2.1zM1124.6 283.6l0.9-0.2l-16.5-4.5l-0.9 0.2zM1081.3 273.8l8.9-1.9l-1.5-0.4l-8.8 2zM1092.3 274.8l0.9-0.1l-15.3-4.2l-0.8 0.2zM1052.1 265.9l8.7-1.9l-1.3-0.3l-8.8 1.8zM1062.5 266.8l0.8-0.2l-14.1-3.8l-0.8 0.2zM1024.9 258.4l8.7-1.6l-1.3-0.4l-8.6 1.7zM1034.8 259.3l0.9-0.2l-13.1-3.5l-0.8 0.2zM999.7 251.6l8.6-1.6l-1.2-0.3l-8.5 1.5zM1009.2 252.4l0.8-0.2l-12.2-3.3l-0.8 0.2zM976.2 245.1l8.5-1.4l-1.1-0.3l-8.4 1.4zM985.3 245.9l0.8-0.2l-11.4-3l-0.8 0.1zM954.3 239.2l8.4-1.4l-1-0.3l-8.4 1.4zM963 239.8l0.8-0.1l-10.7-2.9l-0.8 0.2zM933.8 233.5l8.2-1.2l-0.9-0.3l-8.3 1.3zM942.1 234.2l0.8-0.1l-10-2.7l-0.8 0.1zM914.5 228.3l8.2-1.2l-0.9-0.2l-8.2 1.1zM922.5 228.9l0.8-0.1l-9.4-2.5l-0.8 0.1zM896.4 223.3l8.1-1.1l-0.9-0.2l-8 1.1zM904.1 223.9l0.8-0.1l-8.8-2.4l-0.8 0.1zM1243.6 307.9l8.5-2.6l-2.1-0.5l-8.5 2.6zM1257.2 309.3l0.8-0.3l-21.3-5.5l-0.9 0.2zM1165.1 287.4l8.5-2.3l-1.7-0.4l-8.5 2.2zM1177.2 288.5l0.8-0.2l-17.9-4.7l-0.9 0.2zM1098.8 270l8.5-1.9l-1.4-0.4l-8.5 1.9zM1109.7 270.9l0.8-0.1l-15.3-4l-0.8 0.2zM1042.1 255.1l8.4-1.6l-1.3-0.3l-8.3 1.6zM1051.9 255.9l0.8-0.1l-13.1-3.4l-0.8 0.1zM993 242.3l8.2-1.4l-1.1-0.3l-8.1 1.4zM1002 243l0.8-0.2l-11.5-2.9l-0.8 0.1zM950.2 231l8-1.2l-1-0.3l-8 1.3zM958.4 231.6l0.8-0.1l-10.1-2.6l-0.8 0.1zM912.4 221.1l7.8-1.1l-0.9-0.2l-7.8 1.1zM920 221.7l0.7-0.1l-8.9-2.3l-0.7 0.1zM1260.4 302.7l8.1-2.5l-2-0.5l-8.2 2.5zM1273.8 304l0.8-0.2l-21.3-5.3l-0.8 0.2zM1219.5 292.4l8.2-2.3l-1.9-0.4l-8.2 2.3zM1232.2 293.6l0.7-0.2l-19.5-4.9l-0.7 0.2zM1182 283l8.3-2.1l-1.8-0.5l-8.2 2.2zM1194 284.1l0.8-0.2l-18-4.5l-0.8 0.2zM1147.5 274.3l8.3-2l-1.6-0.4l-8.3 2zM1158.8 275.3l0.8-0.2l-16.5-4.1l-0.8 0.2zM1115.7 266.3l8.2-1.8l-1.5-0.4l-8.2 1.8zM1126.4 267.2l0.8-0.2l-15.3-3.8l-0.8 0.2zM1086.1 258.8l8.2-1.7l-1.4-0.3l-8.1 1.7zM1096.3 259.7l0.8-0.2l-14.2-3.5l-0.8 0.1zM1058.7 251.9l8.1-1.6l-1.3-0.3l-8 1.6zM1068.4 252.7l0.8-0.1l-13.2-3.3l-0.8 0.1zM1033.2 245.5l8-1.5l-1.2-0.3l-8 1.5zM1042.4 246.2l0.8-0.1l-12.3-3.1l-0.8 0.1zM1009.3 239.5l8-1.4l-1.1-0.3l-8 1.4zM1018.2 240.2l0.8-0.2l-11.6-2.9l-0.7 0.2zM987 233.8l7.9-1.2l-1.1-0.3l-7.8 1.3zM995.5 234.5l0.7-0.1l-10.8-2.7l-0.7 0.1zM966.1 228.6l7.7-1.2l-0.9-0.3l-7.8 1.2zM974.2 229.2l0.8-0.1l-10.2-2.6l-0.7 0.1zM946.4 223.6l7.7-1.1l-1-0.3l-7.6 1.2zM954.2 224.2l0.8-0.1l-9.6-2.4l-0.7 0.1zM927.9 218.9l7.5-1l-0.8-0.2l-7.6 1zM935.4 219.5l0.7-0.1l-9-2.3l-0.7 0.1zM1198.3 278.8l7.9-2.1l-1.7-0.4l-7.9 2.1zM1210.1 279.8l0.8-0.2l-17.9-4.3l-0.8 0.2zM1131.9 262.7l7.9-1.8l-1.4-0.3l-8 1.7zM1142.5 263.6l0.8-0.2l-15.4-3.7l-0.7 0.2zM1074.8 248.8l7.8-1.5l-1.3-0.3l-7.8 1.5zM1084.4 249.6l0.7-0.2l-13.2-3.2l-0.8 0.2zM1025.1 236.8l7.7-1.4l-1.1-0.2l-7.7 1.3zM1033.9 237.4l0.7-0.1l-11.6-2.8l-0.7 0.1zM981.5 226.2l7.5-1.2l-0.9-0.2l-7.6 1.1zM989.6 226.8l0.7-0.1l-10.2-2.5l-0.8 0.1zM942.9 216.8l7.4-1l-0.9-0.2l-7.4 1zM950.4 217.3l0.7-0.1l-9.1-2.1l-0.7 0.1zM1251.3 283.5l7.6-2.2l-1.9-0.4l-7.5 2.1zM1263.6 284.6l0.8-0.3l-19.4-4.4l-0.8 0.2zM1214 274.7l7.6-1.9l-1.7-0.4l-7.6 1.9zM1225.6 275.7l0.8-0.2l-17.9-4.1l-0.7 0.2zM1179.5 266.7l7.7-1.8l-1.6-0.4l-7.7 1.8zM1190.6 267.6l0.7-0.2l-16.6-3.8l-0.7 0.2zM1147.6 259.2l7.6-1.7l-1.4-0.3l-7.7 1.7zM1158.1 260.1l0.7-0.2l-15.3-3.6l-0.8 0.2zM1117.9 252.3l7.7-1.6l-1.4-0.3l-7.6 1.5zM1127.9 253.1l0.7-0.2l-14.2-3.3l-0.8 0.2zM1090.3 245.8l7.6-1.5l-1.3-0.3l-7.6 1.5zM1099.8 246.6l0.8-0.2l-13.4-3.1l-0.7 0.2zM1064.5 239.8l7.5-1.4l-1.2-0.3l-7.5 1.4zM1073.6 240.5l0.7-0.2l-12.4-2.9l-0.7 0.2zM1040.4 234.1l7.5-1.3l-1.2-0.2l-7.4 1.3zM1049.1 234.8l0.7-0.1l-11.7-2.7l-0.7 0.1zM1017.7 228.8l7.5-1.2l-1.1-0.2l-7.4 1.2zM1026.1 229.4l0.7-0.1l-10.9-2.5l-0.8 0.1zM996.5 223.9l7.3-1.2l-1-0.2l-7.3 1.1zM1004.5 224.4l0.7-0.1l-10.3-2.4l-0.7 0.1zM976.5 219.2l7.2-1.1l-0.9-0.2l-7.3 1.1zM984.2 219.7l0.7-0.1l-9.7-2.2l-0.7 0.1zM957.6 214.8l7.2-1l-0.9-0.3l-7.2 1.1zM965 215.3l0.7-0.1l-9.2-2.2l-0.7 0.1zM1229.1 270.8l7.3-1.9l-1.7-0.3l-7.3 1.9zM1240.6 271.8l0.7-0.2l-17.9-4l-0.7 0.2zM1162.7 255.9l7.4-1.7l-1.5-0.3l-7.3 1.6zM1173.1 256.7l0.7-0.2l-15.4-3.4l-0.7 0.1zM1105.3 242.9l7.4-1.4l-1.3-0.3l-7.3 1.4zM1114.8 243.6l0.7-0.1l-13.4-3l-0.7 0.1zM1055.2 231.6l7.3-1.3l-1.2-0.2l-7.2 1.2zM1063.9 232.2l0.7-0.1l-11.8-2.6l-0.7 0.1zM1011 221.6l7.2-1.1l-1-0.2l-7.1 1.1zM1019 222.2l0.7-0.1l-10.4-2.4l-0.7 0.1zM971.8 212.8l7-1l-0.9-0.2l-6.9 1zM979.2 213.3l0.7-0.1l-9.3-2.1l-0.6 0.1zM1243.6 267.1l7.1-1.8l-1.7-0.4l-7.1 1.8zM1255 268l0.7-0.2l-17.8-3.8l-0.7 0.2zM1209.3 259.6l7.1-1.7l-1.6-0.3l-7.1 1.6zM1220.1 260.5l0.6-0.2l-16.5-3.6l-0.7 0.2zM1177.4 252.6l7.1-1.6l-1.5-0.3l-7.1 1.6zM1187.6 253.4l0.7-0.1l-15.4-3.3l-0.6 0.1zM1147.7 246.1l7.1-1.4l-1.4-0.3l-7.1 1.4zM1157.4 246.9l0.7-0.2l-14.3-3.1l-0.7 0.2zM1119.9 240.1l7.1-1.4l-1.3-0.3l-7.1 1.4zM1129.2 240.8l0.7-0.2l-13.4-2.8l-0.7 0.1zM1093.9 234.4l7.1-1.3l-1.2-0.2l-7.1 1.3zM1102.9 235.1l0.7-0.2l-12.6-2.7l-0.7 0.2zM1069.6 229.1l7-1.2l-1.1-0.2l-7 1.2zM1078.2 229.7l0.7-0.1l-11.8-2.5l-0.7 0.1zM1046.7 224.1l7-1.1l-1-0.2l-7 1.1zM1055 224.7l0.6-0.1l-11.1-2.4l-0.6 0.1zM1025.2 219.4l6.9-1.1l-1-0.2l-6.9 1.1zM1033.1 220l0.7-0.1l-10.5-2.3l-0.6 0.1zM1004.9 215l6.9-1l-1-0.2l-6.8 1zM1012.5 215.5l0.7-0.1l-9.9-2.1l-0.6 0.1zM985.7 210.8l6.8-1l-0.9-0.1l-6.8 0.9zM993.1 211.3l0.6-0.1l-9.3-2l-0.7 0.1zM967.6 206.8l6.7-0.9l-0.8-0.1l-6.8 0.9zM974.7 207.3l0.6-0.1l-8.8-1.9l-0.7 0.1zM1257.7 263.5l6.8-1.8l-1.7-0.3l-6.8 1.7zM1268.9 264.4l0.6-0.2l-17.7-3.7l-0.7 0.1zM1191.5 249.5l6.9-1.5l-1.5-0.3l-6.9 1.5zM1201.7 250.3l0.6-0.2l-15.3-3.2l-0.7 0.2zM1134 237.4l6.9-1.4l-1.3-0.2l-6.9 1.3zM1143.3 238l0.6-0.1l-13.4-2.8l-0.7 0.1zM1083.6 226.7l6.8-1.2l-1.1-0.2l-6.9 1.2zM1092.1 227.3l0.6-0.1l-11.8-2.5l-0.7 0.1zM1039 217.3l6.7-1.1l-1-0.2l-6.7 1.1zM1046.8 217.8l0.7-0.1l-10.5-2.2l-0.7 0.1zM999.3 208.9l6.6-0.9l-0.9-0.2l-6.6 0.9zM1006.6 209.4l0.6-0.1l-9.4-2l-0.6 0.1zM1237 253l6.7-1.6l-1.6-0.3l-6.6 1.6zM1247.6 253.8l0.6-0.2l-16.4-3.3l-0.7 0.1zM1205.2 246.5l6.7-1.5l-1.5-0.3l-6.7 1.5zM1215.2 247.2l0.7-0.1l-15.4-3.1l-0.6 0.1zM1175.5 240.4l6.7-1.4l-1.4-0.3l-6.7 1.4zM1185.1 241.1l0.6-0.1l-14.3-2.9l-0.7 0.1zM1147.7 234.7l6.7-1.3l-1.3-0.2l-6.7 1.2zM1156.9 235.4l0.6-0.2l-13.4-2.7l-0.7 0.1zM1121.6 229.4l6.7-1.2l-1.2-0.3l-6.7 1.2zM1130.4 230l0.7-0.1l-12.7-2.6l-0.6 0.1zM1097.2 224.4l6.6-1.2l-1.1-0.2l-6.7 1.1zM1105.6 225l0.6-0.2l-11.8-2.4l-0.7 0.1zM1074.1 219.7l6.6-1.1l-1.1-0.2l-6.6 1zM1082.2 220.2l0.6-0.1l-11.1-2.3l-0.7 0.1zM1052.4 215.2l6.6-1l-1.1-0.2l-6.5 1zM1060.2 215.7l0.6-0.1l-10.5-2.1l-0.7 0.1zM1031.9 211l6.5-0.9l-1-0.2l-6.5 0.9zM1039.4 211.5l0.6-0.1l-10-2l-0.6 0.1zM1012.5 207.1l6.4-1l-0.9-0.1l-6.5 0.9zM1019.7 207.5l0.6-0.1l-9.4-1.9l-0.7 0.1zM994.1 203.3l6.4-0.9l-0.9-0.1l-6.4 0.8zM1001 203.7l0.7-0.1l-9-1.8l-0.6 0.1zM1218.5 243.5l6.4-1.4l-1.5-0.3l-6.4 1.5zM1228.4 244.3l0.6-0.2l-15.3-3l-0.6 0.2zM1161 232.1l6.5-1.2l-1.3-0.3l-6.5 1.3zM1170 232.8l0.7-0.1l-13.5-2.7l-0.6 0.1zM1110.3 222.1l6.5-1.1l-1.1-0.2l-6.5 1.1zM1118.7 222.7l0.6-0.1l-11.9-2.4l-0.6 0.1zM1065.4 213.2l6.4-1l-1-0.2l-6.4 1zM1073.2 213.7l0.6-0.1l-10.6-2.1l-0.6 0.1zM1025.3 205.2l6.3-0.8l-0.9-0.2l-6.3 0.9zM1032.5 205.7l0.6-0.1l-9.5-1.9l-0.6 0.1zM1263 246.8l6.2-1.5l-1.6-0.3l-6.2 1.5zM1273.3 247.6l0.6-0.2l-16.4-3.1l-0.6 0.1zM1231.3 240.7l6.2-1.4l-1.4-0.3l-6.3 1.4zM1241.1 241.4l0.6-0.1l-15.3-2.9l-0.6 0.1zM1201.6 235l6.3-1.3l-1.4-0.3l-6.2 1.3zM1211 235.7l0.6-0.2l-14.3-2.7l-0.6 0.1zM1173.8 229.7l6.3-1.3l-1.2-0.2l-6.3 1.2zM1182.8 230.3l0.6-0.1l-13.4-2.6l-0.6 0.1zM1147.7 224.6l6.3-1.1l-1.2-0.2l-6.3 1.1zM1156.4 225.2l0.6-0.1l-12.7-2.4l-0.6 0.1zM1123.2 219.9l6.3-1.1l-1.2-0.2l-6.3 1.1zM1131.4 220.5l0.7-0.2l-12-2.2l-0.6 0.1zM1100 215.4l6.3-1l-1.1-0.2l-6.3 1zM1108 216l0.6-0.1l-11.3-2.2l-0.6 0.1zM1078.1 211.2l6.3-0.9l-1.1-0.2l-6.2 0.9zM1085.8 211.7l0.6-0.1l-10.6-2l-0.6 0.1zM1057.4 207.3l6.2-1l-0.9-0.1l-6.2 0.9zM1064.8 207.7l0.6-0.1l-10-1.9l-0.6 0.1zM1037.8 203.5l6.2-0.9l-0.9-0.2l-6.2 0.9zM1045 203.9l0.6-0.1l-9.6-1.8l-0.6 0.1zM1019.2 199.9l6.1-0.8l-0.8-0.2l-6.1 0.8zM1026.1 200.3l0.6-0.1l-9-1.7l-0.6 0.1zM1243.7 238l6.1-1.4l-1.5-0.3l-6.1 1.4zM1253.4 238.6l0.6-0.1l-15.2-2.8l-0.6 0.1zM1186.3 227.2l6.2-1.1l-1.3-0.3l-6.1 1.2zM1195.2 227.8l0.6-0.1l-13.4-2.5l-0.6 0.1zM1135.6 217.8l6.2-1.1l-1.2-0.2l-6.1 1zM1143.8 218.3l0.6-0.1l-11.9-2.2l-0.6 0.1zM1090.5 209.3l6.1-0.9l-1.1-0.2l-6 0.9zM1098.1 209.8l0.6-0.1l-10.7-2l-0.5 0.1zM1050.1 201.8l6-0.9l-1-0.1l-6 0.8zM1057.1 202.2l0.6-0.1l-9.6-1.8l-0.5 0.1zM1255.8 235.3l5.8-1.3l-1.4-0.3l-5.9 1.3zM1265.4 236l0.5-0.2l-15.2-2.7l-0.5 0.1zM1226.2 229.9l5.9-1.2l-1.3-0.2l-5.9 1.2zM1235.4 230.6l0.6-0.2l-14.3-2.5l-0.6 0.1zM1198.5 224.9l5.9-1.2l-1.3-0.2l-5.9 1.2zM1207.3 225.5l0.6-0.1l-13.5-2.5l-0.5 0.2zM1172.4 220.1l5.9-1l-1.2-0.3l-5.9 1.1zM1180.8 220.7l0.6-0.1l-12.6-2.3l-0.6 0.1zM1147.8 215.7l5.9-1l-1.1-0.2l-6 1zM1155.9 216.2l0.6-0.1l-12-2.2l-0.5 0.1zM1124.5 211.5l6-1l-1.1-0.2l-5.9 1zM1132.4 211.9l0.5 0l-11.2-2.1l-0.6 0.1zM1102.6 207.5l5.9-1l-1.1-0.1l-5.9 0.9zM1110.1 207.9l0.6-0.1l-10.7-1.9l-0.6 0.1zM1081.7 203.7l5.9-0.9l-0.9-0.2l-5.9 0.9zM1089 204.1l0.6-0.1l-10.1-1.8l-0.6 0.1zM1062 200.1l5.8-0.8l-0.9-0.2l-5.8 0.8zM1069 200.5l0.6-0.1l-9.6-1.7l-0.6 0.1zM1043.2 196.7l5.9-0.8l-0.9-0.2l-5.8 0.8zM1050 197.1l0.6-0.1l-9.2-1.6l-0.5 0zM1210.3 222.6l5.8-1.1l-1.3-0.2l-5.8 1.1zM1219 223.2l0.6-0.1l-13.4-2.4l-0.6 0.1zM1159.6 213.6l5.8-0.9l-1.2-0.2l-5.8 0.9zM1167.7 214.2l0.5-0.1l-11.9-2.1l-0.6 0.1zM1114.3 205.6l5.8-0.8l-1.1-0.2l-5.7 0.9zM1121.8 206.1l0.6-0.1l-10.8-1.9l-0.5 0.1zM1073.6 198.5l5.7-0.8l-0.9-0.2l-5.7 0.8zM1080.6 198.9l0.6-0.1l-9.7-1.7l-0.5 0.1zM1249.4 225.2l5.6-1.2l-1.4-0.2l-5.6 1.1zM1258.4 225.7l0.5-0.1l-14.2-2.4l-0.5 0.1zM1221.8 220.4l5.6-1.1l-1.3-0.2l-5.6 1.1zM1230.4 220.9l0.5-0.1l-13.4-2.2l-0.5 0.1zM1195.7 215.9l5.6-1l-1.2-0.2l-5.6 1zM1204 216.4l0.5-0.1l-12.6-2.1l-0.5 0.1zM1171.1 211.7l5.6-1l-1.1-0.2l-5.7 1zM1179.1 212.2l0.5-0.1l-11.9-2.1l-0.6 0.1zM1147.8 207.7l5.6-0.9l-1-0.2l-5.7 0.9zM1155.5 208.1l0.6-0.1l-11.4-1.9l-0.5 0.1zM1125.8 203.9l5.6-0.9l-1-0.2l-5.7 0.9zM1133.2 204.3l0.5-0.1l-10.7-1.8l-0.5 0.1zM1104.9 200.3l5.6-0.8l-1-0.2l-5.6 0.8zM1112 200.7l0.6-0.1l-10.2-1.7l-0.5 0.1zM1085 196.9l5.6-0.8l-1-0.2l-5.5 0.8zM1091.9 197.3l0.6-0.1l-9.7-1.7l-0.5 0.1zM1066.1 193.6l5.6-0.7l-0.9-0.2l-5.6 0.8zM1072.8 194l0.6-0.1l-9.3-1.6l-0.5 0.1zM1232.9 218.2l5.5-1l-1.3-0.2l-5.5 1zM1241.5 218.8l0.5-0.1l-13.4-2.3l-0.5 0.1zM1182.3 209.8l5.5-1l-1.2-0.2l-5.5 1zM1190.2 210.2l0.5-0.1l-11.9-2l-0.5 0.1zM1136.9 202.1l5.5-0.8l-1-0.2l-5.5 0.9zM1144.3 202.6l0.5-0.1l-10.7-1.8l-0.5 0.1zM1096.1 195.3l5.4-0.8l-0.9-0.1l-5.4 0.7zM1103 195.7l0.5-0.1l-9.7-1.6l-0.5 0.1zM1243.8 216.1l5.3-1l-1.3-0.2l-5.3 1zM1252.2 216.7l0.5-0.1l-13.3-2.2l-0.5 0.1zM1217.8 211.9l5.3-1l-1.2-0.2l-5.3 1zM1225.9 212.4l0.5-0.1l-12.6-2.1l-0.5 0.1zM1193.2 207.9l5.3-0.9l-1.1-0.2l-5.4 0.9zM1201.1 208.3l0.5 0l-12-2l-0.5 0.1zM1169.9 204.1l5.4-0.9l-1.1-0.2l-5.4 0.9zM1177.5 204.5l0.5-0.1l-11.3-1.8l-0.5 0.1zM1147.8 200.5l5.4-0.9l-1-0.1l-5.4 0.8zM1155.2 200.9l0.5-0.1l-10.8-1.7l-0.5 0zM1126.9 197l5.3-0.7l-1-0.2l-5.3 0.8zM1133.9 197.4l0.6 0l-10.3-1.7l-0.5 0.1zM1106.9 193.8l5.4-0.8l-1-0.1l-5.3 0.7zM1113.8 194.2l0.5-0.1l-9.7-1.6l-0.5 0.1zM1087.9 190.7l5.4-0.7l-0.9-0.2l-5.3 0.7zM1094.6 191l0.5 0l-9.3-1.5l-0.5 0zM1254.3 214.1l5.2-1l-1.3-0.2l-5.2 1zM1262.7 214.6l0.5-0.1l-13.3-2.1l-0.5 0.1zM1203.8 206l5.2-0.8l-1.1-0.2l-5.2 0.9zM1211.6 206.5l0.5-0.1l-11.9-1.9l-0.5 0.1zM1158.5 198.8l5.2-0.8l-1-0.2l-5.3 0.9zM1165.7 199.2l0.5 0l-10.7-1.8l-0.5 0.1zM1117.5 192.3l5.2-0.7l-0.9-0.2l-5.2 0.7zM1124.3 192.7l0.5-0.1l-9.7-1.6l-0.5 0.1zM1264.6 212.1l5-1l-1.3-0.2l-5 1zM1272.9 212.6l0.5-0.1l-13.3-2l-0.5 0.1zM1238.7 208.1l5.1-0.9l-1.2-0.2l-5.1 0.9zM1246.7 208.6l0.5-0.1l-12.6-2l-0.4 0.1zM1214.2 204.3l5.1-0.9l-1.2-0.2l-5.1 0.9zM1221.9 204.7l0.5-0.1l-11.9-1.8l-0.5 0.1zM1190.9 200.7l5.1-0.9l-1-0.1l-5.1 0.8zM1198.4 201.1l0.5-0.1l-11.3-1.8l-0.5 0.1zM1168.9 197.2l5.1-0.8l-1.1-0.1l-5.1 0.8zM1176.1 197.6l0.5-0.1l-10.8-1.6l-0.5 0zM1147.9 193.9l5.1-0.7l-1-0.2l-5.1 0.8zM1154.8 194.3l0.5 0l-10.2-1.6l-0.5 0zM1127.9 190.8l5.1-0.7l-1-0.1l-5.1 0.7zM1134.6 191.2l0.5-0.1l-9.7-1.5l-0.5 0.1zM1108.8 187.9l5.1-0.7l-0.9-0.2l-5.1 0.7zM1115.4 188.2l0.4-0.1l-9.3-1.4l-0.4 0.1zM1224.3 202.5l5-0.8l-1.2-0.2l-4.9 0.9zM1232 203l0.4-0.1l-11.9-1.8l-0.4 0.1zM1179 195.6l5-0.7l-1-0.2l-5 0.8zM1186.2 196l0.4 0l-10.7-1.7l-0.5 0.1zM1138 189.4l5-0.7l-1-0.1l-4.9 0.7zM1144.7 189.8l0.5-0.1l-9.8-1.5l-0.5 0.1zM1258.6 204.5l4.8-0.9l-1.2-0.2l-4.8 0.9zM1266.5 204.9l0.4-0.1l-12.5-1.8l-0.4 0.1zM1234.2 200.8l4.8-0.8l-1.1-0.2l-4.9 0.9zM1241.8 201.3l0.4-0.1l-11.9-1.8l-0.4 0.1zM1211 197.4l4.8-0.8l-1.1-0.2l-4.8 0.8zM1218.3 197.8l0.5-0.1l-11.3-1.6l-0.5 0zM1188.9 194.1l4.9-0.7l-1.1-0.2l-4.8 0.8zM1196 194.5l0.5-0.1l-10.8-1.6l-0.4 0.1zM1167.9 191l4.9-0.7l-1-0.2l-4.9 0.8zM1174.8 191.4l0.4-0.1l-10.2-1.5l-0.5 0zM1147.9 188l4.9-0.7l-1-0.1l-4.8 0.7zM1154.5 188.4l0.5-0.1l-9.8-1.4l-0.4 0zM1128.8 185.2l4.9-0.7l-0.9-0.1l-4.9 0.7zM1135.2 185.5l0.5 0l-9.3-1.4l-0.5 0zM1110.5 182.5l4.9-0.6l-0.9-0.2l-4.8 0.6zM1116.8 182.8l0.5-0.1l-9-1.3l-0.4 0.1zM1243.8 199.2l4.7-0.8l-1.1-0.2l-4.8 0.8zM1251.3 199.6l0.5-0.1l-11.9-1.7l-0.4 0.1zM1198.6 192.6l4.7-0.7l-1-0.2l-4.7 0.8zM1205.6 193l0.5-0.1l-10.8-1.5l-0.4 0zM1157.6 186.7l4.7-0.7l-0.9-0.1l-4.8 0.6zM1164.2 187l0.4-0.1l-9.7-1.4l-0.5 0.1zM1120.2 181.2l4.7-0.6l-0.8-0.1l-4.8 0.6zM1126.4 181.5l0.5 0l-9-1.3l-0.4 0.1zM1253.2 197.6l4.6-0.8l-1.1-0.2l-4.7 0.8zM1260.7 198l0.4-0.1l-11.8-1.7l-0.5 0.1zM1230.1 194.3l4.6-0.8l-1.1-0.1l-4.6 0.7zM1237.3 194.7l0.4-0.1l-11.2-1.6l-0.5 0.1zM1208 191.2l4.7-0.8l-1-0.1l-4.7 0.7zM1215 191.5l0.5 0l-10.8-1.6l-0.4 0.1zM1187.1 188.2l4.6-0.7l-1-0.1l-4.6 0.6zM1193.8 188.5l0.5 0l-10.3-1.5l-0.4 0.1zM1167 185.3l4.7-0.6l-0.9-0.2l-4.7 0.7zM1173.6 185.7l0.4-0.1l-9.7-1.4l-0.5 0.1zM1147.9 182.6l4.7-0.6l-0.9-0.1l-4.7 0.6zM1154.3 182.9l0.4 0l-9.3-1.3l-0.5 0zM1129.6 180l4.7-0.6l-0.9-0.1l-4.6 0.6zM1135.8 180.3l0.4 0l-8.9-1.3l-0.4 0.1zM1262.4 196l4.5-0.8l-1.2-0.1l-4.5 0.7zM1269.8 196.4l0.4-0.1l-11.8-1.6l-0.4 0.1zM1217.3 189.7l4.5-0.7l-1-0.1l-4.5 0.7zM1224.2 190.1l0.5-0.1l-10.8-1.5l-0.4 0.1zM1176.3 184l4.6-0.6l-1-0.1l-4.5 0.6zM1182.8 184.4l0.5-0.1l-9.8-1.4l-0.5 0.1zM1138.9 178.8l4.5-0.6l-0.8-0.1l-4.6 0.6zM1145 179.1l0.4 0l-8.9-1.3l-0.4 0.1zM1248.3 191.3l4.4-0.7l-1.1-0.1l-4.4 0.7zM1255.4 191.7l0.4-0.1l-11.2-1.5l-0.4 0.1zM1226.3 188.3l4.5-0.7l-1.1-0.1l-4.4 0.7zM1233.2 188.7l0.4-0.1l-10.7-1.4l-0.4 0zM1205.4 185.5l4.4-0.7l-0.9-0.1l-4.5 0.6zM1212 185.8l0.5 0l-10.2-1.4l-0.5 0zM1185.4 182.8l4.4-0.7l-0.9-0.1l-4.5 0.6zM1191.8 183.1l0.5-0.1l-9.8-1.3l-0.4 0.1zM1166.2 180.2l4.5-0.6l-0.9-0.2l-4.5 0.6zM1172.5 180.5l0.4-0.1l-9.3-1.3l-0.4 0.1zM1147.9 177.7l4.5-0.6l-0.9-0.1l-4.4 0.5zM1154 178l0.5-0.1l-9-1.2l-0.4 0zM1235.2 187l4.3-0.7l-1-0.1l-4.4 0.6zM1242 187.3l0.4-0.1l-10.7-1.4l-0.4 0.1zM1194.2 181.5l4.4-0.6l-0.9-0.1l-4.4 0.6zM1200.7 181.8l0.4 0l-9.8-1.3l-0.4 0zM1156.8 176.5l4.4-0.5l-0.9-0.2l-4.3 0.6zM1162.9 176.8l0.4-0.1l-9-1.1l-0.4 0zM1265.7 188.5l4.2-0.7l-1.1-0.1l-4.2 0.6zM1272.7 188.8l0.4 0l-11.2-1.5l-0.4 0.1zM1243.8 185.6l4.3-0.6l-1.1-0.2l-4.2 0.7zM1250.6 186l0.4-0.1l-10.7-1.4l-0.4 0.1zM1222.9 182.9l4.3-0.6l-1-0.2l-4.3 0.7zM1229.5 183.2l0.4 0l-10.2-1.4l-0.4 0.1zM1202.9 180.3l4.3-0.6l-0.9-0.1l-4.3 0.6zM1209.3 180.6l0.4-0.1l-9.7-1.2l-0.4 0zM1183.8 177.8l4.3-0.6l-0.9-0.1l-4.3 0.6zM1190 178.1l0.4-0.1l-9.3-1.2l-0.4 0.1zM1165.5 175.4l4.3-0.6l-0.9-0.1l-4.2 0.6zM1171.5 175.7l0.4-0.1l-8.9-1.1l-0.4 0zM1252.3 184.3l4.1-0.6l-1-0.2l-4.1 0.7zM1259 184.6l0.4 0l-10.6-1.4l-0.4 0.1zM1211.5 179.1l4.1-0.6l-0.9-0.1l-4.2 0.6zM1217.8 179.4l0.4-0.1l-9.8-1.2l-0.4 0zM1174 174.3l4.2-0.5l-0.8-0.1l-4.2 0.5zM1180 174.6l0.4-0.1l-8.9-1.1l-0.4 0zM1260.6 183l4-0.6l-1-0.1l-4.1 0.6zM1267.2 183.4l0.4-0.1l-10.6-1.3l-0.4 0zM1239.7 180.4l4.1-0.6l-1-0.1l-4 0.6zM1246.2 180.7l0.4 0l-10.2-1.3l-0.4 0.1zM1219.8 177.9l4.1-0.6l-0.9-0.1l-4.1 0.6zM1226.1 178.2l0.4 0l-9.8-1.3l-0.4 0.1zM1200.7 175.5l4.1-0.5l-0.9-0.1l-4.1 0.5zM1206.8 175.8l0.4-0.1l-9.3-1.1l-0.4 0zM1182.4 173.2l4.1-0.5l-0.8-0.1l-4.2 0.5zM1188.3 173.5l0.4-0.1l-8.9-1.1l-0.4 0.1zM1228 176.8l4-0.6l-0.9-0.1l-4.1 0.6zM1234.2 177.1l0.4-0.1l-9.7-1.2l-0.4 0.1zM1190.6 172.2l4-0.6l-0.8-0.1l-4.1 0.6zM1196.5 172.4l0.4 0l-9-1.1l-0.3 0z"/>
</g>
<path fill="none" stroke="#ececf4" stroke-opacity="0.55" stroke-width="0.3" d="M-17.6 161.2L-8.7 160.8M-5.7 162.2L3.2 161.7M6.4 163.1L15.3 162.7M12 161.3L20.7 160.9M17.4 159.6L26 159.1M18.7 164.1L27.6 163.7M29.4 160.5L38 160.1M36.5 163.2L45.3 162.8M41.6 161.4L50.2 161M46.5 159.6L55 159.2M51.2 158L59.5 157.6M54.1 162.4L62.7 161.9M63.3 158.8L71.6 158.4M62 165.2L70.9 164.8M66.7 163.3L75.4 162.9M71.3 161.5L79.8 161.1M75.6 159.7L84 159.3M79.9 158L88 157.6M83.9 156.4L91.9 156M79.7 164.3L88.4 163.9M88.2 160.7L96.6 160.2M96.1 157.3L104.1 156.9M88.6 167.3L97.5 166.8M92.9 165.3L101.6 164.9M97 163.4L105.6 163M101 161.6L109.4 161.2M104.8 159.8L113.1 159.4M108.5 158.1L116.6 157.7M112.1 156.5L120 156.1M115.6 154.9L123.3 154.5M106.4 166.4L115.1 165.9M114.1 162.6L122.5 162.1M121.2 159L129.3 158.6M127.8 155.7L135.6 155.4M116.3 169.5L125.3 169M120.1 167.4L128.9 166.9M123.8 165.4L132.4 165M127.4 163.5L135.8 163.1M130.8 161.7L139.1 161.3M134.1 159.9L142.2 159.5M137.3 158.2L145.2 157.8M140.3 156.6L148.1 156.2M143.3 155L151 154.6M146.2 153.4L153.7 153.1M134.2 168.5L143 168M140.9 164.5L149.4 164.1M147.2 160.8L155.4 160.4M153.1 157.4L160.9 157M158.5 154.2L166.1 153.9M148.5 169.6L157.3 169.1M151.7 167.5L160.4 167M154.8 165.5L163.3 165.1M157.8 163.6L166.1 163.2M160.6 161.8L168.8 161.4M163.4 160L171.4 159.6M166.1 158.3L173.9 157.9M168.6 156.7L176.3 156.3M171.1 155.1L178.7 154.7M173.5 153.5L180.9 153.2M175.8 152L183.1 151.7M163.1 170.7L172 170.2M168.9 166.6L177.4 166.1M174.3 162.7L182.5 162.3M179.3 159.2L187.1 158.8M183.9 155.9L191.5 155.5M188.3 152.8L195.5 152.5M178.1 171.8L187 171.3M180.8 169.7L189.5 169.2M183.4 167.6L191.9 167.2M185.8 165.6L194.2 165.2M188.2 163.7L196.4 163.3M190.5 161.9L198.6 161.5M192.8 160.1L200.6 159.7M194.9 158.4L202.6 158M197 156.7L204.5 156.4M199 155.1L206.4 154.8M200.9 153.6L208.2 153.2M202.8 152.1L209.9 151.8M204.6 150.7L211.6 150.3M193.3 173L202.3 172.5M198.1 168.7L206.6 168.2M202.4 164.7L210.6 164.3M206.5 161L214.4 160.6M210.3 157.6L217.8 157.2M213.8 154.4L221.1 154M217 151.4L224.1 151.1M209 174.2L217.9 173.7M211.1 172L219.8 171.4M213.1 169.8L221.7 169.3M215.1 167.7L223.4 167.3M217 165.7L225.2 165.3M218.8 163.8L226.8 163.4M220.5 162L228.4 161.6M222.2 160.2L229.9 159.8M223.8 158.5L231.4 158.1M225.4 156.8L232.8 156.4M226.9 155.2L234.2 154.9M228.3 153.7L235.5 153.3M229.7 152.2L236.8 151.8M231.1 150.7L238.1 150.4M232.4 149.4L239.3 149M224.9 175.4L233.9 174.9M228.5 170.9L237 170.4M231.7 166.8L240 166.3M234.8 162.9L242.7 162.5M237.6 159.4L245.2 159M240.2 156.1L247.6 155.7M242.7 153L249.7 152.6M245 150.1L251.8 149.8M241.2 176.7L250.2 176.1M242.7 174.3L251.5 173.8M244.2 172.1L252.7 171.6M245.5 169.9L253.9 169.4M246.9 167.8L255.1 167.4M248.1 165.8L256.2 165.4M249.3 163.9L257.3 163.5M250.5 162.1L258.3 161.6M251.7 160.3L259.3 159.9M252.8 158.6L260.2 158.2M253.8 156.9L261.2 156.5M254.8 155.3L262.1 154.9M255.8 153.8L262.9 153.4M256.8 152.3L263.7 151.9M257.7 150.8L264.5 150.5M258.6 149.4L265.3 149.1M259.4 148.1L266.1 147.8M260.2 173.3L268.8 172.7M262.3 168.9L270.5 168.4M264.2 164.9L272.1 164.5M266 161.2L273.6 160.8M267.7 157.8L275 157.4M269.2 154.6L276.3 154.2M270.7 151.6L277.5 151.2M272 148.8L278.6 148.5M275.8 176.8L284.6 176.2M276.6 174.5L285.2 173.9M277.3 172.2L285.7 171.7M278 170L286.3 169.5M278.7 168L286.8 167.5M279.4 166L287.3 165.5M280 164L287.8 163.6M280.6 162.2L288.3 161.7M281.2 160.4L288.7 160M281.8 158.7L289.1 158.3M282.3 157L289.5 156.6M282.8 155.4L290 155M283.4 153.8L290.3 153.5M283.8 152.3L290.7 152M284.3 150.9L291.1 150.6M284.8 149.5L291.4 149.2M285.2 148.1L291.8 147.8M285.7 146.8L292.1 146.5M293.3 175.7L301.9 175.1M294.1 171.2L302.4 170.7M294.8 167L302.8 166.5M295.5 163.1L303.2 162.7M296.1 159.6L303.5 159.2M296.7 156.2L303.8 155.9M297.3 153.1L304.1 152.8M297.8 150.2L304.4 149.9M298.3 147.5L304.7 147.2M310.4 179.4L319.2 178.8M310.4 176.9L319 176.4M310.5 174.6L318.9 174M310.5 172.3L318.8 171.8M310.6 170.1L318.7 169.6M310.6 168.1L318.6 167.6M310.7 166.1L318.5 165.6M310.7 164.1L318.4 163.7M310.7 162.3L318.3 161.8M310.8 160.5L318.2 160.1M310.8 158.8L318.1 158.4M310.9 157.1L318 156.7M310.9 155.5L317.9 155.1M310.9 153.9L317.8 153.6M311 152.4L317.7 152.1M311 151L317.7 150.6M311 149.6L317.6 149.2M311.1 148.2L317.5 147.9M311.1 146.9L317.4 146.6M311.1 145.6L317.4 145.3M327.9 178.2L336.6 177.6M327.3 173.5L335.6 173M326.7 169.1L334.7 168.7M326.2 165.1L333.9 164.7M325.7 161.4L333.1 161M325.3 158L332.4 157.6M324.8 154.7L331.7 154.4M324.5 151.7L331.1 151.4M324.1 148.9L330.5 148.6M323.7 146.3L330 146M346.6 182.1L355.4 181.5M345.8 179.5L354.5 178.9M345.1 177.1L353.6 176.5M344.4 174.7L352.7 174.2M343.8 172.4L351.9 171.9M343.2 170.3L351.2 169.8M342.6 168.2L350.4 167.7M342 166.2L349.7 165.7M341.5 164.2L349 163.8M340.9 162.4L348.3 161.9M340.4 160.6L347.7 160.2M339.9 158.8L347.1 158.4M339.5 157.2L346.5 156.8M339 155.6L345.9 155.2M338.6 154L345.3 153.6M338.1 152.5L344.8 152.2M337.7 151.1L344.3 150.7M337.3 149.6L343.8 149.3M336.9 148.3L343.3 148M336.6 147L342.8 146.7M336.2 145.7L342.4 145.4M335.9 144.4L341.9 144.2M364.1 180.9L372.8 180.3M362 175.9L370.3 175.4M360 171.4L368 170.9M358.2 167.2L365.8 166.7M356.5 163.3L363.9 162.9M354.9 159.7L362 159.3M353.4 156.4L360.3 156M352.1 153.3L358.7 152.9M350.8 150.4L357.3 150M349.6 147.7L355.9 147.3M348.5 145.1L354.6 144.8M384.5 184.9L393.3 184.3M382.9 182.2L391.6 181.6M381.4 179.7L389.9 179.1M379.9 177.2L388.2 176.6M378.5 174.8L386.7 174.3M377.2 172.6L385.2 172M375.9 170.4L383.7 169.9M374.6 168.3L382.3 167.8M373.5 166.3L381 165.8M372.3 164.3L379.7 163.9M371.2 162.5L378.5 162M370.1 160.7L377.3 160.3M369.1 158.9L376.1 158.5M368.1 157.3L375 156.9M367.2 155.6L374 155.3M366.3 154.1L372.9 153.7M365.4 152.6L371.9 152.2M364.5 151.1L371 150.8M363.7 149.7L370 149.4M362.9 148.4L369.1 148M362.1 147L368.2 146.7M361.3 145.7L367.4 145.5M360.6 144.5L366.6 144.2M359.9 143.3L365.8 143M402.1 183.7L410.8 183M398.2 178.5L406.6 177.9M394.7 173.7L402.7 173.2M391.5 169.4L399.1 168.9M388.5 165.3L395.9 164.9M385.7 161.6L392.8 161.2M383.1 158.1L390 157.7M380.7 154.9L387.4 154.5M378.4 151.9L384.9 151.5M376.3 149.1L382.6 148.7M374.4 146.4L380.4 146.1M372.5 143.9L378.4 143.6M424.3 187.9L433.2 187.2M421.8 185.1L430.4 184.4M419.3 182.4L427.8 181.8M417 179.8L425.3 179.2M414.8 177.3L422.9 176.7M412.6 174.9L420.6 174.4M410.6 172.7L418.4 172.1M408.6 170.5L416.3 170M406.8 168.4L414.3 167.9M404.9 166.4L412.3 165.9M403.2 164.4L410.5 164M401.5 162.6L408.7 162.1M399.9 160.8L406.9 160.3M398.3 159L405.2 158.6M396.8 157.4L403.6 157M395.4 155.7L402.1 155.4M394 154.2L400.6 153.8M392.6 152.7L399.1 152.3M391.3 151.2L397.7 150.9M390.1 149.8L396.3 149.5M388.8 148.4L395 148.1M387.6 147.1L393.7 146.8M386.5 145.8L392.5 145.5M385.4 144.6L391.3 144.3M384.3 143.4L390.1 143.1M383.2 142.2L389 141.9M441.9 186.6L450.6 185.9M436.2 181.1L444.5 180.5M431 176.2L439 175.6M426.2 171.6L433.9 171.1M421.8 167.4L429.2 166.9M417.7 163.5L424.8 163.1M413.9 159.9L420.8 159.5M410.4 156.6L417 156.2M407.1 153.5L413.5 153.1M404 150.5L410.3 150.2M401.1 147.8L407.2 147.5M398.4 145.2L404.3 144.9M395.9 142.8L401.6 142.5M466.1 191.1L475 190.3M462.5 188.1L471.2 187.4M459.1 185.2L467.6 184.6M455.8 182.5L464.1 181.9M452.7 179.9L460.9 179.3M449.7 177.4L457.7 176.9M446.9 175.1L454.7 174.5M444.1 172.8L451.8 172.3M441.5 170.6L449 170.1M438.9 168.5L446.3 168M436.5 166.5L443.8 166M434.2 164.5L441.3 164.1M431.9 162.7L438.9 162.2M429.7 160.9L436.6 160.4M427.6 159.1L434.4 158.7M425.6 157.4L432.3 157M423.7 155.8L430.2 155.4M421.8 154.3L428.2 153.9M420 152.7L426.3 152.4M418.2 151.3L424.5 150.9M416.5 149.9L422.7 149.5M414.8 148.5L420.9 148.2M413.2 147.2L419.2 146.9M411.7 145.9L417.6 145.6M410.2 144.6L416 144.3M408.7 143.4L414.5 143.1M407.3 142.3L413 142M405.9 141.1L411.5 140.9M483.7 189.6L492.3 188.9M476 183.9L484.3 183.3M468.9 178.7L476.9 178.2M462.4 174L470.1 173.4M456.5 169.6L463.9 169.1M451 165.5L458.1 165.1M445.9 161.8L452.8 161.4M441.1 158.3L447.8 157.9M436.7 155.1L443.2 154.7M432.6 152L438.9 151.7M428.8 149.2L434.9 148.9M425.2 146.6L431.1 146.3M421.8 144.1L427.5 143.8M418.6 141.7L424.2 141.4M510.1 194.3L518.9 193.6M505.4 191.2L514 190.5M500.9 188.2L509.3 187.5M496.6 185.4L504.8 184.7M492.5 182.7L500.6 182M488.5 180.1L496.5 179.5M484.8 177.6L492.6 177M481.2 175.2L488.8 174.6M477.7 172.9L485.2 172.4M474.4 170.7L481.8 170.2M471.2 168.6L478.4 168.1M468.1 166.6L475.3 166.1M465.2 164.6L472.2 164.2M462.3 162.8L469.2 162.3M459.6 160.9L466.4 160.5M457 159.2L463.6 158.8M454.4 157.5L461 157.1M452 155.9L458.4 155.5M449.6 154.3L456 154M447.3 152.8L453.6 152.5M445.1 151.4L451.3 151M443 149.9L449 149.6M440.9 148.6L446.9 148.2M438.9 147.2L444.8 146.9M436.9 146L442.7 145.7M435 144.7L440.8 144.4M433.2 143.5L438.9 143.2M431.4 142.3L437 142M429.7 141.2L435.2 140.9M428 140.1L433.5 139.8M527.6 192.8L536.2 192.1M517.7 186.9L525.9 186.2M508.6 181.4L516.5 180.8M500.3 176.4L507.9 175.9M492.7 171.9L500 171.3M485.6 167.6L492.8 167.2M479.1 163.7L486 163.3M473.1 160.1L479.8 159.7M467.5 156.8L473.9 156.4M462.3 153.6L468.5 153.3M457.4 150.7L463.5 150.3M452.8 147.9L458.7 147.6M448.5 145.4L454.2 145.1M444.5 142.9L450.1 142.7M440.7 140.6L446.1 140.4M562.8 201.3L571.7 200.4M556.4 197.8L565.2 197M550.4 194.5L559 193.8M544.7 191.4L553.1 190.7M539.3 188.4L547.5 187.7M534.1 185.5L542.2 184.9M529.1 182.8L537.1 182.2M524.4 180.2L532.2 179.6M519.9 177.7L527.5 177.1M515.5 175.3L523 174.8M511.3 173L518.7 172.5M507.3 170.8L514.6 170.3M503.5 168.7L510.6 168.2M499.8 166.7L506.8 166.2M496.3 164.7L503.1 164.3M492.8 162.9L499.6 162.4M489.5 161L496.2 160.6M486.4 159.3L492.9 158.9M483.3 157.6L489.8 157.2M480.3 156L486.7 155.6M477.5 154.4L483.7 154.1M474.7 152.9L480.9 152.5M472.1 151.4L478.1 151.1M469.5 150L475.5 149.7M467 148.6L472.9 148.3M464.6 147.3L470.4 147M462.2 146L467.9 145.7M459.9 144.8L465.6 144.5M457.7 143.6L463.3 143.3M455.6 142.4L461.1 142.1M453.5 141.2L458.9 141M451.5 140.1L456.8 139.9M449.5 139L454.8 138.8M587.6 203.2L596.5 202.3M573.9 196.2L582.4 195.5M561.5 189.9L569.7 189.2M550.2 184.2L558.1 183.6M539.9 179L547.5 178.4M530.4 174.2L537.8 173.7M521.8 169.8L528.9 169.3M513.7 165.8L520.6 165.3M506.3 162L513 161.6M499.4 158.5L505.9 158.1M493 155.2L499.2 154.9M487 152.2L493.1 151.9M481.4 149.4L487.3 149M476.1 146.7L481.9 146.4M471.2 144.2L476.8 143.9M466.5 141.8L472 141.6M462.2 139.6L467.4 139.4M613.1 205.1L622 204.3M605.3 201.5L614 200.6M597.9 198L606.4 197.2M590.9 194.7L599.2 193.9M584.2 191.5L592.4 190.8M577.8 188.5L585.9 187.9M571.7 185.7L579.6 185M565.9 183L573.7 182.3M560.4 180.3L568 179.7M555.1 177.8L562.5 177.3M550 175.4L557.3 174.9M545.1 173.1L552.3 172.6M540.4 170.9L547.5 170.4M535.9 168.8L542.9 168.3M531.6 166.8L538.4 166.3M527.4 164.8L534.1 164.4M523.4 163L530 162.5M519.5 161.1L526.1 160.7M515.8 159.4L522.3 159M512.2 157.7L518.6 157.3M508.8 156.1L515 155.7M505.4 154.5L511.6 154.1M502.2 153L508.2 152.6M499.1 151.5L505 151.2M496 150.1L501.9 149.8M493.1 148.7L498.9 148.4M490.3 147.4L496 147.1M487.5 146.1L493.2 145.8M484.9 144.8L490.4 144.5M482.3 143.6L487.8 143.3M479.8 142.4L485.2 142.2M477.3 141.3L482.7 141M475 140.2L480.3 139.9M472.7 139.1L477.9 138.9M470.5 138.1L475.6 137.8M639.3 207.1L648.2 206.2M622.6 199.8L631.1 199M607.5 193.2L615.7 192.4M593.8 187.2L601.7 186.5M581.3 181.7L588.9 181.1M569.9 176.7L577.2 176.1M559.4 172.1L566.5 171.6M549.8 167.9L556.6 167.4M540.8 163.9L547.5 163.5M532.5 160.3L539 159.9M524.8 156.9L531.1 156.5M517.7 153.8L523.7 153.4M511 150.8L516.8 150.5M504.7 148.1L510.4 147.8M498.8 145.5L504.3 145.2M493.2 143.1L498.6 142.8M488 140.8L493.3 140.5M483.1 138.6L488.2 138.4M648 201.7L656.4 200.8M639.5 198.2L647.8 197.4M631.4 194.9L639.6 194.1M623.7 191.7L631.7 191M616.4 188.7L624.3 188M609.5 185.8L617.2 185.2M602.8 183.1L610.3 182.5M596.4 180.5L603.8 179.9M590.3 178L597.6 177.4M584.5 175.6L591.7 175M578.9 173.3L585.9 172.7M573.5 171.1L580.4 170.5M568.3 168.9L575.2 168.4M563.4 166.9L570.1 166.4M558.6 164.9L565.2 164.5M554 163.1L560.5 162.6M549.6 161.2L556 160.8M545.3 159.5L551.6 159.1M541.2 157.8L547.4 157.4M537.2 156.2L543.4 155.8M533.4 154.6L539.5 154.2M529.7 153.1L535.7 152.7M526.1 151.6L532 151.2M522.7 150.2L528.4 149.8M519.3 148.8L525 148.5M516.1 147.4L521.7 147.1M512.9 146.2L518.5 145.9M509.9 144.9L515.3 144.6M506.9 143.7L512.3 143.4M504 142.5L509.4 142.2M501.2 141.4L506.5 141.1M498.5 140.2L503.7 140M495.9 139.2L501 138.9M493.3 138.1L498.4 137.9M490.8 137.1L495.9 136.8M656 196.6L664.1 195.8M639.6 190.3L647.4 189.6M624.8 184.5L632.3 183.9M611.2 179.3L618.5 178.7M598.8 174.5L605.8 173.9M587.3 170L594.1 169.5M576.8 166L583.4 165.5M567 162.2L573.4 161.8M557.9 158.7L564.1 158.3M549.4 155.4L555.5 155M541.6 152.4L547.4 152M534.2 149.5L539.9 149.2M527.3 146.8L532.8 146.5M520.8 144.3L526.2 144M514.7 142L519.9 141.7M508.9 139.7L514 139.5M503.4 137.6L508.5 137.4M672.1 195L680 194.3M663.4 191.9L671.2 191.1M655.1 188.9L662.8 188.2M647.3 186L654.8 185.3M639.7 183.2L647.1 182.6M632.6 180.6L639.8 180M625.7 178.1L632.8 177.5M619.1 175.7L626.1 175.1M612.8 173.4L619.7 172.9M606.7 171.2L613.5 170.7M600.9 169L607.5 168.6M595.3 167L601.8 166.5M589.9 165L596.4 164.6M584.7 163.1L591.1 162.7M579.7 161.3L586 160.9M574.9 159.6L581.1 159.2M570.3 157.9L576.4 157.5M565.8 156.2L571.8 155.9M561.5 154.7L567.4 154.3M557.3 153.1L563.1 152.8M553.2 151.7L559 151.3M549.3 150.2L555 149.9M545.5 148.9L551.1 148.5M541.9 147.5L547.4 147.2M538.3 146.2L543.8 145.9M534.9 145L540.3 144.7M531.5 143.7L536.9 143.5M528.3 142.6L533.5 142.3M525.1 141.4L530.3 141.1M522.1 140.3L527.2 140M519.1 139.2L524.2 139M516.2 138.2L521.2 137.9M513.4 137.1L518.4 136.9M510.7 136.1L515.6 135.9M687.8 193.5L695.5 192.8M670.3 187.5L677.8 186.8M654.4 182L661.6 181.4M639.9 176.9L646.8 176.4M626.5 172.3L633.2 171.8M614.2 168.1L620.7 167.6M602.8 164.1L609.1 163.7M592.2 160.5L598.4 160.1M582.4 157.1L588.4 156.7M573.3 153.9L579.1 153.6M564.7 151L570.4 150.6M556.7 148.2L562.2 147.9M549.2 145.6L554.6 145.3M542.1 143.2L547.4 142.9M535.5 140.9L540.6 140.6M529.2 138.7L534.2 138.5M523.3 136.7L528.2 136.4M694 189L701.4 188.3M685.2 186.1L692.5 185.5M676.8 183.4L684 182.7M668.8 180.7L675.8 180.1M661.1 178.2L668.1 177.6M653.8 175.8L660.6 175.3M646.7 173.5L653.4 173M639.9 171.3L646.6 170.8M633.5 169.2L640 168.7M627.2 167.1L633.7 166.6M621.2 165.1L627.6 164.7M615.4 163.2L621.7 162.8M609.9 161.4L616 161M604.5 159.7L610.6 159.3M599.4 158L605.3 157.6M594.4 156.3L600.3 155.9M589.5 154.7L595.4 154.4M584.9 153.2L590.6 152.9M580.4 151.7L586 151.4M576 150.3L581.6 150M571.8 148.9L577.3 148.6M567.7 147.6L573.2 147.3M563.8 146.3L569.1 146M559.9 145L565.2 144.7M556.2 143.8L561.4 143.5M552.6 142.6L557.8 142.3M549.1 141.5L554.2 141.2M545.7 140.4L550.7 140.1M542.4 139.3L547.4 139M539.2 138.2L544.1 138M536 137.2L540.9 137M539.3 137.3L537.7 136.8M533 136.2L537.8 136M536.2 136.3L534.7 135.8M530 135.2L534.8 135M533.2 135.4L531.7 134.9M699.7 184.8L706.9 184.2M682.8 179.5L689.8 178.9M667.4 174.7L674.1 174.2M653.2 170.3L659.7 169.8M640 166.2L646.4 165.7M627.9 162.4L634 161.9M616.6 158.9L622.6 158.5M606.1 155.6L611.9 155.2M596.3 152.5L602 152.2M587.2 149.7L592.7 149.3M578.6 147L583.9 146.7M570.5 144.4L575.7 144.2M562.9 142.1L568 141.8M555.8 139.8L560.7 139.6M549 137.7L553.9 137.5M552.3 137.9L550.6 137.4M542.6 135.7L547.4 135.5M545.8 135.9L544.2 135.4M713.9 183.5L720.9 182.9M705.1 180.9L712 180.3M696.6 178.4L703.4 177.8M688.5 175.9L695.2 175.4M680.7 173.6L687.3 173.1M673.3 171.4L679.8 170.9M666.1 169.3L672.5 168.8M659.2 167.2L665.5 166.7M652.6 165.2L658.8 164.8M646.3 163.3L652.4 162.9M640.1 161.5L646.1 161.1M634.2 159.8L640.2 159.3M628.5 158.1L634.4 157.7M623 156.4L628.8 156M617.7 154.8L623.4 154.5M612.5 153.3L618.2 152.9M607.6 151.8L613.1 151.5M602.8 150.4L608.3 150.1M598.1 149L603.5 148.7M593.6 147.7L599 147.3M589.3 146.4L594.5 146.1M585 145.1L590.2 144.8M580.9 143.9L586.1 143.6M576.9 142.7L582 142.4M573.1 141.5L578.1 141.3M569.3 140.4L574.3 140.2M565.7 139.3L570.6 139.1M562.1 138.3L567 138M565.5 138.4L563.7 137.9M558.7 137.2L563.5 137M562 137.4L560.3 136.9M555.3 136.2L560.1 136M558.6 136.4L556.9 135.9M552.1 135.3L556.8 135M555.3 135.4L553.6 134.9M548.9 134.3L553.6 134.1M552 134.5L550.5 134M727.8 182.3L734.7 181.6M710.1 177.2L716.8 176.6M693.8 172.6L700.3 172M678.8 168.3L685.1 167.8M665 164.3L671.1 163.9M652.1 160.7L658.1 160.3M640.2 157.3L646 156.9M629.1 154.1L634.7 153.7M618.7 151.1L624.1 150.8M608.9 148.4L614.3 148M599.8 145.8L605 145.5M591.2 143.3L596.3 143M583.1 141L588.1 140.7M575.5 138.8L580.3 138.6M578.8 139L577 138.4M568.3 136.8L573 136.5M571.5 136.9L569.8 136.4M561.4 134.8L566.1 134.6M564.6 134.9L562.9 134.5M732.2 178.5L738.8 177.9M723.3 176.1L729.9 175.5M714.8 173.7L721.3 173.2M706.7 171.5L713 171M698.8 169.4L705.1 168.9M691.3 167.3L697.5 166.9M684.1 165.3L690.2 164.9M677.1 163.4L683.1 163M670.4 161.6L676.3 161.2M663.9 159.8L669.8 159.4M657.7 158.1L663.5 157.7M651.7 156.5L657.4 156.1M645.9 154.9L651.5 154.5M640.3 153.4L645.8 153M634.8 151.9L640.3 151.6M629.6 150.5L635 150.1M624.5 149.1L629.8 148.8M619.6 147.7L624.8 147.4M614.8 146.4L620 146.1M610.2 145.2L615.3 144.9M605.7 143.9L610.8 143.7M601.3 142.7L606.3 142.5M597.1 141.6L602.1 141.3M593 140.5L597.9 140.2M589 139.4L593.9 139.1M592.4 139.5L590.5 139M585.2 138.3L589.9 138.1M588.5 138.5L586.6 137.9M581.4 137.3L586.1 137.1M584.7 137.4L582.8 136.9M577.7 136.3L582.4 136.1M581 136.4L579.2 135.9M574.2 135.3L578.8 135.1M577.4 135.5L575.6 135M570.7 134.4L575.3 134.2M573.8 134.5L572.1 134M567.3 133.5L571.8 133.2M570.4 133.6L568.7 133.1M736.3 175L742.7 174.4M719.3 170.5L725.5 170M703.6 166.4L709.6 165.9M689 162.6L694.9 162.1M675.5 159L681.3 158.6M663 155.7L668.6 155.4M651.3 152.7L656.7 152.3M640.3 149.8L645.6 149.5M630 147.1L635.2 146.8M620.4 144.6L625.5 144.3M611.3 142.2L616.3 141.9M602.8 140L607.6 139.7M606.2 140.1L604.1 139.6M594.7 137.8L599.4 137.6M598 138L596.1 137.5M587.1 135.8L591.7 135.6M590.3 136L588.4 135.5M579.8 133.9L584.3 133.7M583 134.1L581.2 133.6M758.2 176.2L764.6 175.6M749 173.9L755.3 173.3M740.2 171.6L746.3 171.1M731.6 169.5L737.7 169M723.5 167.4L729.5 167M715.6 165.5L721.5 165M708 163.5L713.9 163.1M700.8 161.7L706.5 161.3M693.7 159.9L699.4 159.5M687 158.2L692.6 157.8M680.4 156.6L686 156.2M674.1 155L679.6 154.6M668 153.5L673.4 153.1M662.1 152L667.5 151.6M656.4 150.5L661.7 150.2M650.9 149.1L656.1 148.8M645.6 147.8L650.7 147.5M640.4 146.5L645.5 146.2M635.4 145.2L640.4 144.9M630.5 144L635.5 143.7M625.8 142.8L630.7 142.5M621.2 141.7L626 141.4M624.8 141.8L622.5 141.2M616.7 140.5L621.5 140.3M620.2 140.7L618 140.1M612.4 139.4L617.2 139.2M615.9 139.6L613.7 139.1M608.2 138.4L612.9 138.1M611.6 138.5L609.5 138M604.1 137.4L608.8 137.1M607.5 137.5L605.4 137M600.1 136.4L604.7 136.1M603.4 136.5L601.5 136M596.3 135.4L600.8 135.2M599.5 135.5L597.6 135M592.5 134.4L597 134.2M595.7 134.6L593.8 134.1M588.8 133.5L593.3 133.3M592 133.6L590.2 133.2M585.3 132.6L589.7 132.4M588.4 132.7L586.6 132.3M761.5 172.8L767.6 172.3M743.8 168.5L749.8 168M727.4 164.5L733.3 164.1M712.3 160.9L718 160.4M698.2 157.4L703.7 157.1M685.1 154.3L690.5 153.9M672.8 151.3L678.1 150.9M661.3 148.5L666.5 148.2M650.5 145.9L655.6 145.6M640.4 143.4L645.3 143.2M630.9 141.1L635.7 140.9M634.5 141.3L632.1 140.7M621.9 138.9L626.6 138.7M625.4 139.1L623.2 138.6M613.4 136.9L618 136.6M616.7 137L614.7 136.5M605.4 134.9L609.9 134.7M608.6 135.1L606.6 134.6M597.7 133.1L602.1 132.9M600.9 133.2L599 132.7M773.7 171.8L779.7 171.2M764.5 169.6L770.5 169.1M755.7 167.5L761.6 167.1M747.2 165.6L753 165.1M739 163.6L744.8 163.2M731.2 161.8L736.8 161.4M723.6 160L729.2 159.6M716.3 158.3L721.8 157.9M709.2 156.7L714.7 156.3M702.4 155.1L707.8 154.7M695.8 153.5L701.1 153.2M689.5 152.1L694.7 151.7M683.3 150.6L688.5 150.3M677.3 149.2L682.5 148.9M671.6 147.9L676.7 147.6M666 146.6L671 146.3M660.6 145.3L665.5 145M655.3 144.1L660.2 143.8M650.2 142.9L655.1 142.6M653.9 143L651.4 142.4M645.3 141.7L650.1 141.4M648.9 141.9L646.5 141.3M640.5 140.6L645.2 140.3M644 140.7L641.7 140.2M635.8 139.5L640.5 139.2M639.3 139.6L637 139.1M631.3 138.4L635.9 138.2M634.7 138.6L632.5 138.1M626.9 137.4L631.4 137.2M630.3 137.5L628.1 137M622.6 136.4L627.1 136.2M625.9 136.5L623.8 136M618.4 135.4L622.9 135.2M621.7 135.6L619.6 135.1M614.3 134.5L618.8 134.3M617.6 134.6L615.6 134.1M610.4 133.6L614.8 133.3M613.6 133.7L611.6 133.2M606.5 132.7L610.9 132.4M609.7 132.8L607.7 132.3M602.8 131.8L607.1 131.6M605.9 131.9L604 131.5M767.4 166.6L773.1 166.1M750.4 162.8L756.1 162.3M734.7 159.2L740.2 158.8M720.1 155.9L725.4 155.5M706.4 152.8L711.7 152.5M693.7 149.9L698.8 149.6M681.7 147.2L686.7 146.9M670.5 144.7L675.3 144.4M659.9 142.3L664.7 142M663.6 142.5L661 141.9M649.9 140.1L654.6 139.8M653.5 140.2L651.1 139.7M640.5 137.9L645.1 137.7M644 138.1L641.7 137.6M631.6 135.9L636.1 135.7M635 136.1L632.8 135.6M623.2 134L627.6 133.8M626.4 134.2L624.4 133.7M615.2 132.2L619.5 132M618.3 132.3L616.4 131.9M788 167.6L793.7 167.2M778.9 165.7L784.5 165.2M770.1 163.7L775.7 163.3M761.6 161.9L767.2 161.5M753.5 160.1L759 159.7M745.6 158.4L751 158M738.1 156.8L743.4 156.4M730.8 155.2L736 154.8M723.7 153.6L728.9 153.3M716.9 152.1L722 151.8M710.2 150.7L715.3 150.4M703.8 149.3L708.9 149M697.7 147.9L702.6 147.6M691.7 146.6L696.6 146.3M685.8 145.4L690.7 145.1M689.7 145.5L686.8 144.9M680.2 144.1L685 143.8M684 144.3L681.2 143.7M674.7 142.9L679.5 142.7M678.5 143.1L675.8 142.5M669.4 141.8L674.1 141.5M673.1 141.9L670.5 141.4M664.3 140.7L668.9 140.4M667.9 140.8L665.3 140.2M659.2 139.6L663.9 139.3M662.8 139.7L660.3 139.2M654.4 138.5L658.9 138.2M657.9 138.6L655.5 138.1M649.6 137.5L654.2 137.2M653.1 137.6L650.7 137.1M645 136.5L649.5 136.2M648.4 136.6L646.1 136.1M640.6 135.5L645 135.3M643.9 135.6L641.7 135.1M636.2 134.5L640.6 134.3M639.5 134.7L637.3 134.2M632 133.6L636.3 133.4M635.2 133.7L633.1 133.3M627.8 132.7L632.1 132.5M631 132.8L628.9 132.4M623.8 131.8L628 131.6M626.9 131.9L624.9 131.5M619.9 131L624.1 130.8M622.9 131.1L621 130.7M790.1 164.7L795.7 164.3M772.6 161.1L778.1 160.6M756.4 157.6L761.7 157.2M741.3 154.4L746.4 154.1M727.1 151.4L732.2 151.1M713.9 148.6L718.8 148.3M701.5 146L706.3 145.7M705.4 146.2L702.4 145.6M689.8 143.6L694.6 143.3M693.6 143.7L690.8 143.1M678.8 141.2L683.5 141M682.5 141.4L679.8 140.8M668.4 139.1L673 138.8M672 139.2L669.5 138.7M658.7 137L663.1 136.7M662.1 137.1L659.7 136.6M649.4 135L653.8 134.8M652.7 135.2L650.4 134.7M640.6 133.2L644.9 133M643.8 133.3L641.7 132.8M632.3 131.4L636.5 131.2M635.4 131.5L633.3 131.1M801.2 163.8L806.7 163.4M792.2 162L797.6 161.6M783.5 160.2L788.8 159.8M775.1 158.5L780.3 158.1M767 156.8L772.2 156.5M759.2 155.2L764.3 154.9M751.6 153.7L756.7 153.3M744.3 152.2L749.3 151.9M737.2 150.8L742.2 150.4M730.4 149.4L735.3 149M723.8 148L728.7 147.7M717.4 146.7L722.2 146.4M721.4 146.9L718.2 146.2M711.1 145.4L715.9 145.1M715.1 145.6L712 145M705.1 144.2L709.8 143.9M709 144.4L706 143.7M699.3 143L704 142.7M703.1 143.2L700.2 142.6M693.6 141.8L698.2 141.6M697.3 142L694.5 141.4M688.1 140.7L692.7 140.4M691.7 140.9L689 140.3M682.7 139.6L687.3 139.4M686.3 139.8L683.7 139.2M677.5 138.6L682 138.3M681.1 138.7L678.5 138.2M672.5 137.5L676.9 137.3M675.9 137.7L673.4 137.1M667.5 136.5L671.9 136.3M671 136.6L668.5 136.1M662.8 135.5L667.1 135.3M666.1 135.7L663.8 135.2M658.1 134.6L662.4 134.4M661.4 134.7L659.1 134.2M653.6 133.7L657.8 133.4M656.8 133.8L654.6 133.3M649.1 132.7L653.4 132.5M652.4 132.9L650.2 132.4M644.8 131.9L649 131.7M648 132L645.9 131.5M640.6 131L644.8 130.8M643.8 131.1L641.7 130.7M636.5 130.2L640.7 130M639.6 130.3L637.6 129.9M812.1 163L817.4 162.5M794.1 159.4L799.3 159M777.4 156.1L782.5 155.7M761.8 153L766.8 152.6M747.2 150.1L752.1 149.8M733.5 147.4L738.3 147.1M737.6 147.6L734.3 146.9M720.7 144.8L725.4 144.5M724.6 145L721.5 144.4M708.6 142.4L713.2 142.2M712.4 142.6L709.5 142M697.2 140.2L701.7 139.9M700.9 140.3L698.1 139.8M686.5 138.1L690.9 137.8M690 138.2L687.4 137.7M676.3 136L680.7 135.8M679.7 136.2L677.3 135.7M666.7 134.1L671 133.9M670 134.3L667.7 133.8M657.6 132.3L661.8 132.1M660.8 132.4L658.6 132M648.9 130.6L653 130.4M652 130.7L649.9 130.3M822.8 162.1L828 161.7M813.5 160.3L818.7 159.9M804.6 158.6L809.7 158.2M795.9 156.9L801 156.5M787.6 155.3L792.7 155M779.6 153.8L784.6 153.4M771.8 152.3L776.7 151.9M764.3 150.8L769.2 150.5M757 149.4L761.8 149.1M761.2 149.6L757.6 148.9M749.9 148.1L754.7 147.8M754.1 148.3L750.6 147.6M743.1 146.8L747.9 146.5M747.2 146.9L743.8 146.3M736.5 145.5L741.2 145.2M740.5 145.7L737.2 145M730.1 144.3L734.7 144M734 144.4L730.8 143.8M723.8 143.1L728.5 142.8M727.7 143.2L724.6 142.6M717.8 141.9L722.4 141.6M721.6 142L718.6 141.5M711.9 140.8L716.4 140.5M715.7 140.9L712.8 140.4M706.2 139.7L710.7 139.4M709.9 139.8L707.1 139.3M700.7 138.6L705.1 138.4M704.3 138.7L701.6 138.2M695.3 137.6L699.7 137.3M698.8 137.7L696.2 137.2M690.1 136.6L694.4 136.3M693.6 136.7L691 136.2M685 135.6L689.3 135.4M688.4 135.7L685.9 135.2M680 134.6L684.3 134.4M683.4 134.8L680.9 134.3M675.2 133.7L679.4 133.5M678.5 133.8L676.1 133.4M670.5 132.8L674.7 132.6M673.8 132.9L671.4 132.5M665.9 131.9L670 131.7M669.1 132L666.8 131.6M661.4 131.1L665.5 130.9M664.6 131.2L662.4 130.7M657.1 130.2L661.1 130M660.2 130.3L658 129.9M652.8 129.4L656.9 129.2M655.9 129.5L653.8 129.1M833.3 161.2L838.4 160.8M814.8 157.8L819.9 157.4M797.7 154.6L802.6 154.2M781.6 151.6L786.5 151.3M786 151.8L782.1 151.1M766.6 148.8L771.4 148.5M770.9 149L767.2 148.3M752.6 146.2L757.2 145.9M756.6 146.3L753.2 145.7M739.3 143.7L743.9 143.4M743.2 143.8L740 143.2M726.9 141.4L731.4 141.1M730.7 141.5L727.6 140.9M715.1 139.2L719.5 138.9M718.8 139.3L715.9 138.8M704 137.1L708.4 136.9M707.6 137.2L704.9 136.7M693.5 135.1L697.8 134.9M696.9 135.3L694.4 134.8M683.6 133.3L687.7 133.1M686.9 133.4L684.5 132.9M674.1 131.5L678.2 131.3M677.3 131.6L675 131.2M665.2 129.8L669.2 129.6M668.3 129.9L666.1 129.5M834.1 158.7L839.1 158.3M824.9 157L829.9 156.6M816.1 155.4L821 155M807.6 153.9L812.5 153.5M799.3 152.4L804.2 152M803.8 152.6L799.7 151.8M791.3 150.9L796.1 150.6M795.7 151.1L791.8 150.4M783.6 149.5L788.4 149.2M787.9 149.7L784.1 149M776.1 148.2L780.8 147.8M780.3 148.3L776.7 147.7M768.9 146.8L773.6 146.5M773 147L769.4 146.4M761.9 145.6L766.5 145.3M765.9 145.7L762.5 145.1M755.1 144.3L759.6 144M759 144.5L755.7 143.9M748.5 143.1L753 142.8M752.4 143.3L749.1 142.7M742.1 142L746.5 141.7M745.9 142.1L742.7 141.5M735.8 140.8L740.3 140.6M739.6 141L736.5 140.4M729.8 139.7L734.2 139.5M733.5 139.9L730.5 139.3M723.9 138.7L728.3 138.4M727.6 138.8L724.6 138.3M718.2 137.6L722.5 137.4M721.8 137.8L719 137.3M712.7 136.6L716.9 136.4M716.2 136.7L713.4 136.3M707.2 135.6L711.5 135.4M710.7 135.8L708 135.3M702 134.7L706.2 134.5M705.4 134.8L702.8 134.3M696.9 133.7L701 133.5M700.2 133.9L697.7 133.4M691.9 132.8L696 132.6M695.2 133L692.7 132.5M687 132L691.1 131.8M690.3 132.1L687.9 131.6M682.3 131.1L686.3 130.9M685.5 131.2L683.1 130.8M677.7 130.3L681.7 130.1M680.8 130.4L678.5 130M673.2 129.4L677.1 129.2M676.3 129.5L674 129.1M668.8 128.6L672.7 128.5M671.8 128.7L669.6 128.4M834.9 156.3L839.8 155.9M817.3 153.1L822.1 152.8M821.9 153.3L817.6 152.6M800.9 150.2L805.6 149.9M805.3 150.4L801.3 149.7M785.5 147.5L790.1 147.2M789.7 147.7L786 147M771.1 145L775.6 144.7M775.1 145.1L771.6 144.5M757.5 142.6L761.9 142.3M761.4 142.7L758.1 142.1M744.7 140.3L749 140M748.4 140.4L745.3 139.9M732.6 138.2L736.9 137.9M736.2 138.3L733.3 137.8M721.2 136.1L725.4 135.9M724.7 136.3L721.9 135.8M710.3 134.2L714.5 134M713.7 134.4L711.1 133.9M700.1 132.4L704.1 132.2M703.4 132.5L700.8 132.1M690.3 130.7L694.3 130.5M693.5 130.8L691.1 130.4M681 129.1L685 128.9M684.1 129.2L681.9 128.8M854 157.1L858.9 156.7M844.7 155.5L849.5 155.1M849.4 155.7L844.8 154.9M835.6 153.9L840.4 153.6M840.3 154.1L835.8 153.4M826.9 152.4L831.6 152.1M831.4 152.6L827.1 151.9M818.5 151L823.2 150.7M822.9 151.2L818.7 150.5M810.3 149.6L814.9 149.3M814.6 149.8L810.6 149.1M802.4 148.2L807 147.9M806.7 148.4L802.8 147.7M794.7 146.9L799.3 146.6M798.9 147.1L795.1 146.4M787.3 145.6L791.8 145.3M791.4 145.8L787.7 145.2M780.1 144.4L784.6 144.1M784.1 144.5L780.6 143.9M773.1 143.2L777.6 142.9M777.1 143.3L773.6 142.8M766.4 142L770.7 141.7M770.2 142.2L766.9 141.6M759.8 140.9L764.1 140.6M763.6 141L760.3 140.5M753.4 139.8L757.7 139.5M757.1 139.9L754 139.4M747.2 138.7L751.4 138.5M750.8 138.9L747.8 138.3M741.1 137.7L745.4 137.4M744.7 137.8L741.8 137.3M735.3 136.7L739.4 136.4M738.8 136.8L735.9 136.3M729.5 135.7L733.7 135.5M733 135.8L730.2 135.3M724 134.7L728.1 134.5M727.4 134.9L724.7 134.4M718.6 133.8L722.6 133.6M722 133.9L719.3 133.5M713.3 132.9L717.3 132.7M716.6 133L714 132.6M708.2 132L712.2 131.8M711.4 132.1L708.9 131.7M703.1 131.1L707.1 130.9M706.4 131.3L703.9 130.8M698.3 130.3L702.2 130.1M701.4 130.4L699 130M693.5 129.5L697.4 129.3M696.6 129.6L694.3 129.2M688.9 128.7L692.7 128.5M691.9 128.8L689.6 128.4M684.3 127.9L688.1 127.7M687.4 128L685.1 127.6M878.4 158.2L873.4 157.4M854.3 154.8L859 154.4M859 155L854.3 154.2M836.3 151.7L841 151.4M840.9 151.9L836.5 151.2M819.6 148.9L824.1 148.6M823.9 149.1L819.8 148.4M803.8 146.3L808.3 146M808 146.5L804.2 145.8M789 143.8L793.4 143.5M793 144L789.5 143.4M775.1 141.5L779.4 141.2M779 141.6L775.6 141.1M762 139.3L766.2 139M765.7 139.4L762.5 138.9M749.6 137.2L753.7 137M753.2 137.3L750.1 136.8M737.8 135.2L741.9 135M741.3 135.4L738.4 134.9M726.7 133.4L730.7 133.1M730.1 133.5L727.4 133M716.1 131.6L720.1 131.4M719.4 131.7L716.8 131.3M706.1 129.9L710 129.7M709.3 130L706.8 129.6M696.6 128.3L700.4 128.1M699.6 128.4L697.3 128M909 160.8L903.7 159.9M898.4 159.1L893.1 158.2M888 157.4L883 156.6M878.1 155.8L873.2 155M863.7 154L868.4 153.7M868.4 154.2L863.7 153.5M854.5 152.5L859.2 152.2M859.1 152.7L854.6 152M845.6 151.1L850.2 150.7M850.1 151.3L845.8 150.5M837 149.7L841.6 149.3M841.4 149.8L837.2 149.2M828.7 148.3L833.2 148M833 148.5L828.9 147.8M820.6 147L825.1 146.7M824.8 147.1L820.9 146.5M812.8 145.7L817.2 145.4M816.9 145.9L813.1 145.2M805.2 144.5L809.6 144.2M809.3 144.6L805.5 144M797.8 143.2L802.2 143M801.8 143.4L798.2 142.8M790.7 142.1L795 141.8M794.6 142.2L791.1 141.7M783.7 140.9L788 140.7M787.6 141.1L784.2 140.5M777 139.8L781.2 139.6M780.8 140L777.5 139.4M770.5 138.8L774.6 138.5M774.2 138.9L770.9 138.4M764.1 137.7L768.2 137.5M767.7 137.9L764.6 137.4M757.9 136.7L762 136.5M761.5 136.9L758.4 136.4M751.9 135.7L756 135.5M755.4 135.9L752.4 135.4M746 134.8L750.1 134.6M749.5 134.9L746.6 134.4M740.3 133.8L744.3 133.6M743.7 134L740.9 133.5M734.7 132.9L738.7 132.7M738.1 133.1L735.4 132.6M729.3 132.1L733.3 131.8M732.6 132.2L730 131.7M724 131.2L727.9 131M727.3 131.3L724.7 130.9M718.9 130.3L722.8 130.2M722.1 130.5L719.6 130M713.9 129.5L717.7 129.3M717 129.6L714.6 129.2M709 128.7L712.8 128.5M712.1 128.8L709.7 128.4M704.2 127.9L708 127.8M707.3 128L704.9 127.7M699.5 127.2L703.3 127M702.6 127.3L700.2 126.9M941.4 163.6L935.6 162.7M918.7 160L913.2 159.1M897.5 156.6L892.4 155.8M873.1 153.3L877.7 153M877.7 153.5L873 152.8M854.8 150.4L859.3 150.1M859.3 150.6L854.8 149.9M837.7 147.7L842.1 147.4M842 147.8L837.8 147.2M821.6 145.1L826 144.8M825.8 145.3L821.9 144.6M806.5 142.7L810.8 142.4M810.5 142.8L806.8 142.3M792.3 140.4L796.5 140.2M796.1 140.6L792.6 140M778.8 138.3L783 138M782.5 138.4L779.3 137.9M766.1 136.3L770.2 136M769.7 136.4L766.6 135.9M754.1 134.3L758.1 134.1M757.6 134.5L754.6 134M742.7 132.5L746.6 132.3M746 132.6L743.2 132.2M731.8 130.8L735.7 130.6M735.1 130.9L732.4 130.5M721.5 129.1L725.3 129M724.7 129.2L722.2 128.9M711.7 127.6L715.5 127.4M714.8 127.7L712.4 127.3M975.8 166.5L969.4 165.6M963.2 164.6L957.1 163.7M951.1 162.7L945.2 161.8M939.4 160.9L933.7 160M928.1 159.2L922.7 158.3M917.3 157.5L912 156.7M906.8 155.9L901.7 155.1M896.7 154.3L891.7 153.5M882.2 152.6L886.8 152.2M886.9 152.8L882.1 152.1M872.9 151.1L877.4 150.8M877.4 151.3L872.8 150.6M863.8 149.7L868.3 149.4M868.3 149.9L863.8 149.2M855 148.4L859.4 148M859.4 148.5L855.1 147.9M846.5 147L850.9 146.7M850.8 147.2L846.6 146.6M838.3 145.8L842.6 145.5M842.5 145.9L838.4 145.3M830.3 144.5L834.6 144.2M834.4 144.7L830.5 144.1M822.6 143.3L826.8 143M826.6 143.5L822.8 142.9M815 142.1L819.3 141.9M819 142.3L815.3 141.7M807.7 141L811.9 140.7M811.7 141.2L808.1 140.6M800.7 139.9L804.8 139.6M804.5 140L801 139.5M793.8 138.8L797.9 138.6M797.5 139L794.1 138.4M787.1 137.8L791.2 137.5M790.8 137.9L787.5 137.4M780.6 136.8L784.6 136.5M784.2 136.9L781 136.4M774.2 135.8L778.2 135.6M777.8 135.9L774.7 135.4M768.1 134.8L772 134.6M771.6 135L768.5 134.5M762.1 133.9L766 133.7M765.5 134L762.5 133.6M756.2 133L760.1 132.8M759.6 133.1L756.7 132.7M750.5 132.1L754.4 131.9M753.9 132.2L751 131.8M745 131.2L748.8 131M748.3 131.3L745.5 130.9M739.5 130.4L743.4 130.2M742.8 130.5L740.1 130.1M734.3 129.6L738 129.4M737.5 129.7L734.9 129.3M729.1 128.8L732.9 128.6M732.3 128.9L729.7 128.5M724.1 128L727.8 127.8M727.2 128.1L724.7 127.7M719.2 127.2L722.9 127M722.2 127.3L719.8 126.9M714.4 126.5L718.1 126.3M717.4 126.6L715 126.2M1012.2 169.7L1005.3 168.6M985.3 165.6L979 164.6M960.5 161.9L954.6 161M937.4 158.4L931.9 157.5M915.9 155.1L910.8 154.3M891.2 151.9L895.7 151.6M895.9 152.1L891.1 151.4M872.7 149.1L877.1 148.8M877.1 149.3L872.6 148.6M855.3 146.4L859.6 146.1M859.5 146.6L855.3 146M838.9 143.9L843.1 143.7M843 144.1L839 143.5M823.5 141.6L827.6 141.3M827.4 141.8L823.7 141.2M808.9 139.4L813 139.1M812.8 139.5L809.2 139M795.2 137.3L799.3 137.1M798.9 137.4L795.6 136.9M782.2 135.3L786.2 135.1M785.8 135.5L782.6 135M769.9 133.5L773.8 133.2M773.4 133.6L770.4 133.1M758.3 131.7L762.1 131.5M761.6 131.8L758.8 131.4M747.2 130L750.9 129.8M750.4 130.1L747.7 129.7M736.6 128.4L740.3 128.2M739.8 128.5L737.2 128.1M726.5 126.9L730.2 126.7M729.6 127L727.1 126.6M1099.4 180.2L1090.9 178.9M1082.5 177.7L1074.4 176.5M1066.4 175.3L1058.5 174.1M1050.9 173L1043.3 171.9M1036 170.8L1028.8 169.7M1021.7 168.7L1014.8 167.7M1008 166.7L1001.3 165.7M994.8 164.7L988.3 163.8M982 162.8L975.9 161.9M969.8 161L963.8 160.1M958 159.3L952.2 158.4M946.6 157.6L941 156.8M935.6 156L930.2 155.2M925 154.4L919.8 153.6M914.7 152.9L909.7 152.1M904.8 151.4L899.9 150.7M890.6 149.8L895 149.5M895.2 150L890.5 149.3M881.4 148.4L885.7 148.1M885.9 148.6L881.3 147.9M872.5 147.1L876.8 146.8M876.8 147.3L872.4 146.6M863.8 145.8L868.1 145.5M868.1 146L863.9 145.4M855.5 144.6L859.7 144.3M859.7 144.7L855.5 144.1M847.3 143.4L851.5 143.1M851.4 143.5L847.4 142.9M839.5 142.2L843.6 141.9M843.5 142.4L839.6 141.8M831.8 141.1L835.9 140.8M835.8 141.2L832 140.7M824.4 140L828.4 139.7M828.2 140.1L824.6 139.6M817.1 138.9L821.2 138.6M820.9 139L817.4 138.5M810.1 137.8L814.1 137.6M813.8 138L810.4 137.5M803.3 136.8L807.2 136.6M807 137L803.6 136.5M796.6 135.8L800.6 135.6M800.2 136L797 135.5M790.1 134.9L794.1 134.7M793.7 135L790.5 134.5M783.8 133.9L787.7 133.7M787.4 134.1L784.2 133.6M777.7 133L781.6 132.8M781.2 133.2L778.1 132.7M771.7 132.1L775.6 131.9M775.1 132.3L772.2 131.8M765.9 131.3L769.7 131.1M769.2 131.4L766.4 131M760.2 130.4L764 130.2M763.5 130.5L760.7 130.1M754.7 129.6L758.4 129.4M757.9 129.7L755.2 129.3M749.3 128.8L753 128.6M752.5 128.9L749.8 128.5M744 128L747.7 127.8M747.2 128.1L744.5 127.7M738.9 127.3L742.5 127.1M742 127.4L739.4 127M733.8 126.5L737.4 126.3M736.9 126.6L734.4 126.2M728.9 125.8L732.5 125.6M731.9 125.9L729.5 125.5M1092.1 176.5L1083.9 175.3M1060.3 171.9L1052.8 170.8M1031 167.7L1024.1 166.7M1004 163.8L997.5 162.9M978.9 160.2L972.9 159.3M955.6 156.8L950 156M933.8 153.7L928.6 152.9M913.5 150.7L908.6 150M890 147.8L894.3 147.5M894.4 148L889.9 147.3M872.3 145.2L876.5 144.9M876.6 145.4L872.3 144.8M855.7 142.8L859.8 142.5M859.8 143L855.7 142.4M840 140.5L844.1 140.3M843.9 140.7L840.1 140.1M825.2 138.4L829.2 138.1M829 138.5L825.4 138M811.2 136.4L815.1 136.1M814.9 136.5L811.5 136M798 134.4L801.8 134.2M801.5 134.6L798.3 134.1M785.4 132.6L789.2 132.4M788.8 132.7L785.8 132.3M773.5 130.9L777.2 130.7M776.8 131L773.9 130.6M762.1 129.2L765.8 129M765.4 129.3L762.6 128.9M751.3 127.7L755 127.5M754.5 127.8L751.8 127.4M741 126.2L744.6 126M744.1 126.3L741.6 125.9M1118.3 177.8L1109.8 176.6M1101.4 175.4L1093.2 174.2M1085.2 173.1L1077.3 172M1069.6 170.9L1062 169.8M1054.6 168.8L1047.4 167.8M1040.2 166.8L1033.2 165.8M1026.4 164.8L1019.7 163.9M1013.1 162.9L1006.6 162M1000.2 161.1L994 160.2M987.9 159.4L981.8 158.5M975.9 157.7L970.1 156.9M964.4 156L958.8 155.3M953.3 154.5L947.9 153.7M942.5 153L937.3 152.2M932.1 151.5L927.1 150.8M922.1 150.1L917.2 149.4M907.8 148.5L912.1 148.2M912.3 148.7L907.6 148M898.5 147.2L902.7 146.9M902.9 147.4L898.3 146.7M889.4 145.9L893.6 145.6M893.8 146.1L889.3 145.4M880.7 144.6L884.8 144.4M884.9 144.8L880.6 144.2M872.2 143.4L876.3 143.2M876.3 143.6L872.1 143M863.9 142.3L868 142M868 142.4L863.9 141.8M855.9 141.1L859.9 140.9M859.9 141.3L855.9 140.7M848.1 140L852.1 139.8M852 140.2L848.2 139.6M840.5 138.9L844.5 138.7M844.4 139.1L840.6 138.6M833.2 137.9L837.1 137.7M837 138L833.3 137.5M826 136.9L829.9 136.6M829.7 137L826.2 136.5M819 135.9L822.9 135.7M822.7 136L819.3 135.5M812.3 134.9L816.1 134.7M815.9 135.1L812.5 134.6M805.7 134L809.5 133.8M809.2 134.1L805.9 133.7M799.2 133.1L803 132.9M802.7 133.2L799.6 132.7M793 132.2L796.7 132M796.4 132.3L793.3 131.9M786.9 131.3L790.6 131.1M790.3 131.4L787.2 131M780.9 130.5L784.6 130.3M784.3 130.6L781.3 130.2M775.1 129.7L778.8 129.5M778.4 129.8L775.5 129.4M769.5 128.9L773.1 128.7M772.7 129L769.9 128.6M764 128.1L767.6 127.9M767.1 128.2L764.4 127.8M758.6 127.3L762.2 127.1M761.7 127.4L759 127M753.3 126.6L756.9 126.4M756.4 126.7L753.8 126.3M748.2 125.8L751.7 125.7M751.2 125.9L748.7 125.6M743.1 125.1L746.7 124.9M746.1 125.2L743.7 124.9M1110.6 174.3L1102.3 173.2M1078.7 169.9L1071.1 168.8M1049.2 165.8L1042.2 164.9M1022 162.1L1015.5 161.2M996.7 158.6L990.6 157.7M973.1 155.3L967.5 154.5M951.1 152.3L945.8 151.5M930.5 149.4L925.6 148.7M906.9 146.6L911 146.3M911.2 146.7L906.6 146.1M888.9 144.1L893 143.8M893.1 144.2L888.8 143.6M872 141.7L876 141.5M876.1 141.9L872 141.3M856.1 139.5L860 139.3M860 139.6L856.1 139.1M841 137.4L844.9 137.2M844.8 137.5L841.1 137M826.8 135.4L830.6 135.2M830.4 135.6L827 135.1M813.3 133.6L817.1 133.3M816.8 133.7L813.5 133.2M800.5 131.8L804.2 131.6M803.9 131.9L800.8 131.5M788.3 130.1L792 129.9M791.6 130.2L788.7 129.8M776.7 128.5L780.3 128.3M780 128.6L777.1 128.2M765.7 126.9L769.3 126.8M768.8 127L766.2 126.7M1136.5 175.5L1128 174.4M1119.5 173.2L1111.3 172.1M1103.3 171L1095.4 169.9M1087.6 168.9L1080 167.9M1072.6 166.9L1065.3 165.9M1058.1 164.9L1051.1 164M1044.2 163L1037.4 162.1M1030.7 161.2L1024.2 160.3M1017.8 159.4L1011.5 158.6M1005.3 157.8L999.3 156.9M993.3 156.1L987.4 155.3M981.7 154.6L976 153.8M970.4 153L965 152.3M959.6 151.6L954.3 150.8M949.1 150.1L943.9 149.4M938.9 148.8L933.9 148.1M924.5 147.3L928.6 146.9M929 147.4L924.2 146.8M915.1 146L919.2 145.7M919.5 146.1L914.8 145.5M905.9 144.7L910 144.4M910.2 144.9L905.7 144.3M897 143.5L901 143.2M901.2 143.7L896.8 143.1M888.4 142.3L892.4 142.1M892.5 142.5L888.2 141.9M880 141.2L883.9 140.9M884.1 141.3L879.9 140.8M871.9 140.1L875.8 139.8M875.8 140.2L871.8 139.7M863.9 139L867.8 138.7M867.9 139.1L863.9 138.6M856.2 138L860.1 137.7M860.1 138.1L856.3 137.6M848.8 136.9L852.6 136.7M852.5 137.1L848.8 136.6M841.5 135.9L845.3 135.7M845.2 136.1L841.6 135.6M834.4 135L838.2 134.8M838.1 135.1L834.6 134.6M827.5 134L831.3 133.8M831.1 134.2L827.7 133.7M820.8 133.1L824.5 132.9M824.3 133.2L821 132.8M814.3 132.2L818 132M817.7 132.4L814.5 131.9M807.9 131.4L811.6 131.2M811.3 131.5L808.1 131.1M801.7 130.5L805.3 130.3M805 130.6L802 130.2M795.6 129.7L799.2 129.5M798.9 129.8L795.9 129.4M789.7 128.9L793.3 128.7M793 129L790 128.6M783.9 128.1L787.5 127.9M787.1 128.2L784.3 127.8M778.3 127.3L781.8 127.2M781.5 127.4L778.7 127.1M772.8 126.6L776.3 126.4M775.9 126.7L773.2 126.3M1128.4 172.2L1120.1 171.1M1096.4 167.9L1088.8 166.9M1066.8 164L1059.7 163.1M1039.4 160.4L1032.8 159.5M1013.9 157L1007.8 156.2M990.1 153.8L984.4 153.1M967.9 150.9L962.6 150.2M947.1 148.1L942.1 147.5M923.2 145.4L927.2 145.1M927.6 145.5L922.9 144.9M905 142.9L909 142.7M909.2 143.1L904.8 142.5M887.9 140.7L891.8 140.4M891.9 140.8L887.8 140.3M871.7 138.5L875.6 138.3M875.6 138.6L871.7 138.1M856.4 136.5L860.2 136.2M860.2 136.6L856.5 136.1M841.9 134.5L845.7 134.3M845.6 134.7L842.1 134.2M828.2 132.7L831.9 132.5M831.8 132.8L828.4 132.4M815.2 131L818.8 130.8M818.6 131.1L815.4 130.7M802.8 129.3L806.4 129.1M806.1 129.4L803.1 129M791 127.7L794.6 127.6M794.2 127.8L791.4 127.5M1154 173.3L1145.4 172.2M1137 171.1L1128.7 170.1M1120.7 169L1112.7 168M1105 167L1097.3 166M1089.9 165L1082.5 164.1M1075.3 163.1L1068.3 162.2M1061.3 161.3L1054.5 160.4M1047.8 159.5L1041.3 158.7M1034.8 157.8L1028.5 157M1022.2 156.2L1016.1 155.4M1010.1 154.6L1004.2 153.9M998.4 153.1L992.7 152.4M987 151.6L981.5 150.9M976.1 150.2L970.7 149.5M965.5 148.8L960.3 148.2M955.2 147.5L950.1 146.8M945.2 146.2L940.3 145.6M931.2 144.8L935.1 144.5M935.5 144.9L930.8 144.3M921.9 143.6L925.8 143.3M926.2 143.7L921.6 143.1M912.9 142.4L916.8 142.1M917.1 142.5L912.6 142M904.1 141.2L908 141M908.3 141.4L903.9 140.8M895.7 140.1L899.5 139.9M899.7 140.3L895.5 139.7M887.4 139.1L891.2 138.8M891.4 139.2L887.3 138.7M879.4 138L883.2 137.8M883.3 138.1L879.3 137.6M871.6 137L875.3 136.8M875.4 137.1L871.5 136.6M864 136L867.7 135.8M867.7 136.1L864 135.6M856.6 135L860.3 134.8M860.3 135.2L856.6 134.7M849.4 134.1L853.1 133.9M853 134.2L849.5 133.8M842.4 133.2L846.1 133M846 133.3L842.5 132.8M835.6 132.3L839.2 132.1M839.1 132.4L835.7 132M828.9 131.4L832.5 131.2M832.4 131.5L829.1 131.1M822.4 130.6L826 130.4M825.8 130.7L822.6 130.3M816.1 129.7L819.7 129.5M819.5 129.8L816.3 129.4M809.9 128.9L813.5 128.7M813.2 129L810.2 128.6M803.9 128.1L807.4 128M807.2 128.3L804.2 127.9M1145.5 170.1L1137.2 169.1M1113.4 166L1105.8 165.1M1083.7 162.2L1076.6 161.3M1056.1 158.7L1049.6 157.9M1030.5 155.5L1024.3 154.7M1006.5 152.4L1000.8 151.7M984.1 149.6L978.8 148.9M963.1 146.9L958.1 146.2M939.1 144.2L943 143.9M943.4 144.4L938.7 143.8M920.7 141.8L924.5 141.6M924.8 142L920.4 141.4M903.3 139.6L907.1 139.4M907.3 139.8L903.1 139.2M886.9 137.5L890.7 137.3M890.8 137.7L886.8 137.1M871.4 135.5L875.1 135.3M875.2 135.7L871.4 135.2M856.7 133.7L860.4 133.4M860.4 133.8L856.8 133.3M842.8 131.9L846.4 131.7M846.3 132L842.9 131.6M829.6 130.2L833.1 130M833 130.3L829.7 129.9M1170.8 171.3L1162.2 170.2M1153.8 169.1L1145.5 168.1M1137.4 167.1L1129.5 166.1M1121.7 165.1L1114 164.2M1106.5 163.2L1099.2 162.3M1092 161.4L1084.9 160.5M1077.9 159.6L1071.1 158.8M1064.3 157.9L1057.7 157.1M1051.2 156.3L1044.9 155.5M1038.6 154.7L1032.4 153.9M1026.4 153.2L1020.4 152.4M1014.6 151.7L1008.8 151M1003.1 150.3L997.6 149.6M992.1 148.9L986.7 148.2M981.4 147.6L976.1 146.9M971 146.3L965.9 145.6M960.9 145L956 144.4M946.8 143.6L950.7 143.3M951.2 143.8L946.4 143.2M937.5 142.5L941.3 142.2M941.7 142.6L937.1 142M928.3 141.3L932.1 141M932.5 141.5L928 140.9M919.5 140.2L923.3 139.9M923.6 140.3L919.2 139.8M910.9 139.1L914.6 138.9M914.9 139.3L910.7 138.7M902.5 138.1L906.3 137.8M906.5 138.2L902.3 137.7M894.4 137L898.1 136.8M898.3 137.2L894.3 136.7M886.5 136L890.2 135.8M890.3 136.2L886.4 135.7M878.8 135.1L882.4 134.9M882.5 135.2L878.7 134.7M871.3 134.1L874.9 133.9M875 134.3L871.3 133.8M864 133.2L867.6 133M867.6 133.3L864 132.9M856.9 132.3L860.5 132.1M860.5 132.4L856.9 132M850 131.5L853.5 131.3M853.5 131.6L850 131.1M843.2 130.6L846.8 130.4M846.7 130.7L843.3 130.3M836.6 129.8L840.1 129.6M840 129.9L836.8 129.5M1162 168.1L1153.7 167.1M1129.8 164.2L1122.2 163.3M1100.1 160.6L1092.9 159.7M1072.4 157.2L1065.8 156.3M1046.6 154L1040.4 153.2M1022.5 151L1016.7 150.3M999.9 148.3L994.5 147.6M978.7 145.7L973.6 145M954.5 143.1L958.3 142.8M958.8 143.2L954 142.6M935.9 140.8L939.7 140.5M940.1 140.9L935.5 140.4M918.4 138.6L922.1 138.4M922.4 138.8L918.1 138.2M901.8 136.6L905.4 136.3M905.6 136.7L901.6 136.2M886.1 134.6L889.7 134.4M889.8 134.8L886 134.3M871.2 132.8L874.7 132.6M874.8 132.9L871.2 132.5M857.1 131.1L860.6 130.9M860.5 131.2L857.1 130.7"/>
<path fill="none" stroke="#ececf4" stroke-opacity="0.75" stroke-width="0.5" d="M87 156.6L88.9 155.8M99.2 157.5L101.1 156.7M111.7 158.3L113.5 157.5M115.2 156.7L116.9 155.9M118.6 155.1L120.3 154.3M124.4 159.2L126.1 158.4M130.9 155.9L132.5 155.1M137.4 160.2L138.9 159.3M140.5 158.4L142 157.6M143.5 156.8L145 156M146.4 155.2L147.8 154.4M149.2 153.6L150.6 152.9M150.6 161.1L152 160.2M156.3 157.6L157.7 156.8M161.7 154.4L162.9 153.7M166.7 160.2L168.1 159.4M169.3 158.5L170.6 157.7M171.9 156.9L173.1 156.1M174.3 155.3L175.5 154.5M176.6 153.7L177.8 153M178.9 152.2L180 151.5M182.6 159.4L183.8 158.6M187.2 156.1L188.3 155.3M191.4 153L192.4 152.3M194 162.1L195.1 161.2M196.2 160.3L197.2 159.5M198.3 158.6L199.3 157.8M200.3 157L201.3 156.1M202.2 155.4L203.2 154.6M204.1 153.8L205 153M205.9 152.3L206.8 151.6M207.7 150.9L208.5 150.2M210 161.3L210.9 160.4M213.6 157.8L214.5 157M217 154.6L217.8 153.8M220.2 151.6L221 150.9M222.4 164.1L223.2 163.1M224 162.2L224.9 161.3M225.7 160.4L226.5 159.6M227.2 158.7L228 157.9M228.7 157L229.5 156.2M230.2 155.4L230.9 154.7M231.6 153.9L232.3 153.1M233 152.4L233.6 151.7M234.3 150.9L234.9 150.2M235.5 149.5L236.2 148.8M238.4 163.2L239.1 162.3M241.1 159.6L241.7 158.8M243.6 156.3L244.2 155.5M245.9 153.2L246.5 152.4M248.1 150.3L248.6 149.6M251.9 166.1L252.5 165.1M253 164.2L253.6 163.2M254.1 162.3L254.7 161.4M255.2 160.5L255.7 159.7M256.3 158.8L256.8 158M257.3 157.1L257.7 156.3M258.2 155.5L258.7 154.7M259.1 154L259.6 153.2M260 152.5L260.5 151.7M260.9 151L261.3 150.3M261.8 149.6L262.2 148.9M262.6 148.2L263 147.6M268 165.2L268.4 164.2M269.6 161.5L270 160.6M271.2 158L271.5 157.2M272.6 154.8L272.9 154M273.9 151.8L274.3 151M275.2 149L275.5 148.3M282.6 168.2L282.9 167.2M283.2 166.2L283.5 165.2M283.8 164.3L284 163.3M284.3 162.4L284.6 161.5M284.8 160.6L285.1 159.7M285.3 158.9L285.6 158M285.8 157.2L286.1 156.4M286.3 155.6L286.5 154.8M286.7 154L287 153.3M287.2 152.5L287.4 151.8M287.6 151.1L287.8 150.4M288 149.7L288.2 149M288.4 148.3L288.6 147.6M288.8 147L289 146.3M298.7 167.3L298.9 166.3M299.3 163.4L299.4 162.5M299.8 159.8L299.9 158.9M300.2 156.4L300.3 155.6M300.7 153.3L300.8 152.6M301.1 150.4L301.2 149.7M301.4 147.7L301.5 147M314.6 170.4L314.6 169.4M314.6 168.3L314.6 167.3M314.6 166.3L314.6 165.3M314.5 164.4L314.5 163.4M314.5 162.5L314.5 161.6M314.5 160.7L314.5 159.8M314.5 159L314.5 158.1M314.4 157.3L314.4 156.5M314.4 155.7L314.4 154.9M314.4 154.1L314.4 153.4M314.4 152.6L314.4 151.9M314.3 151.2L314.3 150.5M314.3 149.8L314.3 149.1M314.3 148.4L314.3 147.7M314.3 147.1L314.3 146.4M314.3 145.8L314.3 145.2M330.8 169.4L330.6 168.4M330.1 165.4L330 164.4M329.5 161.7L329.3 160.8M328.9 158.2L328.8 157.3M328.4 154.9L328.2 154.2M327.9 151.9L327.7 151.2M327.4 149.1L327.3 148.4M326.9 146.5L326.8 145.8M347.4 170.5L347 169.5M346.7 168.4L346.4 167.4M346 166.4L345.7 165.4M345.4 164.5L345.1 163.5M344.8 162.6L344.5 161.7M344.2 160.8L343.9 159.9M343.7 159.1L343.4 158.2M343.1 157.4L342.9 156.6M342.6 155.8L342.3 155M342.1 154.2L341.8 153.4M341.6 152.7L341.4 152M341.1 151.2L340.9 150.5M340.7 149.8L340.5 149.1M340.2 148.5L340 147.8M339.8 147.1L339.6 146.5M339.4 145.8L339.2 145.2M339 144.6L338.8 144M364.3 171.7L363.7 170.6M362.3 167.5L361.8 166.5M360.4 163.6L360 162.7M358.7 160L358.3 159.1M357.1 156.6L356.7 155.8M355.6 153.5L355.2 152.7M354.2 150.6L353.9 149.9M352.9 147.8L352.6 147.2M351.7 145.3L351.4 144.6M381.5 172.8L380.8 171.7M380.1 170.7L379.5 169.6M378.8 168.5L378.2 167.5M377.5 166.5L376.9 165.5M376.3 164.6L375.7 163.6M375.1 162.7L374.6 161.8M374 160.9L373.4 160M372.9 159.2L372.4 158.3M371.8 157.5L371.3 156.7M370.8 155.9L370.3 155.1M369.8 154.3L369.4 153.5M368.9 152.8L368.4 152M368 151.3L367.5 150.6M367.1 149.9L366.6 149.2M366.2 148.5L365.8 147.9M365.4 147.2L365 146.6M364.6 145.9L364.2 145.3M363.8 144.7L363.4 144.1M363 143.5L362.6 142.9M399.2 174L398.3 172.9M395.7 169.6L394.9 168.6M392.6 165.6L391.8 164.6M389.6 161.8L388.9 160.9M386.9 158.4L386.2 157.5M384.3 155.1L383.7 154.3M382 152.1L381.4 151.4M379.7 149.2L379.2 148.6M377.7 146.6L377.2 145.9M375.7 144.1L375.2 143.5M417.2 175.3L416.1 174.1M415 173L414 171.9M413 170.8L412 169.7M411 168.7L410.1 167.6M409.1 166.6L408.2 165.6M407.3 164.7L406.4 163.7M405.5 162.8L404.7 161.9M403.8 161L403 160.1M402.2 159.2L401.4 158.4M400.6 157.6L399.9 156.7M399.1 155.9L398.4 155.2M397.6 154.4L396.9 153.6M396.2 152.9L395.5 152.1M394.8 151.4L394.2 150.7M393.5 150L392.9 149.3M392.2 148.6L391.6 147.9M391 147.3L390.4 146.6M389.8 146L389.2 145.4M388.6 144.7L388 144.1M387.5 143.5L386.9 142.9M386.4 142.3L385.8 141.8M435.6 176.5L434.3 175.3M430.6 171.9L429.4 170.8M426 167.7L424.9 166.7M421.8 163.8L420.8 162.9M417.8 160.2L416.9 159.3M414.1 156.8L413.3 156M410.7 153.7L409.9 152.9M407.5 150.7L406.8 150M404.5 148L403.8 147.3M401.7 145.4L401 144.8M399.1 143L398.4 142.4M454.5 177.8L453 176.6M451.5 175.4L450.1 174.2M448.7 173.1L447.3 172M445.9 170.9L444.6 169.8M443.3 168.8L442 167.7M440.8 166.7L439.5 165.8M438.3 164.8L437.1 163.8M436 162.9L434.9 162M433.7 161.1L432.6 160.2M431.6 159.3L430.5 158.5M429.5 157.7L428.4 156.8M427.4 156L426.5 155.2M425.5 154.5L424.5 153.7M423.6 152.9L422.7 152.2M421.8 151.5L420.9 150.8M420 150L419.1 149.4M418.3 148.7L417.5 148M416.6 147.3L415.8 146.7M415 146.1L414.3 145.4M413.5 144.8L412.7 144.2M412 143.6L411.2 143M410.5 142.4L409.8 141.8M409.1 141.3L408.4 140.7M473.8 179.1L472 177.8M467.1 174.3L465.5 173.1M460.9 169.9L459.4 168.8M455.2 165.8L453.9 164.8M450 162L448.7 161.1M445.1 158.5L443.9 157.7M440.5 155.3L439.4 154.5M436.3 152.2L435.3 151.5M432.3 149.4L431.3 148.7M428.6 146.7L427.7 146.1M425.1 144.2L424.2 143.6M421.8 141.9L421 141.3M493.5 180.4L491.5 179.1M489.6 177.9L487.7 176.7M485.9 175.5L484.1 174.3M482.3 173.2L480.6 172.1M478.9 171L477.3 169.9M475.6 168.9L474 167.9M472.5 166.8L470.9 165.9M469.4 164.9L468 163.9M466.5 163L465.1 162.1M463.7 161.2L462.3 160.3M461 159.4L459.7 158.6M458.4 157.7L457.1 156.9M455.8 156.1L454.6 155.3M453.4 154.5L452.2 153.8M451 153L449.9 152.3M448.7 151.5L447.6 150.8M446.5 150.1L445.5 149.4M444.4 148.7L443.4 148.1M442.3 147.4L441.3 146.8M440.3 146.1L439.4 145.5M438.4 144.9L437.4 144.3M436.5 143.6L435.6 143.1M434.7 142.5L433.8 141.9M432.9 141.3L432 140.8M431.2 140.2L430.3 139.7M513.7 181.8L511.5 180.5M505.1 176.8L503.1 175.6M497.3 172.1L495.4 171.1M490.1 167.9L488.3 166.9M483.4 164L481.8 163M477.2 160.3L475.7 159.5M471.4 157L470 156.2M466.1 153.8L464.8 153.1M461 150.9L459.8 150.2M456.3 148.1L455.2 147.4M451.9 145.5L450.9 144.9M447.8 143.1L446.8 142.5M443.9 140.8L442.9 140.2M539.5 185.9L536.9 184.5M534.4 183.2L531.9 181.8M529.5 180.5L527.1 179.3M524.8 178L522.6 176.8M520.4 175.6L518.2 174.5M516.1 173.3L514 172.2M512 171.1L510 170M508 169L506.1 168M504.2 166.9L502.4 166M500.6 165L498.8 164M497.1 163.1L495.4 162.2M493.7 161.3L492.1 160.4M490.4 159.5L488.9 158.7M487.3 157.8L485.8 157M484.3 156.2L482.8 155.4M481.3 154.6L479.9 153.9M478.5 153.1L477.1 152.4M475.8 151.6L474.4 150.9M473.1 150.2L471.8 149.5M470.6 148.8L469.3 148.1M468.1 147.5L466.9 146.8M465.7 146.2L464.5 145.6M463.3 144.9L462.2 144.3M461.1 143.7L460 143.1M458.9 142.5L457.8 142M456.7 141.4L455.7 140.8M454.7 140.3L453.7 139.7M452.7 139.2L451.7 138.7M555.5 184.6L552.8 183.2M545 179.3L542.5 178.1M535.3 174.5L533 173.4M526.4 170.1L524.3 169M518.2 166L516.2 165M510.6 162.2L508.7 161.3M503.5 158.7L501.8 157.9M496.9 155.4L495.3 154.7M490.8 152.4L489.3 151.7M485 149.5L483.7 148.9M479.6 146.9L478.4 146.2M474.6 144.3L473.4 143.7M469.8 142L468.7 141.4M465.3 139.8L464.3 139.2M583.4 188.9L580.3 187.5M577.2 186.1L574.2 184.7M571.3 183.3L568.4 182M565.6 180.7L562.8 179.4M560.1 178.2L557.5 176.9M554.9 175.8L552.4 174.6M549.9 173.4L547.5 172.3M545.1 171.2L542.8 170.2M540.5 169.1L538.3 168.1M536.1 167.1L533.9 166.1M531.8 165.1L529.8 164.1M527.7 163.2L525.7 162.3M523.8 161.4L521.9 160.5M520 159.6L518.1 158.8M516.3 157.9L514.5 157.1M512.8 156.3L511 155.5M509.3 154.7L507.7 153.9M506 153.2L504.4 152.4M502.8 151.7L501.3 151M499.7 150.3L498.2 149.6M496.8 148.9L495.3 148.2M493.9 147.6L492.4 146.9M491.1 146.3L489.7 145.6M488.3 145L487 144.4M485.7 143.8L484.4 143.2M483.1 142.6L481.9 142M480.6 141.4L479.4 140.9M478.2 140.3L477 139.8M475.9 139.2L474.7 138.7M473.6 138.2L472.5 137.7M599.4 187.6L596.1 186.1M586.6 182L583.6 180.7M575 177L572.2 175.8M564.3 172.4L561.7 171.3M554.4 168.1L552 167.1M545.2 164.2L543.1 163.2M536.8 160.5L534.8 159.7M528.9 157.1L527 156.3M521.6 154L519.8 153.2M514.7 151L513.1 150.3M508.3 148.3L506.8 147.6M502.3 145.7L500.8 145M496.6 143.2L495.3 142.6M491.3 140.9L490 140.4M486.3 138.7L485 138.2M666.3 209.2L675.1 208.3M656.9 205.3L665.5 204.4M629.7 192.1L625.9 190.6M622.2 189.1L618.6 187.6M615 186.2L611.6 184.8M608.2 183.4L604.9 182.1M601.7 180.8L598.6 179.5M595.5 178.3L592.5 177.1M589.5 175.9L586.6 174.7M583.8 173.6L581 172.4M578.3 171.3L575.7 170.3M573.1 169.2L570.5 168.2M568 167.2L565.5 166.2M563.1 165.2L560.7 164.2M558.4 163.3L556.1 162.4M553.9 161.5L551.7 160.6M549.6 159.7L547.4 158.9M545.4 158L543.3 157.2M541.3 156.4L539.3 155.6M537.4 154.8L535.5 154M533.6 153.3L531.8 152.5M530 151.8L528.2 151.1M526.4 150.3L524.7 149.6M523 149L521.3 148.3M519.7 147.6L518.1 147M516.5 146.3L514.9 145.7M513.4 145.1L511.8 144.4M510.3 143.8L508.9 143.2M507.4 142.7L506 142.1M504.6 141.5L503.2 140.9M501.8 140.4L500.5 139.8M499.1 139.3L497.8 138.8M496.5 138.2L495.2 137.7M494 137.2L492.7 136.7M694.1 211.3L702.9 210.4M674.1 203.6L682.5 202.7M662.2 197L657.9 195.4M645.5 190.7L641.6 189.2M630.3 184.9L626.8 183.5M616.5 179.6L613.2 178.4M603.8 174.8L600.8 173.6M592.1 170.3L589.3 169.3M581.3 166.2L578.8 165.2M571.4 162.4L569 161.5M562.1 158.9L559.9 158.1M553.5 155.6L551.4 154.8M545.5 152.6L543.5 151.8M537.9 149.7L536.1 149M530.9 147L529.2 146.4M524.3 144.5L522.7 143.9M518 142.1L516.5 141.5M512.2 139.9L510.8 139.3M506.6 137.8L505.3 137.2M734.7 217.9L743.5 216.8M722.8 213.5L731.4 212.5M711.5 209.4L720 208.5M700.9 205.5L709.2 204.6M690.8 201.9L699 201M681.2 198.4L689.2 197.6M687.6 198.8L682.9 197.1M678.3 195.5L673.8 193.9M669.4 192.3L665.2 190.7M661 189.2L657 187.8M653 186.4L649.1 185M645.3 183.6L641.6 182.3M638 180.9L634.4 179.7M631 178.4L627.6 177.2M624.2 176L621 174.8M617.8 173.7L614.7 172.6M611.6 171.5L608.6 170.4M605.7 169.3L602.8 168.3M600 167.3L597.2 166.3M594.5 165.3L591.8 164.3M589.2 163.4L586.6 162.5M584.1 161.6L581.6 160.7M579.2 159.8L576.8 158.9M574.5 158.1L572.2 157.3M569.9 156.5L567.7 155.7M565.5 154.9L563.4 154.1M561.2 153.3L559.2 152.6M557.1 151.9L555.1 151.1M553.1 150.4L551.2 149.7M549.3 149L547.4 148.4M545.6 147.7L543.7 147M541.9 146.4L540.2 145.8M538.4 145.1L536.7 144.5M535 143.9L533.4 143.3M531.7 142.7L530.1 142.1M528.5 141.6L527 141M525.4 140.4L523.9 139.9M522.4 139.4L520.9 138.8M519.5 138.3L518 137.8M516.6 137.3L515.2 136.8M513.8 136.3L512.5 135.8M752.2 215.8L760.9 214.8M728.4 207.6L736.7 206.6M707.1 200.2L715.1 199.4M713.7 200.6L708.6 198.9M694 193.9L689.4 192.4M676.2 187.9L672 186.4M660 182.3L656.1 181M645.1 177.3L641.6 176.1M631.5 172.6L628.3 171.5M619 168.3L616 167.3M607.4 164.4L604.6 163.4M596.6 160.7L594 159.8M586.6 157.3L584.2 156.5M577.3 154.1L575.1 153.4M568.6 151.2L566.5 150.5M560.5 148.4L558.5 147.7M552.8 145.8L551 145.2M545.6 143.3L543.9 142.7M538.9 141L537.2 140.5M532.5 138.9L530.9 138.3M526.5 136.8L525 136.3M796.7 222.7L805.4 221.6M782.6 218.1L791.2 217.1M769.3 213.8L777.7 212.8M756.8 209.6L765 208.7M744.9 205.7L753 204.8M733.7 202L741.6 201.2M740.4 202.5L734.9 200.7M723 198.5L730.8 197.7M729.5 199L724.3 197.3M712.8 195.2L720.5 194.4M719.2 195.6L714.2 194M703.2 192L710.7 191.3M709.3 192.4L704.6 190.9M700 189.4L695.4 187.9M691 186.5L686.7 185.1M682.5 183.7L678.3 182.4M674.3 181.1L670.4 179.8M666.5 178.6L662.7 177.3M659 176.1L655.4 175M651.8 173.8L648.4 172.7M645 171.6L641.6 170.5M638.3 169.4L635.1 168.4M632 167.4L628.9 166.4M625.9 165.4L622.9 164.4M620 163.5L617.2 162.6M614.4 161.7L611.6 160.8M608.9 159.9L606.2 159M603.6 158.2L601.1 157.4M598.6 156.5L596.1 155.7M593.7 155L591.3 154.2M588.9 153.4L586.6 152.7M584.3 151.9L582.1 151.2M579.9 150.5L577.7 149.8M575.6 149.1L573.5 148.4M571.5 147.8L569.4 147.1M567.4 146.5L565.5 145.8M563.5 145.2L561.6 144.6M559.8 144L557.9 143.4M556.1 142.8L554.3 142.2M552.5 141.6L550.8 141.1M549.1 140.5L547.4 140M545.7 139.4L544.1 138.9M542.4 138.4L540.8 137.8M814 220.5L822.4 219.4M786 211.8L794.2 210.8M761 204L768.9 203.1M768 204.5L762 202.6M738.5 196.9L746.2 196.2M745.1 197.4L739.7 195.7M718.2 190.6L725.6 189.9M724.3 191L719.5 189.5M705.5 185.2L701.1 183.8M688.3 179.9L684.3 178.6M672.6 175L668.9 173.9M658.1 170.6L654.7 169.5M644.8 166.4L641.6 165.4M632.4 162.6L629.5 161.7M621 159.1L618.2 158.2M610.3 155.8L607.8 155M600.3 152.7L598 152M591 149.8L588.8 149.1M582.3 147.1L580.2 146.5M574.1 144.6L572.1 144M566.4 142.2L564.5 141.7M559.1 140L557.4 139.4M830.7 218.3L839 217.3M816.1 214L824.2 213M802.2 209.8L810.2 208.9M809.6 210.4L802.9 208.4M789.1 205.9L796.9 205M796.3 206.4L789.9 204.6M776.7 202.2L784.4 201.4M783.6 202.7L777.5 200.9M764.9 198.7L772.5 197.9M771.6 199.2L765.8 197.5M753.7 195.4L761.2 194.6M760.2 195.8L754.7 194.2M743 192.2L750.4 191.5M749.3 192.6L744.1 191.1M732.9 189.2L740.1 188.5M739 189.6L734 188.1M723.2 186.3L730.3 185.6M729.1 186.7L724.4 185.2M719.7 183.9L715.2 182.5M710.7 181.2L706.4 179.9M702.1 178.7L697.9 177.5M693.9 176.3L689.9 175.1M686 173.9L682.1 172.8M678.4 171.7L674.7 170.6M671.1 169.5L667.6 168.5M664.1 167.5L660.7 166.5M657.4 165.5L654.1 164.5M650.9 163.6L647.8 162.7M644.7 161.8L641.6 160.9M638.7 160L635.7 159.1M632.9 158.3L630 157.4M627.3 156.6L624.5 155.8M621.9 155L619.2 154.3M616.6 153.5L614.1 152.7M611.6 152L609.1 151.3M606.7 150.6L604.3 149.9M602 149.2L599.7 148.5M597.4 147.8L595.2 147.2M593 146.5L590.8 145.9M588.7 145.3L586.6 144.6M584.5 144L582.5 143.4M580.5 142.8L578.5 142.3M576.6 141.7L574.6 141.1M572.8 140.6L570.9 140M569.1 139.5L567.2 138.9M847.1 216.2L855.1 215.2M855 216.8L847.3 214.7M818 208L825.8 207.1M825.4 208.5L818.5 206.5M792 200.5L799.5 199.7M798.9 201L792.7 199.3M768.5 193.9L775.8 193.1M775 194.3L769.4 192.7M747.2 187.8L754.3 187.1M753.3 188.2L748.2 186.7M733.6 182.6L729 181.3M715.6 177.5L711.3 176.3M699 172.9L695.1 171.8M683.8 168.6L680.2 167.5M669.7 164.6L666.4 163.6M656.7 160.9L653.6 160M644.5 157.5L641.6 156.7M633.2 154.3L630.5 153.5M622.7 151.3L620.1 150.6M612.8 148.5L610.4 147.9M603.5 145.9L601.3 145.3M594.8 143.5L592.7 142.9M586.6 141.1L584.6 140.6M887.1 219.2L878.9 216.9M863 214.2L870.7 213.2M870.8 214.8L863 212.7M847.8 210.1L855.5 209.1M855.4 210.6L848 208.6M833.4 206.1L841 205.2M840.8 206.6L833.8 204.8M819.8 202.4L827.3 201.6M826.9 202.9L820.3 201.1M806.9 198.9L814.3 198.1M813.8 199.4L807.5 197.6M794.7 195.6L801.9 194.8M801.3 196L795.3 194.4M783 192.4L790.1 191.6M789.4 192.8L783.7 191.2M771.9 189.3L778.9 188.6M778.1 189.7L772.7 188.2M761.3 186.4L768.2 185.8M767.4 186.8L762.1 185.4M751.1 183.7L758 183M757.1 184L752.1 182.7M741.5 181L748.2 180.4M747.2 181.4L742.5 180.1M737.8 178.8L733.3 177.6M728.8 176.4L724.4 175.2M720.2 174L716 172.9M711.9 171.8L707.9 170.7M703.9 169.7L700.1 168.6M696.3 167.6L692.6 166.6M688.9 165.6L685.3 164.6M681.8 163.7L678.4 162.8M675 161.9L671.7 161M668.5 160.1L665.3 159.2M662.1 158.4L659.1 157.5M656 156.7L653 155.9M650.1 155.1L647.2 154.3M644.4 153.6L641.6 152.8M638.9 152.1L636.2 151.4M633.6 150.6L631 149.9M628.4 149.3L625.9 148.6M623.4 147.9L621 147.2M618.6 146.6L616.2 146M613.9 145.3L611.6 144.7M609.3 144.1L607.1 143.5M604.9 142.9L602.8 142.3M600.6 141.7L598.5 141.2M596.5 140.6L594.4 140.1M886.2 212.8L878.3 210.7M848.5 204.4L855.8 203.5M855.7 204.9L848.6 203M821.5 197.3L828.7 196.5M828.3 197.7L821.9 196.1M797.1 190.9L804.1 190.2M803.6 191.3L797.7 189.8M775 185.1L781.8 184.5M781.1 185.5L775.8 184.1M754.8 179.8L761.4 179.2M760.5 180.1L755.7 178.9M741.7 175.3L737.3 174.1M724.5 170.8L720.4 169.7M708.5 166.6L704.7 165.7M693.8 162.8L690.2 161.9M680.1 159.3L676.8 158.4M667.3 156L664.3 155.2M655.4 152.9L652.6 152.1M644.3 150L641.6 149.3M633.9 147.3L631.4 146.6M624.1 144.7L621.8 144.1M614.9 142.4L612.7 141.8M918 215L909.5 212.9M901.2 210.8L893.2 208.8M877.9 206.3L885.2 205.4M885.4 206.9L877.8 205M863.1 202.6L870.3 201.8M870.3 203.1L863.1 201.3M849.1 199.1L856.2 198.3M856.1 199.5L849.2 197.8M835.8 195.7L842.7 195M842.5 196.2L836 194.5M823.1 192.5L830 191.8M829.6 192.9L823.4 191.4M811 189.5L817.8 188.8M817.4 189.9L811.4 188.4M799.5 186.6L806.2 185.9M805.7 187L800 185.5M788.5 183.8L795.1 183.2M794.5 184.2L789.1 182.8M777.9 181.2L784.5 180.5M783.8 181.5L778.6 180.2M767.9 178.6L774.3 178M773.6 179L768.6 177.7M763.8 176.5L759.1 175.3M754.4 174.2L749.9 173M745.4 171.9L741.1 170.8M736.8 169.8L732.6 168.7M728.5 167.7L724.5 166.7M720.5 165.7L716.7 164.7M712.9 163.8L709.1 162.9M705.5 161.9L701.9 161.1M698.3 160.2L694.9 159.3M691.5 158.5L688.1 157.6M684.8 156.8L681.6 156M678.4 155.2L675.3 154.4M672.2 153.7L669.2 152.9M666.3 152.2L663.4 151.4M660.5 150.7L657.7 150M654.9 149.3L652.2 148.6M649.5 148L646.8 147.3M644.2 146.7L641.7 146M639.1 145.4L636.6 144.8M634.2 144.2L631.8 143.6M629.4 143L627.1 142.4M915.9 208.9L907.7 207M877.4 200.9L884.4 200.1M884.6 201.4L877.3 199.6M849.7 194.2L856.5 193.4M856.4 194.6L849.8 193M824.5 188.1L831.2 187.4M830.9 188.5L824.9 187M801.6 182.5L808.1 181.9M807.6 182.9L802.1 181.6M780.7 177.5L787 176.9M786.4 177.8L781.3 176.6M766.9 173.1L762.3 172M748.9 168.8L744.7 167.8M732.3 164.8L728.4 163.8M717 161.1L713.3 160.2M702.7 157.7L699.3 156.8M689.4 154.5L686.2 153.7M676.9 151.5L674 150.8M665.3 148.7L662.5 148M654.4 146.1L651.8 145.4M644.1 143.6L641.7 143M947.3 211L938.6 209M930.1 207.1L921.9 205.1M906.5 202.8L913.4 202M913.9 203.3L906.1 201.5M891.3 199.3L898.2 198.5M898.5 199.7L891.1 198M876.9 195.9L883.7 195.1M883.9 196.3L876.8 194.7M863.2 192.7L869.9 192M870 193.1L863.3 191.6M850.2 189.6L856.8 188.9M856.7 190L850.3 188.6M837.7 186.7L844.2 186.1M844.1 187.1L838 185.7M825.9 184L832.3 183.3M832 184.3L826.2 183M814.5 181.3L820.8 180.7M820.5 181.6L814.9 180.3M803.6 178.8L809.9 178.2M809.5 179.1L804.1 177.8M793.2 176.3L799.4 175.8M798.9 176.6L793.8 175.5M783.3 174L789.4 173.5M788.8 174.3L783.9 173.2M779.1 172L774.4 171M769.8 169.9L765.2 168.8M760.8 167.8L756.5 166.8M752.2 165.8L748 164.8M743.9 163.9L739.9 163M735.9 162L732.1 161.1M728.3 160.3L724.5 159.4M720.9 158.5L717.2 157.7M713.7 156.9L710.2 156.1M706.8 155.3L703.4 154.5M700.1 153.7L696.9 153M693.7 152.2L690.5 151.5M687.4 150.8L684.4 150.1M681.4 149.4L678.5 148.7M675.6 148L672.7 147.4M669.9 146.7L667.1 146.1M664.4 145.5L661.7 144.8M659.1 144.2L656.5 143.6M944 205.2L935.7 203.4M904.9 197.7L911.6 196.9M912.1 198.1L904.6 196.4M876.5 191.2L883 190.5M883.2 191.6L876.4 190.1M850.7 185.4L857.1 184.7M857 185.8L850.8 184.4M827.1 180.1L833.3 179.5M833.1 180.4L827.4 179.2M805.5 175.2L811.6 174.7M811.2 175.5L806 174.4M785.7 170.7L791.6 170.2M791.1 171L786.3 169.9M772.5 166.9L768.1 165.9M755.3 163L751.2 162.1M739.4 159.4L735.6 158.6M724.5 156.1L721 155.3M710.7 153L707.4 152.3M697.8 150.1L694.7 149.4M685.7 147.4L682.7 146.8M674.3 144.9L671.5 144.3M957.6 203.5L949.2 201.7M941 199.9L933.1 198.2M918.2 196.1L924.8 195.3M925.3 196.5L917.8 194.9M903.5 192.9L910 192.1M910.4 193.3L903.2 191.7M889.5 189.8L895.9 189.1M896.1 190.2L889.3 188.7M876.1 186.9L882.4 186.2M882.6 187.3L876 185.8M863.4 184.1L869.6 183.5M869.6 184.5L863.4 183.1M851.1 181.4L857.3 180.8M857.2 181.8L851.3 180.5M839.5 178.9L845.6 178.3M845.4 179.2L839.7 178M828.3 176.4L834.3 175.9M834.1 176.8L828.6 175.6M817.6 174.1L823.5 173.6M823.2 174.4L818 173.3M807.3 171.9L813.2 171.4M812.8 172.2L807.7 171.1M797.5 169.7L803.2 169.2M802.8 170L797.9 168.9M793.2 167.9L788.5 166.9M783.9 165.9L779.5 164.9M775.1 164L770.7 163.1M766.5 162.1L762.3 161.2M758.2 160.4L754.2 159.5M750.3 158.6L746.4 157.8M742.6 157L738.9 156.2M735.2 155.4L731.6 154.6M728 153.8L724.6 153.1M721.1 152.3L717.8 151.6M714.4 150.9L711.2 150.2M708 149.5L704.8 148.8M701.7 148.1L698.6 147.5M695.6 146.8L692.6 146.2M970.8 201.8L962.3 200M931.2 194.5L937.6 193.8M938.3 195L930.6 193.4M902.2 188.4L908.4 187.7M908.8 188.8L901.9 187.3M875.7 182.8L881.8 182.2M882 183.2L875.7 181.8M851.6 177.7L857.5 177.1M857.5 178L851.7 176.8M829.4 173L835.2 172.5M835 173.3L829.7 172.2M809 168.7L814.7 168.2M814.3 169L809.4 168M795.2 165L790.6 164M777.5 161.3L773.3 160.4M761 157.8L757.1 157M745.7 154.6L742 153.9M731.4 151.6L728 150.9M718 148.8L714.8 148.2M983.7 200.1L975.2 198.4M966.9 196.7L958.8 195M943.9 193L950.1 192.3M950.9 193.4L943.2 191.9M928.9 190L935.1 189.3M935.7 190.4L928.3 188.9M914.6 187L920.7 186.4M921.2 187.4L914.2 186M900.9 184.2L907 183.6M907.3 184.6L900.6 183.2M887.9 181.6L893.9 181M894.1 181.9L887.7 180.6M875.4 179L881.3 178.4M881.4 179.4L875.3 178.1M863.4 176.6L869.3 176M869.3 176.9L863.5 175.7M852 174.2L857.8 173.7M857.7 174.5L852.1 173.4M841 172L846.7 171.5M846.6 172.3L841.2 171.2M830.5 169.8L836.1 169.3M835.9 170.1L830.7 169.1M820.3 167.8L825.9 167.3M825.6 168L820.6 167M810.6 165.8L816.1 165.3M815.8 166L811 165M806.3 164.1L801.6 163.2M797.1 162.2L792.7 161.3M788.3 160.4L784 159.6M779.8 158.7L775.7 157.9M771.6 157.1L767.6 156.2M763.7 155.5L759.8 154.7M756 153.9L752.3 153.1M748.6 152.4L745 151.7M741.5 150.9L738 150.2M734.6 149.5L731.2 148.9M727.9 148.2L724.6 147.5M996.3 198.5L987.7 196.8M956.3 191.6L962.4 190.8M963.2 192L955.5 190.4M926.7 185.7L932.7 185M933.3 186.1L926.2 184.7M899.8 180.4L905.6 179.7M905.9 180.7L899.5 179.4M875.1 175.5L880.8 174.9M880.9 175.8L875 174.6M852.4 171L858 170.4M857.9 171.2L852.5 170.2M831.4 166.8L836.9 166.3M836.7 167.1L831.7 166.1M817.1 163.2L812.4 162.3M798.9 159.6L794.6 158.8M782 156.3L777.9 155.5M766.2 153.2L762.4 152.4M751.4 150.3L747.9 149.6M1008.5 196.9L999.9 195.2M991.5 193.6L983.3 192M968.4 190.1L974.3 189.4M975.3 190.5L967.5 189M953.2 187.2L959.1 186.5M959.9 187.6L952.4 186.1M938.6 184.4L944.4 183.7M945.1 184.7L938 183.4M924.7 181.7L930.5 181.1M931 182.1L924.2 180.8M911.4 179.2L917.1 178.6M917.6 179.5L911 178.2M898.7 176.7L904.3 176.1M904.7 177L898.4 175.8M886.5 174.4L892.1 173.8M892.3 174.7L886.3 173.5M874.8 172.1L880.3 171.6M880.4 172.4L874.7 171.3M863.5 169.9L869 169.4M869.1 170.2L863.5 169.2M852.7 167.9L858.2 167.4M858.1 168.1L852.8 167.1M842.4 165.9L847.7 165.4M847.6 166.1L842.5 165.2M832.4 163.9L837.7 163.5M837.5 164.2L832.6 163.3M827.8 162.3L823 161.4M818.4 160.5L813.8 159.7M809.3 158.8L804.9 158M800.6 157.1L796.4 156.3M792.2 155.5L788.1 154.8M784.1 154L780.1 153.2M776.2 152.5L772.3 151.7M768.6 151L764.9 150.3M1020.5 195.3L1011.9 193.7M980.2 188.7L986.1 188M987.1 189.1L979.2 187.6M950.2 183.1L956 182.5M956.7 183.5L949.5 182.1M922.8 178L928.4 177.4M928.9 178.3L922.4 177.1M897.6 173.3L903.2 172.7M903.4 173.6L897.4 172.5M874.5 168.9L879.9 168.5M880 169.2L874.4 168.2M853.1 164.9L858.4 164.5M858.3 165.2L853.2 164.2M838.3 161.5L833.5 160.6M819.6 158L815.2 157.2M802.2 154.8L798.1 154M1032.2 193.8L1023.5 192.2M1015 190.7L1006.8 189.2M991.8 187.3L997.5 186.7M998.7 187.7L990.7 186.3M976.4 184.5L982 183.9M983 184.9L975.4 183.5M961.6 181.9L967.2 181.2M968.1 182.2L960.8 180.9M947.5 179.3L953 178.7M953.8 179.6L946.8 178.4M934 176.8L939.5 176.3M940.1 177.1L933.4 176M921 174.5L926.5 173.9M927 174.8L920.6 173.6M908.6 172.2L914 171.7M914.4 172.5L908.3 171.4M896.7 170.1L902 169.6M902.3 170.3L896.5 169.3M885.2 168L890.5 167.5M890.7 168.2L885.1 167.2M874.2 166L879.5 165.5M879.6 166.2L874.1 165.3M863.6 164L868.8 163.6M868.8 164.3L863.6 163.4M853.4 162.2L858.5 161.8M858.5 162.4L853.5 161.5M843.6 160.4L848.7 160M848.6 160.6L843.7 159.8M839 158.9L834.3 158.1M829.7 157.2L825.2 156.4M820.8 155.6L816.4 154.8M812.1 154.1L807.9 153.3M1043.7 192.3L1035 190.8M1003.1 186L1008.7 185.3M1009.9 186.4L1002 185M972.8 180.6L978.2 180M979.2 181L971.9 179.7M944.9 175.7L950.3 175.1M951 176L944.3 174.8M919.4 171.2L924.7 170.7M925.1 171.5L919 170.4M895.8 167L901 166.5M901.2 167.3L895.6 166.3M874 163.2L879.1 162.7M879.2 163.4L873.9 162.5M853.7 159.6L858.7 159.2M858.7 159.8L853.8 158.9M839.6 156.5L835.1 155.7M1054.9 190.8L1046.1 189.3M1037.5 187.9L1029.2 186.4M1014.2 184.7L1019.7 184M1021 185L1013 183.7M998.6 182L1004 181.4M1005.2 182.3L997.5 181M983.7 179.4L989 178.8M990 179.8L982.7 178.5M969.4 177L974.7 176.4M975.6 177.3L968.6 176.1M955.7 174.6L960.9 174.1M961.7 174.9L955 173.8M942.5 172.3L947.8 171.8M948.4 172.6L941.9 171.5M929.9 170.2L935.1 169.7M935.6 170.4L929.4 169.4M917.8 168.1L922.9 167.6M923.4 168.4L917.4 167.3M906.1 166.1L911.2 165.6M911.6 166.3L905.8 165.4M894.9 164.1L900 163.7M900.2 164.4L894.7 163.5M884.1 162.3L889.1 161.9M889.3 162.5L884 161.6M873.7 160.5L878.7 160.1M878.8 160.7L873.7 159.9M863.7 158.8L868.6 158.4M868.6 159L863.7 158.2M858.8 157.3L854.1 156.5M1065.8 189.4L1057 187.9M1031.8 183.7L1023.8 182.4M994.4 178.2L999.6 177.7M1000.7 178.6L993.3 177.3M966.2 173.5L971.4 173M972.2 173.8L965.4 172.7M940.2 169.2L945.3 168.7M945.9 169.4L939.7 168.4M916.3 165.2L921.3 164.7M921.7 165.4L915.9 164.4M894.1 161.4L899 161M899.3 161.7L893.9 160.8M873.5 158L878.3 157.6M1076.5 188L1067.7 186.6M1059.1 185.2L1050.6 183.8M1042.4 182.5L1034.3 181.2M1019.9 179.6L1025.1 179M1026.4 179.9L1018.7 178.6M1004.8 177.1L1010 176.5M1011.1 177.4L1003.7 176.2M990.4 174.7L995.5 174.2M996.5 175L989.4 173.9M976.5 172.5L981.6 171.9M982.5 172.7L975.7 171.6M963.2 170.3L968.2 169.8M969 170.6L962.5 169.5M950.4 168.2L955.4 167.7M956.1 168.5L949.8 167.4M938.1 166.2L943.1 165.7M943.6 166.4L937.6 165.5M926.3 164.2L931.2 163.8M931.7 164.5L925.9 163.6M914.9 162.4L919.8 162M920.1 162.6L914.5 161.7M903.9 160.6L908.8 160.2M893.3 158.9L898.1 158.5M883.1 157.2L887.9 156.8M873.3 155.6L878 155.2M1087 186.7L1078.1 185.3M1052.7 181.2L1044.6 180M1015.1 176L1020.2 175.4M1021.4 176.3L1013.9 175.1M986.6 171.4L991.6 170.9M992.6 171.7L985.7 170.6M960.4 167.2L965.3 166.8M966 167.5L959.7 166.5M936.1 163.4L940.9 162.9M913.6 159.8L918.3 159.4M892.6 156.4L897.3 156M1097.2 185.3L1088.3 184M1079.7 182.6L1071.2 181.3M1062.9 180L1054.7 178.8M1040.4 177.2L1045.4 176.6M1046.8 177.5L1039 176.3M1025.2 174.8L1030.1 174.3M1031.4 175.2L1023.9 174M1010.6 172.6L1015.5 172.1M1016.6 172.9L1009.5 171.8M996.6 170.4L1001.4 169.9M1002.5 170.7L995.6 169.6M983.1 168.3L988 167.8M988.8 168.6L982.2 167.5M970.2 166.3L975 165.8M957.7 164.3L962.5 163.9M945.7 162.5L950.5 162.1M934.2 160.7L938.9 160.3M923 159L927.7 158.6M912.3 157.3L916.9 156.9M901.9 155.7L906.5 155.3M891.9 154.1L896.5 153.7M1107.2 184L1098.3 182.7M1072.8 178.8L1064.6 177.6M1035 173.8L1039.9 173.2M1041.2 174.1L1033.7 172.9M1006.3 169.4L1011.1 168.9M979.8 165.4L984.5 164.9M955.2 161.6L959.9 161.2M932.4 158.2L937 157.8M911.1 154.9L915.6 154.6M1060 175L1064.8 174.4M1044.7 172.7L1049.5 172.2M1030 170.5L1034.7 170M1015.9 168.4L1020.6 167.9M1002.3 166.4L1006.9 165.9M989.2 164.4L993.8 164M976.6 162.6L981.2 162.1M964.5 160.8L969.1 160.4M952.8 159L957.4 158.6M941.5 157.4L946 157M930.6 155.7L935.1 155.4M920.1 154.2L924.6 153.8M910 152.7L914.4 152.3M900.1 151.2L904.5 150.9M1054.2 171.6L1058.9 171.1M1025.2 167.4L1029.9 167M998.5 163.6L1003 163.1M973.6 159.9L978.1 159.5M950.5 156.6L955 156.2M929 153.5L933.4 153.1M908.9 150.5L913.2 150.2M1078.9 172.8L1083.5 172.3M1063.5 170.6L1068.1 170.1M1048.7 168.5L1053.2 168M1034.4 166.5L1039 166M1020.7 164.6L1025.3 164.1M1007.6 162.7L1012.1 162.2M994.9 160.9L999.3 160.5M982.6 159.1L987.1 158.7M970.8 157.5L975.2 157.1M959.4 155.8L963.8 155.5M948.4 154.3L952.7 153.9M937.7 152.8L942.1 152.4M927.4 151.3L931.7 151M917.5 149.9L921.7 149.6M1072.6 169.6L1077.1 169.1M1043.5 165.6L1047.9 165.1M1016.5 161.8L1020.9 161.4M991.5 158.3L995.8 157.9M968.1 155.1L972.4 154.7M946.3 152.1L950.6 151.7M926 149.2L930.2 148.9M1097.1 170.7L1101.5 170.2M1081.6 168.6L1086 168.1M1066.7 166.6L1071.1 166.1M1052.4 164.7L1056.7 164.2M1038.6 162.8L1042.9 162.3M1025.3 161L1029.6 160.5M1012.5 159.2L1016.8 158.8M1000.1 157.5L1004.4 157.2M988.2 155.9L992.5 155.5M976.7 154.4L980.9 154M965.6 152.8L969.8 152.5M954.8 151.4L959 151M944.4 150L948.6 149.6M934.3 148.6L938.4 148.3M1090.4 167.7L1094.7 167.2M1061.1 163.8L1065.4 163.3M1033.9 160.1L1038.2 159.7M1008.7 156.8L1012.9 156.4M985.1 153.6L989.3 153.3M963.1 150.7L967.3 150.4M942.5 147.9L946.6 147.6M1114.5 168.7L1118.8 168.2M1099 166.7L1103.3 166.2M1084 164.8L1088.3 164.3M1069.7 162.9L1073.9 162.4M1055.8 161.1L1060 160.6M1042.4 159.3L1046.6 158.9M1029.5 157.6L1033.7 157.2M1017.1 156L1021.2 155.6M1005.1 154.4L1009.2 154.1M993.5 152.9L997.6 152.6M982.2 151.4L986.3 151.1M971.4 150L975.4 149.7M960.8 148.7L964.9 148.3M950.6 147.3L954.6 147M940.8 146L944.7 145.7M1107.5 165.8L1111.7 165.3M1078.1 162L1082.2 161.6M1050.8 158.5L1054.9 158.1M1025.4 155.3L1029.4 154.9M1001.6 152.2L1005.7 151.9M979.4 149.4L983.4 149M958.6 146.7L962.6 146.4M1131.4 166.8L1135.5 166.3M1115.8 164.9L1119.9 164.4M1100.8 163L1104.9 162.5M1086.3 161.2L1090.4 160.7M1072.4 159.4L1076.5 159M1059 157.7L1063 157.3M1046 156.1L1050.1 155.7M1033.5 154.5L1037.5 154.2M1021.4 153L1025.4 152.6M1009.7 151.5L1013.7 151.2M998.4 150.1L1002.3 149.8M987.4 148.7L991.3 148.4M976.8 147.4L980.7 147.1M966.5 146.1L970.4 145.8M956.5 144.8L960.4 144.6M1124 164L1128 163.5M1094.5 160.3L1098.5 159.9M1067.1 156.9L1071 156.6M1041.5 153.8L1045.4 153.4M1017.6 150.8L1021.5 150.5M995.2 148.1L999.1 147.8M974.2 145.5L978.1 145.2"/>
<path fill="none" stroke="#ececf4" stroke-opacity="0.88" stroke-width="0.75" d="M-14.6 161.5L-11.6 160.6M-2.7 162.4L0.2 161.5M9.4 163.4L12.2 162.5M15 161.5L17.7 160.7M20.4 159.8L23 158.9M21.8 164.4L24.5 163.4M32.4 160.7L35 159.8M39.7 163.5L42.2 162.5M44.7 161.6L47.1 160.7M49.6 159.9L51.9 159M54.2 158.2L56.5 157.3M57.2 162.6L59.6 161.7M66.4 159.1L68.6 158.2M65.3 165.5L67.7 164.5M70 163.6L72.2 162.6M74.4 161.7L76.6 160.8M78.8 160L80.9 159.1M82.9 158.3L85 157.4M83 164.6L85.1 163.6M91.4 160.9L93.4 160M92 167.6L94.1 166.6M96.2 165.6L98.3 164.6M100.3 163.7L102.3 162.7M104.2 161.8L106.2 160.9M108 160.1L109.9 159.2M109.8 166.6L111.7 165.6M117.4 162.8L119.2 161.9M119.8 169.7L121.7 168.7M123.6 167.7L125.4 166.7M127.2 165.7L129 164.7M130.7 163.8L132.4 162.8M134.1 161.9L135.7 161M137.7 168.8L139.4 167.7M144.4 164.8L146 163.8M152.1 169.9L153.7 168.8M155.3 167.8L156.8 166.8M158.3 165.8L159.8 164.8M161.2 163.9L162.6 162.9M164 162L165.4 161.1M166.8 171L168.3 169.9M172.5 166.8L173.9 165.8M177.8 163L179 162.1M181.9 172.1L183.2 171M184.5 170L185.8 168.9M187 167.9L188.2 166.9M189.4 165.9L190.6 164.9M191.8 164L192.9 163M197.2 173.3L198.4 172.2M201.8 169L202.9 167.9M206 165L207.1 164M212.9 174.5L213.9 173.4M215 172.3L216 171.2M216.9 170.1L217.9 169M218.8 168L219.7 167M220.6 166L221.5 165M229 175.7L229.8 174.6M232.4 171.2L233.2 170.1M235.5 167L236.2 166.1M245.4 177L246.1 175.8M246.8 174.6L247.5 173.5M248.1 172.4L248.8 171.3M249.4 170.2L250.1 169.1M250.7 168.1L251.3 167.1M264.2 173.6L264.7 172.4M266.2 169.2L266.6 168.2M280 177.1L280.4 175.9M280.7 174.8L281 173.6M281.4 172.5L281.7 171.4M282 170.3L282.3 169.3M297.5 176L297.7 174.8M298.2 171.4L298.3 170.4M314.8 179.7L314.8 178.5M314.7 177.3L314.7 176.1M314.7 174.9L314.7 173.7M314.7 172.6L314.7 171.5M332.4 178.5L332.1 177.3M331.6 173.8L331.4 172.7M351.2 182.5L350.8 181.1M350.4 179.9L350 178.6M349.6 177.4L349.2 176.2M348.8 175L348.4 173.9M348.1 172.7L347.7 171.6M368.8 181.2L368.2 179.9M366.4 176.2L365.9 175.1M389.4 185.3L388.5 183.9M387.7 182.6L386.8 181.3M386 180L385.2 178.7M384.5 177.5L383.7 176.3M383 175.1L382.2 174M407 184L405.9 182.7M402.9 178.8L401.9 177.6M429.4 188.3L428.1 186.9M426.7 185.5L425.5 184.1M424.2 182.7L423 181.4M421.8 180.1L420.6 178.9M419.4 177.6L418.3 176.4M447 186.9L445.5 185.5M441.1 181.5L439.7 180.2M471.5 191.5L469.6 189.9M467.8 188.5L466 187M464.2 185.6L462.5 184.2M460.8 182.9L459.2 181.6M457.6 180.3L456 179M489.1 190L487 188.5M481.1 184.3L479.2 182.9M515.8 194.8L513.3 193.2M510.9 191.6L508.5 190.1M506.2 188.6L504 187.2M501.8 185.8L499.6 184.4M497.5 183L495.5 181.7M533.3 193.3L530.6 191.7M523 187.2L520.6 185.8M568.9 201.8L565.6 200M562.4 198.3L559.3 196.6M556.2 194.9L553.3 193.3M550.4 191.8L547.5 190.3M544.8 188.8L542.1 187.3M593.9 203.7L590.2 201.8M579.8 196.7L576.5 195M567.1 190.3L564.1 188.9M619.6 205.6L615.5 203.8M611.6 201.9L607.8 200.2M604 198.4L600.4 196.8M596.8 195.1L593.4 193.5M590 191.9L586.7 190.4M646 207.7L641.6 205.7M628.9 200.3L624.9 198.5M613.4 193.6L609.8 192M673.2 209.7L668.3 207.8M663.6 205.8L658.9 204M654.4 202.1L650 200.4M645.8 198.6L641.6 196.9M637.5 195.3L633.5 193.7M701.2 211.9L695.9 209.8M680.7 204.1L675.9 202.2M742.2 218.5L736 216.2M730 214.1L724.2 212M718.6 209.9L713 208M707.7 206L702.5 204.2M697.4 202.3L692.4 200.5M759.7 216.4L753.4 214.2M735.4 208.1L729.8 206.1M811.6 227.6L820.5 226.4M820 228.3L812.2 225.8M804.7 223.4L797.4 221M790.4 218.7L783.5 216.5M776.8 214.3L770.3 212.2M764 210.2L757.9 208.2M751.9 206.2L746.1 204.4M845.4 230.3L854.2 229.1M854 231L845.6 228.4M821.9 221.1L814.5 218.8M793.4 212.3L786.8 210.3M862.8 227.9L871.3 226.7M871.3 228.6L862.8 226.1M846.3 223L854.6 221.9M854.5 223.6L846.5 221.2M838.7 218.9L831.1 216.7M823.7 214.5L816.6 212.4M879 218.6L886.9 217.5M878.4 212.2L886 211.2M910 214.4L917.5 213.4M893.5 210.3L900.9 209.3M908.2 208.4L915.4 207.5M939.3 210.5L946.4 209.5M922.5 206.5L929.5 205.6M936.4 204.8L943.2 203.9M950 203L956.7 202.1M933.7 199.5L940.3 198.6M963.3 201.3L969.8 200.5M976.2 199.6L982.6 198.8M959.6 196.3L965.9 195.5M988.8 198L995 197.2M1001.2 196.4L1007.2 195.6M984.4 193.2L990.4 192.5M1013.2 194.9L1019.1 194.1M1025 193.4L1030.8 192.6M1008 190.3L1013.7 189.6M1036.5 191.9L1042.1 191.2M1047.7 190.4L1053.2 189.7M1030.6 187.5L1036.1 186.8M1058.7 189L1064.1 188.3M1025.1 183.4L1030.4 182.8M1069.4 187.6L1074.7 187M1052.2 184.8L1057.4 184.2M1035.7 182.1L1040.9 181.5M1079.9 186.3L1085.1 185.6M1046.1 180.9L1051.2 180.3M1090.2 185L1095.3 184.3M1072.9 182.3L1077.9 181.6M1056.3 179.7L1061.3 179.1M1100.3 183.7L1105.2 183M1066.2 178.5L1071.1 177.9M1092.7 179.8L1097.5 179.2M1076 177.3L1080.8 176.8M1085.6 176.2L1090.3 175.6M1111.7 177.5L1116.4 176.9M1095 175.1L1099.6 174.5M1104.2 174L1108.7 173.5M1130 175.2L1134.4 174.7M1113.2 172.9L1117.6 172.4M1122 171.9L1126.4 171.4M1147.5 173L1151.8 172.5M1130.7 170.9L1135 170.3M1139.2 169.8L1143.4 169.3M1164.4 171L1168.5 170.5M1147.6 168.8L1151.7 168.4M1155.8 167.9L1159.8 167.4"/>
</g>
<rect x="0" y="100" width="1256" height="420" fill="url(#fog)"/>
</g>
<g>
<clipPath id="capc"><path d="M282.6 274C282.3 238 312 210.2 348.9 210.2C384 210.2 412.7 236 412.7 266L428.3 397A58.5 62 -5 0 1 311.7 407z"/></clipPath>
<path d="M282.6 274C282.3 238 312 210.2 348.9 210.2C384 210.2 412.7 236 412.7 266L428.3 397A58.5 62 -5 0 1 311.7 407z" fill="#8fe4ff" fill-opacity=".10"/>
<g clip-path="url(#capc)"><path d="M282.6 274C282.3 238 312 210.2 348.9 210.2C384 210.2 412.7 236 412.7 266L428.3 397A58.5 62 -5 0 1 311.7 407z" fill="none" stroke="#aeeeff" stroke-opacity=".42" stroke-width="12" filter="url(#b4)"/></g>
<path d="M283.5 355L333 323L338 368zM336 338L396 331L397 341L337 352z" fill="#9fd0f0" fill-opacity=".24"/>
<g fill="none" stroke="#5fd4ff" stroke-width="3" stroke-opacity=".4" filter="url(#b2)"><ellipse cx="348" cy="272.7" rx="65.2" ry="16.6" transform="rotate(-8.3 348 272.7)"/><ellipse cx="369.5" cy="409.5" rx="58.8" ry="30" transform="rotate(-5 369.5 409.5)"/><path d="M340 210.3Q347 240 350.5 272Q356 330 370 387Q375 430 377 466"/><path d="M282.6 274C282.3 238 312 210.2 348.9 210.2C384 210.2 412.7 236 412.7 266L428.3 397A58.5 62 -5 0 1 311.7 407z"/></g>
<g fill="none" stroke="#93e6fc" stroke-width="1.3" stroke-opacity=".9"><ellipse cx="348" cy="272.7" rx="65.2" ry="16.6" transform="rotate(-8.3 348 272.7)"/><ellipse cx="369.5" cy="409.5" rx="58.8" ry="30" transform="rotate(-5 369.5 409.5)"/><path d="M340 210.3Q347 240 350.5 272Q356 330 370 387Q375 430 377 466"/><path d="M282.6 274C282.3 238 312 210.2 348.9 210.2C384 210.2 412.7 236 412.7 266L428.3 397A58.5 62 -5 0 1 311.7 407z"/></g>
<g stroke="#6a6a6e" stroke-width="1.6" fill="#e7e7e7"><path d="M349 272.4C363 272.4 372.6 282.4 372.6 295C372.6 306 366 318 353.5 335C340 320 325.4 308 325.4 295C325.4 282.4 335 272.4 349 272.4z"/><circle cx="348.2" cy="295.3" r="5" fill="#7f86c6"/><circle cx="367" cy="306.9" r="10.6"/><path d="M349.6 334.6V327Q349.6 318.6 358 318.6H376Q384.8 318.6 384.8 327V334.6z"/></g>
</g>
<g>
<ellipse cx="667.8" cy="404.5" rx="77" ry="41.5" fill="#55d2ff" fill-opacity=".8" filter="url(#b5)"/>
<ellipse cx="667.8" cy="404.2" rx="71.5" ry="36.2" fill="#9da2cc"/>
<ellipse cx="667.8" cy="403.4" rx="71" ry="35.2" fill="#565c98"/>
<ellipse cx="667.8" cy="403.2" rx="69.4" ry="33.8" fill="url(#padb)"/>
<path d="M600.5 398A69 33.6 0 0 0 640 432.5Q614 420 618 396Q620 384 636 375.5A69 33.6 0 0 0 600.5 398z" fill="#2fb4e6" fill-opacity=".55"/>
<path d="M626.4 418.6L652.3 430.2L732.3 402V407.4L652.3 437.4L626.4 426.6z" fill="#35b4e6"/>
<path d="M626.4 418.6L652.3 430.2V437.4L626.4 426.6z" fill="#1f9fd6"/>
<path d="M625 416.6L637.3 374.2Q638.3 371.6 642 371.2L684 369.6Q687.4 369.6 690 371.2L731.6 399.4Q733.6 401 731 402.2L656.6 429.2Q654.2 430 651.8 429z" fill="#8e8f98"/>
<path d="M627.6 415.2L639.4 375.6Q640.2 373.6 643 373.4L684 371.8Q686.6 371.8 688.8 373L727.6 399.6L655.8 426Q654 426.6 652.2 425.8z" fill="#404147"/>
<path d="M627.6 415.2L639.4 375.6Q640.2 373.6 643 373.4L660 372.6L640 420.6z" fill="#5b5c63" fill-opacity=".8"/>
<ellipse cx="667.2" cy="399.2" rx="38" ry="19.8" fill="#5f6075"/>
<ellipse cx="667.2" cy="398.6" rx="36.8" ry="18.6" fill="#8486a2"/>
<ellipse cx="637.5" cy="396.5" rx="4.3" ry="2.6" fill="#9698b4" stroke="#6f7189" stroke-width=".9"/>
<ellipse cx="651.5" cy="384.7" rx="4.3" ry="2.6" fill="#9698b4" stroke="#6f7189" stroke-width=".9"/>
<ellipse cx="683" cy="384.7" rx="4.3" ry="2.6" fill="#9698b4" stroke="#6f7189" stroke-width=".9"/>
<ellipse cx="697.5" cy="400.7" rx="4.3" ry="2.6" fill="#9698b4" stroke="#6f7189" stroke-width=".9"/>
<ellipse cx="683.5" cy="413.2" rx="4.3" ry="2.6" fill="#9698b4" stroke="#6f7189" stroke-width=".9"/>
<ellipse cx="652" cy="412.6" rx="4.3" ry="2.6" fill="#9698b4" stroke="#6f7189" stroke-width=".9"/>
<ellipse cx="667.5" cy="399" rx="25" ry="12.8" fill="#c39aae" fill-opacity=".85"/>
<ellipse cx="667.5" cy="399" rx="22" ry="10.8" fill="url(#orb)"/>
</g>
<g stroke="#7b7b80" stroke-width="1.5" fill="#e9e9e9" stroke-linejoin="round"><ellipse cx="673" cy="178.8" rx="29.2" ry="12.3"/><path d="M654.1 156.6V172.3A18.9 7.4 0 0 0 691.9 172.3V156.6z"/><ellipse cx="673" cy="156.6" rx="18.9" ry="7.4"/><path d="M673.0 147.2L669.6 135.0A3.4 3.4 0 1 1 676.4 135.0z"/><path d="M667.2 148.2L657.0 141.8A3.3 3.3 0 1 1 661.8 137.4z"/><path d="M679.8 148.2L684.2 137.5A3.3 3.3 0 1 1 689.4 141.7z"/></g>
<g>
<path d="M690.6 111L684 381" stroke="url(#boxe)" stroke-width="1.2" stroke-opacity=".5"/>
<path d="M610.4 114.6L653.4 120.6L650.5 435L613.4 397.5z" fill="url(#boxg)" fill-opacity=".62"/>
<path d="M653.4 120.6L742.0 118.0L725 417L650.5 435z" fill="url(#boxg)" fill-opacity=".42"/>
<path d="M610.0 107.9L690.6 104.9L742.8 110.9L742.0 118.0L653.4 120.6L610.4 114.6z" fill="#fff" fill-opacity=".7"/>
<path d="M610.0 107.9L690.6 104.9L742.8 110.9" fill="none" stroke="#fff" stroke-opacity=".5" stroke-width="1.2"/>
<path d="M651 112.6L690 111.3" fill="none" stroke="#d8d8dc" stroke-opacity=".8" stroke-width="1"/>
<path d="M610.0 107.9L613.4 397.5" stroke="url(#boxe)" stroke-width="1.5" stroke-opacity="0.75"/>
<path d="M653.4 120.6L650.5 435" stroke="url(#boxe)" stroke-width="1.7" stroke-opacity="0.95"/>
<path d="M742.8 110.9L725 417" stroke="url(#boxe)" stroke-width="1.5" stroke-opacity="0.8"/>
<path d="M613.4 397.5L650.5 435L725 417" fill="none" stroke="#fff" stroke-opacity=".25" stroke-width="1.2"/>
</g>
<g>
<path d="M590.3 194.2L609.6 192.2V212.4L590.3 214.6z" fill="#18d94a"/>
<path d="M633.6 173.6L642.2 175.6V193.8L633.6 190.4z" fill="#f03848"/>
<path d="M563.2 258.2L579.6 256.6L584.5 260.8L567.3 263.6z" fill="#2f45e0"/>
<path d="M670.8 271.4L646 255.6" stroke="#18d94a" stroke-width="4.2"/>
<path d="M631.4 247.8L643.6 245.2L648.8 252.6L644.6 260L635.4 260.8z" fill="#18d94a"/>
<path d="M670.8 271.4L610 279" stroke="#f03848" stroke-width="5"/>
<path d="M585 283.6L607.4 270.8L611.8 289.6z" fill="#f03848"/>
<path d="M670.8 271.4L671.6 203" stroke="#3348e0" stroke-width="5.4"/>
<path d="M672.2 180L681.8 205.2Q672 208 662.4 205.2z" fill="#3348e0"/>
<circle cx="670.8" cy="271.4" r="5.2" fill="#ededf0"/>
</g>
<g fill="#e9e9ea" stroke="#8c8c92" stroke-width="1.3">
<path d="M657.3 344.0Q662.3399999999999 355.62 674.0999999999999 360.6Q662.3399999999999 365.58000000000004 657.3 377.20000000000005Q652.26 365.58000000000004 640.5 360.6Q652.26 355.62 657.3 344.0z"/>
<path d="M684.9 360.90000000000003Q688.14 368.04 695.6999999999999 371.1Q688.14 374.16 684.9 381.3Q681.66 374.16 674.1 371.1Q681.66 368.04 684.9 360.90000000000003z"/>
<path d="M667.1 380.8Q670.52 387.8 678.5 390.8Q670.52 393.8 667.1 400.8Q663.6800000000001 393.8 655.7 390.8Q663.6800000000001 387.8 667.1 380.8z"/>
</g>
<g stroke-width="1.2" fill="none"><path d="M40.2 477.6L40.5 450" stroke="#1010f0"/><path d="M40.2 477.6L28.4 469.3" stroke="#14e014"/><path d="M40.2 477.6L14.2 482.1" stroke="#f01414"/></g>
<g font-family="Liberation Sans, sans-serif" font-size="11.5" text-anchor="middle"><text x="40.8" y="447.5" fill="#1a1aff">Z</text><text x="24.8" y="471.3" fill="#14e014">Y</text><text x="7.2" y="487.6" fill="#f01414">X</text></g>
</svg>
<div class="r" style="left:0px;top:0px;width:1916px;height:1px;background:#2a2d38;"></div>
<div class="r" style="left:0px;top:7px;width:179px;height:42px;background:#262933;border-radius:0 7px 0 0;"></div>
<svg style="left:2px;top:15px" width="28" height="24" viewBox="0 0 28 24" ><path d="M6.9 .1C8.6 .1 9.6 .9 12.5 1.3C15.4 .9 16.4 .1 18.1 .1C20.4 .1 21.4 1.6 22 3.6C22.9 6.6 23.6 9.6 23.5 12V14L17 11.9L9.8 12.2C8.6 12.4 7.4 13.6 6.4 14.6C5 15.6 3 15.4 2.2 14C1.4 12.4 1.9 8 2.9 4.4C3.6 1.6 4.8 .1 6.9 .1z" fill="#18a0e7"/><path d="M10.9 21.5L20.4 12" stroke="#262933" stroke-width="4.2"/><path d="M15.4 7.8Q18.2 5.8 20.4 9L25.2 14.2" stroke="#262933" stroke-width="4.6" fill="none"/><path d="M10.7 21.7L20.4 12" stroke="#18a0e7" stroke-width="2.7"/><path d="M19 9.6L24.9 14" stroke="#18a0e7" stroke-width="3.3"/><path d="M15.8 8.3Q17.6 6.5 19.8 9.2" stroke="#18a0e7" stroke-width="1.5" fill="none"/></svg>
<span class="t" style="left:34.0px;top:17.8px;font-size:17px;letter-spacing:-0.067px;color:#18a0e7;">NFT Cosmetics</span>
<svg style="left:157.5px;top:19px" width="16" height="16" viewBox="-8 -8 16 16" ><path d="M-5.0 -5.0L5.0 5.0M5.0 -5.0L-5.0 5.0" stroke="#18a0e7" stroke-width="2.1" fill="none"/></svg>
<div class="r" style="left:0px;top:49px;width:1px;height:469px;background:#22252f;"></div>
<div class="r" style="left:0px;top:518px;width:1256px;height:3px;background:#20232d;"></div>
<div class="r" style="left:1254px;top:49px;width:2px;height:469px;background:#22252f;"></div>
<div class="r" style="left:1263px;top:47px;width:653px;height:390px;background:#262933;"></div>
<div class="r" style="left:1263px;top:7px;width:136px;height:41px;background:#262933;border-radius:7px 7px 0 0;"></div>
<svg style="left:1269px;top:15.5px" width="23" height="23" viewBox="0 0 23 23" ><rect x="0" y="0.3" width="3.6" height="4" fill="#18a0e7"/><rect x="5.4" y="0.3" width="17.799999999999997" height="4" fill="#18a0e7"/><rect x="5.4" y="6.15" width="3.6" height="4" fill="#18a0e7"/><rect x="10.8" y="6.15" width="12.399999999999997" height="4" fill="#18a0e7"/><rect x="5.4" y="12.0" width="3.6" height="4" fill="#18a0e7"/><rect x="10.8" y="12.0" width="12.399999999999997" height="4" fill="#18a0e7"/><rect x="0" y="17.85" width="3.6" height="4" fill="#18a0e7"/><rect x="5.4" y="17.85" width="17.799999999999997" height="4" fill="#18a0e7"/></svg>
<span class="t" style="left:1299.0px;top:17.8px;font-size:17px;letter-spacing:-0.155px;color:#18a0e7;">Hierarchy</span>
<svg style="left:1377.5px;top:19px" width="16" height="16" viewBox="-8 -8 16 16" ><path d="M-5.0 -5.0L5.0 5.0M5.0 -5.0L-5.0 5.0" stroke="#18a0e7" stroke-width="2.1" fill="none"/></svg>
<div class="r" style="left:1273px;top:54px;width:593px;height:38px;background:#18a0e7;border-radius:6px;"></div>
<svg style="left:1281px;top:62.5px" width="20.64" height="20.64" viewBox="0 0 20.64 20.64" ><g transform="scale(0.86)"><path d="M1 3.7L22.2 1L22.7 4.2L1.5 6.9z" fill="#fff"/><path d="M4.4 3.3l2.6-.35 1.5 2.9-2.6.35zM9.8 2.6l2.6-.35 1.5 2.9-2.6.35zM15.2 1.9l2.6-.35 1.5 2.9-2.6.35zM20.4 1.2l2-.3.4 2.4-.9.2z" fill="#18a0e7"/><rect x="1.5" y="7.7" width="21.5" height="15.6" fill="#fff"/><path d="M4 7.7l2.5 0 1.3 2.7-2.5 0zM9.4 7.7l2.5 0 1.3 2.7-2.5 0zM14.8 7.7l2.5 0 1.3 2.7-2.5 0zM20.2 7.7l2.5 0 .3 2.7-1.5 0z" fill="#18a0e7"/><path d="M18 12.6c-3 .2-5.2 1.9-6.6 4.3l-2.2.5-1.5 1.8 2.3.1 1.9 1.7-.1 1.2 1.8-1 .6-2.3c2.4-1.3 3.8-3.5 3.8-6.3z" fill="#18a0e7"/><circle cx="15" cy="15.6" r="1" fill="#fff"/></g></svg>
<span class="t" style="left:1309.4px;top:63.0px;font-size:18px;letter-spacing:-1.043px;color:#fff;font-weight:700;">Scene: Main</span>
<svg style="left:1848.0px;top:70.0px" width="11" height="6" viewBox="0 0 11 6" ><path d="M0 0H11L5.5 6z" fill="#fff"/></svg>
<div class="r" style="left:1871px;top:54px;width:38px;height:38px;background:#18a0e7;border-radius:6px;"></div>
<svg style="left:1879.5px;top:62.5px" width="20.64" height="20.64" viewBox="0 0 20.64 20.64" ><g transform="scale(0.86)"><path d="M1 3.7L22.2 1L22.7 4.2L1.5 6.9z" fill="#fff"/><path d="M4.4 3.3l2.6-.35 1.5 2.9-2.6.35zM9.8 2.6l2.6-.35 1.5 2.9-2.6.35zM15.2 1.9l2.6-.35 1.5 2.9-2.6.35zM20.4 1.2l2-.3.4 2.4-.9.2z" fill="#18a0e7"/><rect x="1.5" y="7.7" width="21.5" height="15.6" fill="#fff"/><path d="M4 7.7l2.5 0 1.3 2.7-2.5 0zM9.4 7.7l2.5 0 1.3 2.7-2.5 0zM14.8 7.7l2.5 0 1.3 2.7-2.5 0zM20.2 7.7l2.5 0 .3 2.7-1.5 0z" fill="#18a0e7"/><path d="M18 12.6c-3 .2-5.2 1.9-6.6 4.3l-2.2.5-1.5 1.8 2.3.1 1.9 1.7-.1 1.2 1.8-1 .6-2.3c2.4-1.3 3.8-3.5 3.8-6.3z" fill="#18a0e7"/><circle cx="15" cy="15.6" r="1" fill="#fff"/></g></svg>
<div class="r" style="left:1273px;top:97px;width:500px;height:37px;background:#1b1e28;border-radius:6px;"></div>
<svg style="left:1283px;top:104.5px" width="20" height="20" viewBox="0 0 20 20" ><circle cx="14.2" cy="6.1" r="5.1" fill="none" stroke="#18a0e7" stroke-width="2.2"/><path d="M10.2 10L2.9 17.3" stroke="#18a0e7" stroke-width="3.2" stroke-linecap="round"/></svg>
<span class="t" style="left:1308.5px;top:104.8px;font-size:15.5px;letter-spacing:-0.722px;color:#6b6e79;">Search</span>
<div class="r" style="left:1786px;top:97px;width:38px;height:37px;background:#1b1e28;border-radius:6px;"></div>
<svg style="left:1794px;top:104px" width="24" height="24" viewBox="0 0 24 24" ><path d="M10.6 1.6L19.4 5.6V9.5A6 6 0 0 0 12.6 17.6L11.4 18.2V10.2L19.4 6.6M11.4 10.2L2 6M11.4 18.6V10.4" fill="none"/><path d="M10.6 1.4L19 5.4L10.8 9.2L2.4 5.4z" fill="#e8821c"/><path d="M1.8 6.6L10 10.4V19.8L1.8 15.8z" fill="#e8821c"/><path d="M11.6 10.4L19.6 6.6V10.6A5.6 5.6 0 0 0 13.4 18.8L11.6 19.8z" fill="#e8821c"/><circle cx="19" cy="16.4" r="4.4" fill="#e8821c"/></svg>
<div class="r" style="left:1829px;top:97px;width:37px;height:37px;background:#18a0e7;border-radius:6px;"></div>
<svg style="left:1837.5px;top:106.0px" width="20.0" height="20.0" viewBox="-10 -10 20 20" ><path d="M-8.8 -9.5H8.8L1.9 0.8H-1.9z" fill="#fff"/><path d="M-1.9 1.9H2.5V5.4L-1.9 9.4z" fill="#fff"/></svg>
<div class="r" style="left:1871px;top:97px;width:38px;height:37px;background:#18a0e7;border-radius:6px;"></div>
<svg style="left:1880px;top:105px" width="20" height="21" viewBox="0 0 20 21" ><path d="M10 16V2.2M2.2 9.6L10 1.8L17.8 9.6" fill="none" stroke="#fff" stroke-width="2.6"/><rect x="1" y="17.6" width="18" height="2.8" fill="#fff"/></svg>
<span class="t" style="left:1316.0px;top:154.8px;font-size:17px;letter-spacing:0.521px;color:#fff;">Misc</span>
<svg style="left:1860.5px;top:158.2px" width="16" height="11.6" viewBox="-9 -6.5 18 13" ><path d="M-8.3 0C-5 -7.3 5 -7.3 8.3 0C5 7.3 -5 7.3 -8.3 0z" fill="none" stroke="#fff" stroke-width="1.7"/><circle r="3.1" fill="#fff"/><circle r="1.2" cx="0" cy="0" fill="#8a8c93"/></svg>
<svg style="left:1886px;top:155px" width="14" height="18" viewBox="-7 -9 14 18" ><rect x="-6.5" y="-1.5" width="13" height="10" rx="1.8" fill="#1e212b"/><path d="M-4 -1V-4.2A4 4 0 0 1 4 -4.2V-1" fill="none" stroke="#1e212b" stroke-width="2.2"/></svg>
<span class="t" style="left:1316.0px;top:187.8px;font-size:17px;letter-spacing:-0.293px;color:#fff;">Client</span>
<svg style="left:1860.5px;top:191.2px" width="16" height="11.6" viewBox="-9 -6.5 18 13" ><path d="M-8.3 0C-5 -7.3 5 -7.3 8.3 0C5 7.3 -5 7.3 -8.3 0z" fill="none" stroke="#fff" stroke-width="1.7"/><circle r="3.1" fill="#fff"/><circle r="1.2" cx="0" cy="0" fill="#8a8c93"/></svg>
<svg style="left:1886px;top:188px" width="14" height="18" viewBox="-7 -9 14 18" ><rect x="-6.5" y="-1.5" width="13" height="10" rx="1.8" fill="#1e212b"/><path d="M-4 -1V-4.2A4 4 0 0 1 4 -4.2V-1" fill="none" stroke="#1e212b" stroke-width="2.2"/></svg>
<span class="t" style="left:1328.0px;top:219.8px;font-size:17px;letter-spacing:-0.073px;color:#fff;">Fantasy Shield 01 (client)</span>
<svg style="left:1860.5px;top:223.2px" width="16" height="11.6" viewBox="-9 -6.5 18 13" ><path d="M-8.3 0C-5 -7.3 5 -7.3 8.3 0C5 7.3 -5 7.3 -8.3 0z" fill="none" stroke="#fff" stroke-width="1.7"/><circle r="3.1" fill="#fff"/><circle r="1.2" cx="0" cy="0" fill="#8a8c93"/></svg>
<svg style="left:1886px;top:220px" width="14" height="18" viewBox="-7 -9 14 18" ><rect x="-6.5" y="-1.5" width="13" height="10" rx="1.8" fill="#1e212b"/><path d="M-4 -1V-4.2A4 4 0 0 1 4 -4.2V-1" fill="none" stroke="#1e212b" stroke-width="2.2"/></svg>
<span class="t" style="left:1341.5px;top:252.8px;font-size:17px;letter-spacing:-0.028px;color:#fff;">Beam Up Teleport VFX (client)</span>
<svg style="left:1860.5px;top:256.2px" width="16" height="11.6" viewBox="-9 -6.5 18 13" ><path d="M-8.3 0C-5 -7.3 5 -7.3 8.3 0C5 7.3 -5 7.3 -8.3 0z" fill="none" stroke="#fff" stroke-width="1.7"/><circle r="3.1" fill="#fff"/><circle r="1.2" cx="0" cy="0" fill="#8a8c93"/></svg>
<svg style="left:1886px;top:253px" width="14" height="18" viewBox="-7 -9 14 18" ><rect x="-6.5" y="-1.5" width="13" height="10" rx="1.8" fill="#1e212b"/><path d="M-4 -1V-4.2A4 4 0 0 1 4 -4.2V-1" fill="none" stroke="#1e212b" stroke-width="2.2"/></svg>
<span class="t" style="left:1328.0px;top:284.8px;font-size:17px;letter-spacing:0.163px;color:#fff;">Trigger (client)</span>
<svg style="left:1860.5px;top:288.2px" width="16" height="11.6" viewBox="-9 -6.5 18 13" ><path d="M-8.3 0C-5 -7.3 5 -7.3 8.3 0C5 7.3 -5 7.3 -8.3 0z" fill="none" stroke="#fff" stroke-width="1.7"/><circle r="3.1" fill="#fff"/><circle r="1.2" cx="0" cy="0" fill="#8a8c93"/></svg>
<svg style="left:1886px;top:285px" width="14" height="18" viewBox="-7 -9 14 18" ><rect x="-6.5" y="-1.5" width="13" height="10" rx="1.8" fill="#1e212b"/><path d="M-4 -1V-4.2A4 4 0 0 1 4 -4.2V-1" fill="none" stroke="#1e212b" stroke-width="2.2"/></svg>
<div class="r" style="left:1271px;top:278px;width:640px;height:31.80000000000001px;background:transparent;border:1.5px solid #18a0e7;box-sizing:border-box;"></div>
<svg style="left:1271.5px;top:157px" width="10" height="12" viewBox="0 0 10 12" ><path d="M1.8 1.8L7.6 6L1.8 10.2z" fill="none" stroke="#85878f" stroke-width="1.5"/></svg>
<svg style="left:1271px;top:190px" width="10" height="10" viewBox="0 0 10 10" ><path d="M9.4 1V9.4H1z" fill="#8d8f97"/></svg>
<svg style="left:1283.5px;top:222.5px" width="10" height="10" viewBox="0 0 10 10" ><path d="M9.4 1V9.4H1z" fill="#8d8f97"/></svg>
<svg style="left:1287px;top:155.5px" width="19" height="16" viewBox="0 0 19 16" ><path d="M.6 14.6V2Q.6 .8 1.8 .8H5.8L7.4 2.6H13.4Q14.6 2.6 14.6 3.8V4.6H4.4Q3.4 4.6 3 5.6z" fill="#fff"/><path d="M4.4 5.6H17.6Q18.6 5.6 18.2 6.6L15.6 14.4Q15.2 15.4 14.2 15.4H1.4z" fill="#fff"/></svg>
<svg style="left:1287px;top:187px" width="19" height="19" viewBox="0 0 19 19" ><path d="M.6 11.6V1.8Q.6 .8 1.6 .8H4.8L6.2 2.4H12.2Q13.2 2.4 13.2 3.4V4.2" fill="none" stroke="#fff" stroke-width="1.4"/><path d="M3 4.6H5.6L6.8 6H14.8Q15.6 6 15.6 6.8V8H7.4V13.4H3z" fill="#fff"/><rect x="8.2" y="8.6" width="9.6" height="6.4" fill="#fff"/><rect x="9.4" y="9.8" width="7.2" height="3.6" fill="#262933"/><path d="M7 18.2L8.6 15.6H17.4L19 18.2z" fill="#fff"/></svg>
<svg style="left:1301.7px;top:220.6px" width="15.8" height="17.4" viewBox="0 0 19 20" ><path d="M9.5 .6L18 4.4L9.5 8.4L1 4.4z" fill="#fff"/><path d="M.6 5.6L8.8 9.6V19.4L.6 15.2z" fill="#fff"/><path d="M18.4 5.6L10.2 9.6V19.4L18.4 15.2z" fill="#fff"/></svg>
<svg style="left:1313px;top:253px" width="18" height="18" viewBox="0 0 18 18" ><path d="M6 0.20000000000000018Q7.144 4.256 11.2 5.4Q7.144 6.5440000000000005 6 10.600000000000001Q4.856 6.5440000000000005 0.7999999999999998 5.4Q4.856 4.256 6 0.20000000000000018z" fill="#fff"/><path d="M13.6 5.199999999999999Q14.347999999999999 7.851999999999999 17.0 8.6Q14.347999999999999 9.347999999999999 13.6 12.0Q12.852 9.347999999999999 10.2 8.6Q12.852 7.851999999999999 13.6 5.199999999999999z" fill="#fff"/><path d="M7.6 10.8Q8.26 13.14 10.6 13.8Q8.26 14.46 7.6 16.8Q6.9399999999999995 14.46 4.6 13.8Q6.9399999999999995 13.14 7.6 10.8z" fill="#fff"/></svg>
<svg style="left:1300.5px;top:284.5px" width="17" height="18" viewBox="0 0 30 33" ><ellipse cx="14.5" cy="26.5" rx="13.7" ry="6.3" fill="#fff"/><ellipse cx="14.7" cy="22.6" rx="10" ry="4.9" fill="#262933"/><path d="M6.7 17.2V22.4Q14.7 28 23.3 22.4V17.2z" fill="#fff"/><ellipse cx="14.7" cy="15.6" rx="9.4" ry="4.2" fill="#262933"/><ellipse cx="14.7" cy="14.4" rx="7.7" ry="2.7" fill="#fff"/><path d="M13.5 1H15.9L15.4 6.9H14z" fill="#fff"/><path d="M6.4 4.9L8.2 3.3L12.2 8.6L11.2 9.4z" fill="#fff"/><path d="M23.4 5.1L21.6 3.5L17.5 8.6L18.5 9.4z" fill="#fff"/></svg>
<div class="r" style="left:1263px;top:481px;width:653px;height:371px;background:#262933;"></div>
<div class="r" style="left:1263px;top:442px;width:144px;height:40px;background:#262933;border-radius:7px 7px 0 0;"></div>
<svg style="left:1267px;top:450px" width="27" height="26" viewBox="0 0 27 26" ><path d="M9.9 2.6L10.6 0.1L14.2 0.1L14.9 2.6L16.3 3.2L18.5 1.8L21.1 4.4L19.7 6.6L20.3 8.0L22.8 8.7L22.8 12.3L20.3 13.0L19.7 14.4L21.1 16.6L18.5 19.2L16.3 17.8L14.9 18.4L14.2 20.9L10.6 20.9L9.9 18.4L8.5 17.8L6.3 19.2L3.7 16.6L5.1 14.4L4.5 13.0L2.0 12.3L2.0 8.7L4.5 8.0L5.1 6.6L3.7 4.4L6.3 1.8L8.5 3.2z" fill="#18a0e7" stroke="#18a0e7" stroke-width=".8" stroke-linejoin="round"/><circle cx="12.4" cy="10.5" r="3.7" fill="#262933"/><path d="M10.6 22.8L21 12.8" stroke="#262933" stroke-width="6.2" stroke-linecap="round"/><circle cx="21.2" cy="12.6" r="5.6" fill="#262933"/><path d="M11.9 21.4L19.6 14.2" stroke="#18a0e7" stroke-width="3.3" stroke-linecap="round"/><circle cx="21" cy="12.8" r="4.2" fill="#18a0e7"/><path d="M21.6 12.2L26 7.8" stroke="#262933" stroke-width="3"/></svg>
<span class="t" style="left:1299.0px;top:452.8px;font-size:17px;letter-spacing:0.225px;color:#18a0e7;">Properties</span>
<svg style="left:1385.7px;top:454px" width="16" height="16" viewBox="-8 -8 16 16" ><path d="M-5.0 -5.0L5.0 5.0M5.0 -5.0L-5.0 5.0" stroke="#18a0e7" stroke-width="2.1" fill="none"/></svg>
<svg style="left:1279px;top:492px" width="30" height="33" viewBox="0 0 30 33" ><ellipse cx="14.5" cy="26.5" rx="13.7" ry="6.3" fill="#18a0e7"/><ellipse cx="14.7" cy="22.6" rx="10" ry="4.9" fill="#262933"/><path d="M6.7 17.2V22.4Q14.7 28 23.3 22.4V17.2z" fill="#18a0e7"/><ellipse cx="14.7" cy="15.6" rx="9.4" ry="4.2" fill="#262933"/><ellipse cx="14.7" cy="14.4" rx="7.7" ry="2.7" fill="#18a0e7"/><path d="M13.5 1H15.9L15.4 6.9H14z" fill="#18a0e7"/><path d="M6.4 4.9L8.2 3.3L12.2 8.6L11.2 9.4z" fill="#18a0e7"/><path d="M23.4 5.1L21.6 3.5L17.5 8.6L18.5 9.4z" fill="#18a0e7"/></svg>
<div class="r" style="left:1326px;top:489px;width:575px;height:39.5px;background:#1b1e28;border-radius:6px;"></div>
<span class="t" style="left:1332.4px;top:498.6px;font-size:15.5px;letter-spacing:0.013px;color:#fff;">Trigger</span>
<span class="t" style="left:1292.5px;top:572.8px;font-size:17px;letter-spacing:-0.697px;color:#18a0e7;font-weight:700;">Scene</span>
<svg style="left:1275.0px;top:579.25px" width="9" height="5.5" viewBox="0 0 9 5.5" ><path d="M0 0H9L4.5 5.5z" fill="#18a0e7"/></svg>
<span class="t" style="left:1683.0px;top:572.8px;font-size:17px;letter-spacing:-0.048px;color:#18a0e7;">Advanced Settings</span>
<div class="r" style="left:1837px;top:565px;width:30px;height:29.5px;background:#1f222c;border-radius:5px;"></div>
<svg style="left:1844px;top:574.5px" width="16" height="12" viewBox="0 0 16 12" ><path d="M1.4 6.6L5.6 10.2L14.6 1.8" fill="none" stroke="#e8821c" stroke-width="2.6"/></svg>
<span class="t" style="left:1291.0px;top:613.8px;font-size:17px;letter-spacing:-0.097px;color:#fff;">Game Collision</span>
<div class="r" style="left:1623px;top:607px;width:150px;height:32px;background:#18a0e7;border-radius:5px;"></div>
<span class="t" style="left:1632.0px;top:613.8px;font-size:17px;letter-spacing:-0.946px;color:#fff;font-weight:700;">Force On</span>
<svg style="left:1754.5px;top:620.5px" width="11" height="6" viewBox="0 0 11 6" ><path d="M0 0H11L5.5 6z" fill="#fff"/></svg>
<svg style="left:1876px;top:614px" width="18" height="18" viewBox="-9 -9 18 18" ><path d="M-3.2 -5.6A6.4 6.4 0 1 1 -6.2 1.8" fill="none" stroke="#3d4254" stroke-width="1.7"/><path d="M-7.2 -7.6L-1.2 -5.0L-6.0 -1.2z" fill="#3d4254"/></svg>
<span class="t" style="left:1291.0px;top:650.8px;font-size:17px;letter-spacing:0.213px;color:#fff;">Editor Indicator Visibility</span>
<div class="r" style="left:1623px;top:644px;width:209px;height:32.5px;background:#18a0e7;border-radius:5px;"></div>
<span class="t" style="left:1632.0px;top:650.8px;font-size:17px;letter-spacing:-0.357px;color:#fff;font-weight:700;">Visible When Selected</span>
<svg style="left:1814.0px;top:657.5px" width="11" height="6" viewBox="0 0 11 6" ><path d="M0 0H11L5.5 6z" fill="#fff"/></svg>
<svg style="left:1876px;top:651px" width="18" height="18" viewBox="-9 -9 18 18" ><path d="M-3.2 -5.6A6.4 6.4 0 1 1 -6.2 1.8" fill="none" stroke="#3d4254" stroke-width="1.7"/><path d="M-7.2 -7.6L-1.2 -5.0L-6.0 -1.2z" fill="#3d4254"/></svg>
<span class="t" style="left:1291.0px;top:688.5px;font-size:17px;letter-spacing:-0.062px;color:#e8821c;">Is Advanced</span>
<div class="r" style="left:1623px;top:683px;width:30px;height:29.5px;background:#1c1f29;border-radius:5px;"></div>
<svg style="left:1876px;top:689px" width="18" height="18" viewBox="-9 -9 18 18" ><path d="M-3.2 -5.6A6.4 6.4 0 1 1 -6.2 1.8" fill="none" stroke="#3d4254" stroke-width="1.7"/><path d="M-7.2 -7.6L-1.2 -5.0L-6.0 -1.2z" fill="#3d4254"/></svg>
<svg style="left:1287.5px;top:728.75px" width="9" height="5.5" viewBox="0 0 9 5.5" ><path d="M0 0H9L4.5 5.5z" fill="#e8821c"/></svg>
<span class="t" style="left:1304.0px;top:722.8px;font-size:17px;letter-spacing:-0.457px;color:#e8821c;font-weight:700;">Network Relevance</span>
<span class="t" style="left:1301.3px;top:755.8px;font-size:17px;letter-spacing:-0.371px;color:#e8821c;">Desired Relevance</span>
<div class="r" style="left:1623px;top:749px;width:150px;height:32.5px;background:#18a0e7;border-radius:5px;"></div>
<span class="t" style="left:1632.4px;top:755.8px;font-size:17px;letter-spacing:-0.433px;color:#fff;font-weight:700;">Critical</span>
<svg style="left:1754.5px;top:762.5px" width="11" height="6" viewBox="0 0 11 6" ><path d="M0 0H11L5.5 6z" fill="#fff"/></svg>
<svg style="left:1876px;top:756px" width="18" height="18" viewBox="-9 -9 18 18" ><path d="M-3.2 -5.6A6.4 6.4 0 1 1 -6.2 1.8" fill="none" stroke="#3d4254" stroke-width="1.7"/><path d="M-7.2 -7.6L-1.2 -5.0L-6.0 -1.2z" fill="#3d4254"/></svg>
<span class="t" style="left:1301.3px;top:793.8px;font-size:17px;letter-spacing:-0.273px;color:#e8821c;">Inherited Relevance</span>
<div class="r" style="left:1623px;top:787px;width:247.5px;height:31.5px;background:#20232e;border-radius:5px;"></div>
<span class="t" style="left:1629.4px;top:792.8px;font-size:15.5px;letter-spacing:-0.023px;color:#444859;">Critical</span>
<svg style="left:1876px;top:794px" width="18" height="18" viewBox="-9 -9 18 18" ><path d="M-3.2 -5.6A6.4 6.4 0 1 1 -6.2 1.8" fill="none" stroke="#3d4254" stroke-width="1.7"/><path d="M-7.2 -7.6L-1.2 -5.0L-6.0 -1.2z" fill="#3d4254"/></svg>
<div class="r" style="left:1266px;top:822px;width:640px;height:3px;background:#1d202a;"></div>
<svg style="left:1275.0px;top:838.25px" width="9" height="5.5" viewBox="0 0 9 5.5" ><path d="M0 0H9L4.5 5.5z" fill="#18a0e7"/></svg>
<span class="t" style="left:1292.6px;top:831.8px;font-size:17px;letter-spacing:-0.766px;color:#18a0e7;font-weight:700;">Gameplay</span>
<div class="r" style="left:1263px;top:846px;width:645px;height:6px;background:linear-gradient(#1a1c25 0,#1a1c25 30%,#262933 100%);"></div>
<div class="r" style="left:1263px;top:846.5px;width:645px;height:5.5px;background:linear-gradient(rgba(22,24,32,.95),rgba(30,33,43,.6));"></div>
<div class="r" style="left:1909px;top:574px;width:5px;height:270px;background:#1c1f29;"></div>
<div class="r" style="left:1909px;top:626px;width:5px;height:130px;background:#18a0e7;"></div>
<div class="r" style="left:1266px;top:569px;width:640px;height:7px;background:linear-gradient(rgba(8,9,14,.95),rgba(8,9,14,.5) 45%,rgba(8,9,14,0));"></div>
<div class="r" style="left:1272px;top:533px;width:552px;height:37px;background:#1b1e28;border-radius:6px;"></div>
<svg style="left:1281px;top:541.5px" width="20" height="20" viewBox="0 0 20 20" ><circle cx="14.2" cy="6.1" r="5.1" fill="none" stroke="#18a0e7" stroke-width="2.2"/><path d="M10.2 10L2.9 17.3" stroke="#18a0e7" stroke-width="3.2" stroke-linecap="round"/></svg>
<span class="t" style="left:1307.0px;top:541.6px;font-size:15.5px;letter-spacing:-0.083px;color:#6b6e79;">Find Property by Name</span>
<div class="r" style="left:1826px;top:533px;width:38px;height:37px;background:#18a0e7;border-radius:6px;"></div>
<svg style="left:1835px;top:541px" width="20" height="22" viewBox="0 0 20 22" ><path d="M5.6 1H13.2L18.4 6.2V17.4H5.6z" fill="#fff"/><path d="M13 1.2V6.4H18.2" fill="none" stroke="#18a0e7" stroke-width="1.3"/><path d="M2.4 5.6V20.6H14.2" fill="none" stroke="#fff" stroke-width="2"/></svg>
<div class="r" style="left:1866px;top:533px;width:38px;height:37px;background:#1d6894;border-radius:6px;"></div>
<svg style="left:1876px;top:541px" width="18" height="22" viewBox="0 0 18 22" ><rect x="1.4" y="4" width="15.2" height="16.6" fill="none" stroke="#232733" stroke-width="2"/><rect x="5" y="1.6" width="8" height="5" rx="1" fill="#232733"/><rect x="7.4" y=".2" width="3.2" height="3" rx="1" fill="#232733"/></svg>
<div class="r" style="left:0px;top:567px;width:1256px;height:285px;background:#262933;"></div>
<div class="r" style="left:0px;top:527px;width:181px;height:41px;background:#262933;border-radius:0 7px 0 0;"></div>
<svg style="left:3px;top:535px" width="26" height="24" viewBox="0 0 26 24" ><path d="M1.4 16.4V3Q1.4 1.6 2.8 1.6H8.2L10.2 4H19.4Q20.8 4 20.8 5.4V6.6" fill="none" stroke="#18a0e7" stroke-width="1.8"/><path d="M6 7H24Q25.4 7 25 8.4L22.4 17.4Q22 18.6 20.6 18.6H1.4L4.4 8.2Q4.8 7 6 7z" fill="#18a0e7"/><path d="M23.4 9.6C19 9.6 15.8 12 13.6 15.4L10.4 16L8.2 18.8L11.6 19L14.4 21.6L14.2 23.6L17 22L17.8 18.6C21.4 16.8 23.4 13.6 23.4 9.6z" fill="#18a0e7" stroke="#262933" stroke-width="1.6"/><circle cx="19" cy="14" r="1.6" fill="#262933"/><path d="M9.6 20.4L12 22.6L8.4 23.6z" fill="#18a0e7"/></svg>
<span class="t" style="left:34.5px;top:538.1px;font-size:17px;letter-spacing:0.045px;color:#18a0e7;">Project Content</span>
<svg style="left:159.5px;top:539px" width="16" height="16" viewBox="-8 -8 16 16" ><path d="M-5.0 -5.0L5.0 5.0M5.0 -5.0L-5.0 5.0" stroke="#18a0e7" stroke-width="2.1" fill="none"/></svg>
<svg style="left:187px;top:535.5px" width="23" height="24" viewBox="0 0 23 24" ><path d="M11.5 1L21.2 6.2V17.4L11.5 22.8L1.8 17.4V6.2z" fill="none" stroke="#4a4f66" stroke-width="1.8"/><path d="M4.6 10.2A7 7 0 0 1 18.4 10.2L18.4 13.4Q15.6 18.6 11.5 18.8Q7.4 18.6 4.6 13.4z" fill="#4a4f66"/><path d="M11.5 18.6V22.4" stroke="#4a4f66" stroke-width="1.6"/></svg>
<span class="t" style="left:217.3px;top:538.1px;font-size:17px;letter-spacing:-0.307px;color:#4a4f66;">Core Content 1</span>
<svg style="left:336.5px;top:539px" width="16" height="16" viewBox="-8 -8 16 16" ><path d="M-5.0 -5.0L5.0 5.0M5.0 -5.0L-5.0 5.0" stroke="#4a4f66" stroke-width="2.1" fill="none"/></svg>
<svg style="left:365px;top:536px" width="23" height="23" viewBox="0 0 23 23" ><path d="M3.6 19.6V3.4Q3.6 1.4 5.6 1.4H19.4Q21.4 1.4 21.4 3.4V16.6H6.4Q3.6 16.6 3.6 19.6Q3.6 21.8 6.4 21.8H21.6" fill="none" stroke="#4a4f66" stroke-width="1.9"/><path d="M10.4 6L7.8 8.8L10.4 11.6M14.6 6L17.2 8.8L14.6 11.6" fill="none" stroke="#4a4f66" stroke-width="1.6"/><rect x="3.4" y="17.2" width="19" height="5" rx="2.5" fill="#4a4f66"/></svg>
<span class="t" style="left:395.4px;top:538.1px;font-size:17px;letter-spacing:-0.055px;color:#4a4f66;">Script Helper</span>
<svg style="left:500px;top:539px" width="16" height="16" viewBox="-8 -8 16 16" ><path d="M-5.0 -5.0L5.0 5.0M5.0 -5.0L-5.0 5.0" stroke="#4a4f66" stroke-width="2.1" fill="none"/></svg>
<svg style="left:529px;top:535px" width="19" height="25" viewBox="0 0 19 25" ><rect x="1.4" y="3.6" width="16.2" height="20" rx="1.6" fill="none" stroke="#4a4f66" stroke-width="1.8"/><rect x="5.6" y="1" width="7.8" height="4.6" rx="1.2" fill="#1b1e28" stroke="#4a4f66" stroke-width="1.5"/><path d="M5 10.4H14M5 14.4H14M5 18.4H14" stroke="#4a4f66" stroke-width="1.6"/></svg>
<span class="t" style="left:558.4px;top:538.1px;font-size:17px;letter-spacing:-0.332px;color:#4a4f66;">Event Log</span>
<svg style="left:638.5px;top:539px" width="16" height="16" viewBox="-8 -8 16 16" ><path d="M-5.0 -5.0L5.0 5.0M5.0 -5.0L-5.0 5.0" stroke="#4a4f66" stroke-width="2.1" fill="none"/></svg>
<span class="t" style="left:54.2px;top:569.8px;font-size:17px;letter-spacing:0.068px;color:#18a0e7;">My Materials</span>
<span class="t" style="left:54.2px;top:607.2px;font-size:17px;letter-spacing:-0.161px;color:#18a0e7;">My Brushes</span>
<span class="t" style="left:54.2px;top:645.1px;font-size:17px;letter-spacing:0.179px;color:#18a0e7;">My Items</span>
<span class="t" style="left:54.2px;top:682.4px;font-size:17px;letter-spacing:-0.117px;color:#18a0e7;">My Binding Sets</span>
<span class="t" style="left:54.2px;top:720.1px;font-size:17px;letter-spacing:0.110px;color:#fff;">My Tables</span>
<span class="t" style="left:54.2px;top:757.2px;font-size:17px;letter-spacing:-0.091px;color:#18a0e7;">My Perks</span>
<span class="t" style="left:54.2px;top:794.8px;font-size:17px;letter-spacing:-0.332px;color:#18a0e7;">My Shared Keys</span>
<span class="t" style="left:54.2px;top:831.8px;font-size:17px;letter-spacing:-0.229px;color:#18a0e7;">My Shared Content</span>
<svg style="left:30px;top:569px" width="11" height="18" viewBox="0 0 11 18" ><path d="M.4 .6L10.4 9L.4 17.4z" fill="#fff"/></svg>
<div class="r" style="left:0px;top:567px;width:247px;height:6px;background:linear-gradient(rgba(10,11,16,.7),rgba(10,11,16,0));"></div>
<div class="r" style="left:250px;top:571px;width:5px;height:281px;background:#1c1f29;"></div>
<div class="r" style="left:250px;top:677px;width:5px;height:175px;background:#18a0e7;"></div>
<div class="r" style="left:263px;top:570px;width:500px;height:37px;background:#1b1e28;border-radius:6px;"></div>
<svg style="left:273px;top:577.5px" width="20" height="20" viewBox="0 0 20 20" ><circle cx="14.2" cy="6.1" r="5.1" fill="none" stroke="#18a0e7" stroke-width="2.2"/><path d="M10.2 10L2.9 17.3" stroke="#18a0e7" stroke-width="3.2" stroke-linecap="round"/></svg>
<span class="t" style="left:298.0px;top:577.3px;font-size:15.5px;letter-spacing:-0.622px;color:#6b6e79;">Search</span>
<div class="r" style="left:1006px;top:569px;width:37px;height:38px;background:#18a0e7;border-radius:6px;"></div>
<svg style="left:1011.0799999999999px;top:577.22px" width="27.439999999999998" height="21.56" viewBox="0 0 28 22" ><path d="M1.2 19V3.4Q1.2 1.4 3.2 1.4H9.4L11.8 4.2H20.2Q22.2 4.2 22.2 6.2V7.4" fill="none" stroke="#fff" stroke-width="2"/><path d="M5.6 7.6H26.2Q27.6 7.6 27.2 9L24.4 19.4Q24 20.8 22.6 20.8H1.6Q.6 20.8 1 19.6L4.2 8.8Q4.6 7.6 5.6 7.6z" fill="#fff"/></svg>
<div class="r" style="left:1048px;top:569px;width:57px;height:38px;background:#18a0e7;border-radius:6px;"></div>
<svg style="left:1058.0px;top:579.0px" width="19.0" height="19.0" viewBox="-10 -10 20 20" ><path d="M-8.8 -9.5H8.8L1.9 0.8H-1.9z" fill="#fff"/><path d="M-1.9 1.9H2.5V5.4L-1.9 9.4z" fill="#fff"/></svg>
<svg style="left:1087.0px;top:584.75px" width="10" height="5.5" viewBox="0 0 10 5.5" ><path d="M0 0H10L5.0 5.5z" fill="#fff"/></svg>
<div class="r" style="left:1110px;top:569px;width:143px;height:38px;background:#3a4052;border-radius:6px;"></div>
<span class="t" style="left:1118.3px;top:578.8px;font-size:17px;letter-spacing:-0.373px;color:#2a2d37;font-weight:700;">Publish Content</span>
<div class="r" style="left:264px;top:613px;width:29px;height:30px;background:#1f222c;"></div>
<div class="r" style="left:264px;top:645px;width:29px;height:30px;background:#1f222c;"></div>
<svg style="left:267.5px;top:616.5px" width="23" height="23" viewBox="0 0 23 23" ><rect x="0" y="0" width="23" height="23" fill="#fff"/><rect x="3" y="3.0" width="3.6" height="4.2" fill="#1b1e28"/><rect x="8.6" y="3.0" width="11.6" height="4.2" fill="#1b1e28"/><rect x="3" y="9.2" width="3.6" height="4.2" fill="#1b1e28"/><rect x="8.6" y="9.2" width="11.6" height="4.2" fill="#1b1e28"/><rect x="3" y="15.4" width="3.6" height="4.2" fill="#1b1e28"/><rect x="8.6" y="15.4" width="11.6" height="4.2" fill="#1b1e28"/></svg>
<svg style="left:267.5px;top:648.5px" width="23" height="23" viewBox="0 0 23 23" ><rect x="0" y="0" width="23" height="23" fill="#fff"/><rect x="3" y="3.0" width="3.6" height="4.2" fill="#1b1e28"/><rect x="8.6" y="3.0" width="11.6" height="4.2" fill="#1b1e28"/><rect x="3" y="9.2" width="3.6" height="4.2" fill="#1b1e28"/><rect x="8.6" y="9.2" width="11.6" height="4.2" fill="#1b1e28"/><rect x="3" y="15.4" width="3.6" height="4.2" fill="#1b1e28"/><rect x="8.6" y="15.4" width="11.6" height="4.2" fill="#1b1e28"/></svg>
<div class="r" style="left:263px;top:612px;width:990px;height:32px;background:transparent;border:1.5px solid #18a0e7;box-sizing:border-box;"></div>
<span class="t" style="left:297.5px;top:619.2px;font-size:17px;letter-spacing:0.205px;color:#fff;">Cosmetic Tokens</span>
<span class="t" style="left:297.5px;top:651.3px;font-size:17px;letter-spacing:0.144px;color:#fff;">Cosmetics</span>
</body></html>
